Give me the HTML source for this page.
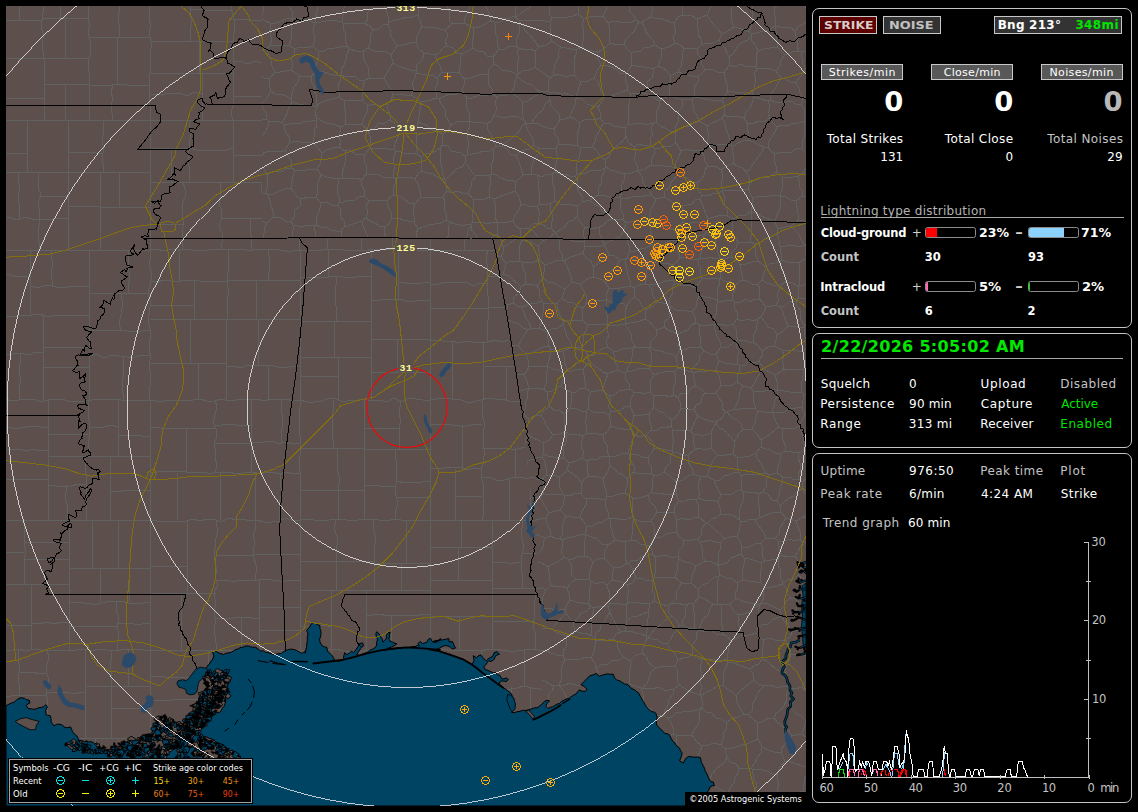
<!DOCTYPE html>
<html lang="en"><head><meta charset="utf-8"><title>Lightning Detector</title>
<style>
html,body{margin:0;padding:0;background:#000;}
body{width:1138px;height:812px;position:relative;overflow:hidden;font-family:'DejaVu Sans','Liberation Sans',sans-serif;}
#map{position:absolute;left:6px;top:6px;width:800px;height:800px;background:#5d4f4b;overflow:hidden;}
#map svg{position:absolute;left:0;top:0;}
#side{position:absolute;left:0;top:0;width:1138px;height:812px;pointer-events:none;}
.t{position:absolute;line-height:1;white-space:pre;font-family:'DejaVu Sans','Liberation Sans',sans-serif;}
.box{position:absolute;box-sizing:border-box;border:1px solid #c4c4c4;border-radius:7px;left:812px;width:320px;}
.btn{position:absolute;box-sizing:border-box;border:1px solid #c8c8c8;}
.bar{position:absolute;box-sizing:border-box;border:1px solid #8c8c8c;border-radius:2.5px;width:51px;height:11px;background:#000;overflow:hidden;}
.bar i{position:absolute;left:0;top:0;height:9px;display:block;}
.hl{position:absolute;height:1px;background:#a8a8a8;}

</style></head>
<body>
<div id="map">
<svg width="800" height="800" viewBox="6 6 800 800">
<rect x="6" y="6" width="800" height="800" fill="#5d4f4b"/>
<clipPath id="cw"><path d="M6 6H262V238H493L521 406L542 594V806H6Z"/></clipPath>
<clipPath id="ce"><path d="M262 6H806V806H542V594L521 406L493 238H262Z"/></clipPath>
<path clip-path="url(#cw)" d="M-10 -10L150 -10M-10 -10L-11 -3L-10 4L-10 12L-11 19L-10 26L-11 33L-11 41L-9 48L-10 55L-11 62L-9 69L-9 77L-8 84L-10 91L-12 98L-12 106L-9 113L-10 120M89 -10L89 -3L89 4L88 12L88 19L90 26L88 33L90 41L90 48L90 55L88 62L88 69L90 77L89 84L90 91L89 98L89 106L89 113L89 120M-10 58L89 58M43 -10L44 -2L44 5L43 13L42 20L41 28L44 35L42 43L43 51L43 58M-10 20L-2 20L5 20L13 21L20 20L28 20L36 20L43 20M19 -10L19 20M43 18L89 18M60 -10L60 -1L61 8L60 18M65 18L65 58M44 58L44 120M-10 98L44 98M44 84L89 84M65 84L65 120M89 37L150 37M119 -10L120 -2L120 6L119 13L118 21L120 29L119 37M89 85L97 85L104 86L112 85L120 84L127 85L135 85L142 85L150 85M117 37L117 85M113 85L111 92L113 99L111 106L112 113L113 120M-10 120L150 120M-10 120L-10 250M68 120L68 250M-10 172L68 172M27 120L27 172M-10 153L27 153M-10 219L-3 219L4 217L11 218L18 220L25 217L32 219L39 219L46 219L54 219L61 218L68 219M39 172L38 179L38 187L41 195L38 203L40 211L39 219M19 172L18 179L20 187L18 195L19 203L19 211L19 219M39 196L68 196M39 219L39 226L38 234L39 242L39 250M68 172L150 172M103 120L104 127L103 135L102 142L104 150L102 157L103 165L103 172M68 153L75 152L82 152L89 152L96 153L103 153M100 172L100 250M68 206L100 206M100 207L150 207M119 172L119 207M-10 250L150 250M-10 250L-11 257L-10 264L-11 271L-9 279L-11 286L-10 293L-11 300L-9 307L-10 314L-10 321L-9 329L-10 336L-10 343L-11 350L-10 357L-9 364L-10 371L-11 379L-9 386L-10 393L-10 400M89 250L89 400M-10 315L-3 316L4 316L11 316L18 316L25 315L32 315L39 314L46 316L53 316L60 315L68 316L75 315L82 315L89 315M30 250L30 315M-10 276L-2 276L6 274L14 276L22 276L30 276M30 286L38 288L45 285L52 286L60 288L67 287L74 286L81 287L89 286M52 250L51 257L53 264L51 272L52 279L52 286M43 315L43 400M-10 353L-2 355L5 354L13 354L20 353L28 355L36 352L43 353M20 353L21 361L19 369L20 377L20 384L19 392L20 400M43 367L89 367M43 347L89 347M89 330L96 330L104 331L112 330L119 330L127 331L135 331L142 331L150 330M89 293L150 293M128 250L129 257L128 264L129 271L130 278L128 285L128 293M121 293L122 300L122 308L121 315L119 323L121 330M89 356L96 354L104 358L112 355L119 356L127 357L135 357L142 355L150 356M123 356L124 363L123 371L123 378L122 385L123 393L123 400M-10 400L-3 399L5 399L12 401L19 400L26 399L34 399L41 402L48 400L55 399L63 399L70 402L77 401L85 401L92 400L99 399L106 400L114 399L121 400L128 400L135 401L143 400L150 400M-10 400L-10 520M48 400L48 520M-10 450L-3 451L5 449L12 450L19 449L26 451L34 449L41 451L48 450M-10 427L-3 428L5 427L12 428L19 428L26 427L34 426L41 427L48 427M-10 479L48 479M48 456L150 456M89 400L88 407L88 414L89 421L89 428L90 435L88 442L89 449L89 456M48 434L89 434M118 400L118 456M89 427L96 427L104 427L111 425L118 427M118 436L126 435L134 435L142 436L150 436M86 456L85 463L85 470L87 477L86 485L86 492L86 499L86 506L86 513L86 520M48 485L56 486L63 486L71 486L78 484L86 485M67 485L66 492L65 499L68 506L67 513L67 520M110 456L110 520M110 491L118 492L126 490L134 491L142 490L150 491M-10 520L150 520M-10 520L-9 527L-10 534L-10 542L-10 549L-10 556L-11 563L-10 571L-11 578L-9 585L-10 592L-9 599L-11 607L-11 614L-11 621L-9 628L-10 636L-10 643L-10 650M69 520L69 650M-10 584L69 584M24 520L24 527L25 534L24 541L25 548L25 556L24 563L25 570L24 577L24 584M-10 552L24 552M24 559L69 559M24 542L69 542M31 584L31 650M-10 625L31 625M31 623L39 624L46 622L54 624L61 622L69 623M69 602L76 602L84 603L91 604L98 604L106 602L113 601L121 601L128 603L135 603L143 603L150 602M69 568L150 568M118 520L118 568M92 520L92 568M100 568L100 602M129 568L129 602M117 602L116 610L119 618L117 626L119 634L118 642L117 650M69 626L117 626M117 623L125 623L134 624L142 624L150 623M-10 650L-3 650L5 651L12 650L19 649L26 651L34 649L41 650L48 650L55 650L63 650L70 650L77 650L85 649L92 651L99 649L106 650L114 650L121 650L128 649L135 649L143 650L150 650M-10 650L-10 820M-10 738L150 738M85 650L85 738M47 650L49 657L47 665L46 672L49 679L47 687L46 694L48 701L47 709L47 716L48 723L47 731L47 738M-10 696L-3 696L4 696L11 696L19 695L26 695L33 695L40 695L47 696M19 650L18 658L19 665L19 673L18 680L20 688L19 696M19 673L26 672L33 672L40 674L47 673M22 696L23 703L21 710L23 717L21 724L21 731L22 738M-10 716L-2 714L6 717L14 717L22 716M47 692L55 693L62 692L70 693L78 693L85 692M85 686L93 687L100 686L107 687L114 686L121 686L128 686L136 686L143 686L150 686M111 650L112 657L110 665L111 672L111 679L111 686M128 650L128 686M111 686L111 738M111 708L150 708M66 738L65 745L67 753L66 760L66 768L65 775L67 783L65 790L66 798L68 805L66 813L66 820M22 738L22 820M-10 780L-2 780L6 780L14 779L22 780M22 784L29 785L37 784L44 785L51 784L59 784L66 784M118 738L118 820M66 788L118 788M95 738L96 745L95 752L94 759L96 766L95 774L95 781L95 788M118 770L126 771L134 770L142 770L150 770M150 -10L157 -11L164 -11L171 -9L179 -10L186 -9L193 -10L200 -10L207 -10L214 -8L221 -9L229 -10L236 -10L243 -11L250 -9L257 -11L264 -11L271 -9L279 -11L286 -9L293 -10L300 -10M150 -10L151 -3L149 4L149 12L149 19L151 26L149 33L151 41L151 48L150 55L150 62L151 69L149 77L150 84L149 91L149 98L150 106L150 113L150 120M233 -10L233 -3L231 4L232 12L234 19L234 26L234 33L233 41L234 48L233 55L234 62L234 69L233 77L233 84L233 91L233 98L233 106L231 113L233 120M150 41L233 41M191 -10L191 -3L191 5L190 12L191 19L191 26L190 34L191 41M191 10L200 9L208 11L216 10L224 11L233 10M150 73L233 73M199 41L199 73M202 73L202 120M150 94L157 94L165 94L172 93L180 93L187 96L194 92L202 94M233 62L240 61L248 64L255 61L263 63L270 61L278 64L285 62L293 64L300 62M265 -10L265 62M233 20L241 19L249 20L257 21L265 20M265 32L274 33L283 32L291 31L300 32M268 62L268 120M233 96L268 96M150 120L300 120M150 120L150 250M150 182L300 182M233 120L233 182M189 120L189 128L191 135L189 143L189 151L188 158L189 166L190 174L189 182M150 148L189 148M171 148L171 182M189 148L197 150L204 150L211 150L219 150L226 150L233 148M276 120L276 182M233 155L276 155M221 182L220 189L220 197L219 204L222 212L221 220L219 227L223 235L222 242L221 250M183 182L185 189L185 197L182 204L182 212L183 220L183 227L182 235L182 242L183 250M150 224L183 224M221 218L300 218M263 182L261 189L263 196L263 204L263 211L263 218M263 196L300 196M251 218L250 226L251 234L251 242L251 250M150 250L157 249L164 251L171 249L179 249L186 249L193 250L200 251L207 250L214 249L221 250L229 249L236 250L243 249L250 251L257 249L264 249L271 249L279 250L286 251L293 251L300 250M150 250L151 257L149 264L151 271L151 279L150 286L148 293L150 300L150 307L149 314L148 321L150 329L151 336L149 343L149 350L151 357L149 364L150 371L151 379L150 386L149 393L150 400M150 319L300 319M228 250L228 258L228 265L228 273L227 281L228 289L228 296L227 304L227 312L228 319M150 281L157 282L164 280L171 281L178 282L185 280L192 280L199 281L206 282L213 281L220 282L228 281M179 250L179 281M194 281L194 319M150 305L194 305M228 280L300 280M268 250L269 257L269 265L269 272L268 280M256 280L256 319M226 319L226 400M150 363L226 363M190 319L190 363M198 363L198 400M226 366L234 366L241 368L248 365L256 365L263 365L270 365L278 367L285 368L293 366L300 366M258 319L258 366M268 366L268 400M150 400L157 401L164 401L171 400L179 400L186 401L193 400L200 399L207 401L214 401L221 399L229 401L236 400L243 399L250 399L257 399L264 401L271 399L279 399L286 399L293 401L300 400M150 400L150 520M150 473L157 472L164 471L171 472L179 471L186 472L193 473L200 472L207 473L214 473L221 472L229 472L236 474L243 473L250 472L257 473L264 473L271 472L279 474L286 472L293 474L300 473M215 400L217 407L215 415L213 422L216 429L217 436L214 444L216 451L215 458L217 465L215 473M150 428L157 427L165 429L172 428L179 428L186 428L194 429L201 428L208 428L215 428M186 428L186 473M251 400L251 473M215 443L251 443M215 425L222 425L230 424L237 425L244 425L251 425M251 443L258 442L265 442L272 441L279 444L286 442L293 444L300 443M282 400L281 407L282 414L282 421L282 428L281 436L282 443M220 473L220 520M177 473L177 520M255 473L255 520M280 473L280 481L281 488L281 496L279 504L279 512L280 520M150 520L157 521L164 521L171 521L179 521L186 521L193 519L200 521L207 519L214 519L221 522L229 518L236 520L243 519L250 521L257 520L264 522L271 522L279 521L286 518L293 521L300 520M150 520L150 650M216 520L217 527L217 534L215 542L215 549L214 556L215 563L217 571L215 578L218 585L214 592L215 599L215 607L214 614L216 621L214 628L215 636L216 643L216 650M150 593L216 593M187 520L187 593M150 566L187 566M181 593L181 650M216 580L223 580L230 581L237 581L244 580L251 580L258 580L265 579L272 580L279 581L286 581L293 580L300 580M255 520L256 528L253 535L255 543L253 550L254 558L256 565L256 573L255 580M216 555L255 555M255 554L300 554M259 580L259 650M216 618L223 618L230 619L237 617L245 617L252 618L259 618M241 618L241 650M259 607L300 607M259 630L300 630M150 650L300 650M150 650L150 820M150 748L300 748M245 650L245 658L245 665L246 673L245 680L243 688L246 695L245 703L244 710L244 718L244 725L244 733L243 740L245 748M150 700L157 700L165 701L172 700L179 699L186 700L194 699L201 699L208 700L216 699L223 700L230 700L237 699L245 700M208 650L208 657L208 664L209 671L210 678L208 686L207 693L208 700M150 677L157 676L165 677L172 678L179 677L186 677L194 677L201 677L208 677M201 700L201 708L201 716L201 724L202 732L200 740L201 748M150 728L201 728M201 730L245 730M245 693L300 693M266 693L266 748M223 748L223 820M150 774L223 774M181 748L181 774M180 774L180 820M180 795L187 795L195 795L202 794L209 797L216 793L223 795M270 748L270 820M223 785L270 785M270 793L277 793L285 793L292 794L300 793M300 -10L430 -10M300 -10L300 -3L300 4L300 12L300 19L301 26L300 33L300 41L301 48L299 55L300 62L300 69L299 77L300 84L300 91L299 98L298 106L299 113L300 120M300 47L430 47M355 -10L356 -3L355 4L354 11L355 18L355 25L356 33L355 40L355 47M300 16L355 16M386 -10L384 -3L386 4L385 11L387 18L386 25L385 33L386 40L386 47M355 24L363 24L371 25L378 24L386 24M352 47L352 54L352 61L352 69L352 76L352 83L352 91L352 98L352 105L352 113L352 120M300 90L352 90M396 47L396 54L394 61L397 69L395 76L396 83L395 91L394 98L397 105L396 113L396 120M352 83L396 83M396 89L430 89M300 120L430 120M300 120L299 127L301 134L299 142L300 149L301 156L300 163L300 171L300 178L298 185L300 192L298 199L301 207L299 214L302 221L301 228L299 236L299 243L300 250M300 174L307 174L314 174L322 174L329 173L336 174L343 175L351 173L358 174L365 175L372 176L379 174L387 174L394 173L401 173L408 175L416 175L423 174L430 174M353 120L353 174M323 120L323 128L323 136L324 143L323 151L323 159L324 167L323 174M388 120L388 128L389 136L388 143L388 151L388 159L388 167L388 174M388 147L397 146L405 147L413 146L422 148L430 147M361 174L361 250M300 214L361 214M339 174L339 214M328 214L327 221L330 228L329 235L327 243L328 250M361 216L430 216M400 174L401 183L400 191L401 199L399 207L400 216M392 216L392 250M300 250L307 251L314 250L322 250L329 249L336 249L343 250L351 251L358 250L365 251L372 249L379 249L387 249L394 250L401 249L408 250L416 250L423 250L430 250M300 250L300 400M371 250L371 400M300 321L371 321M300 277L307 277L314 277L321 277L329 277L336 276L343 277L350 278L357 277L364 276L371 277M328 250L328 259L329 268L328 277M336 277L336 285L335 292L335 299L336 306L336 314L336 321M300 357L371 357M334 321L334 357M338 357L338 400M300 376L338 376M371 339L430 339M371 301L379 300L386 299L393 300L401 299L408 302L415 301L423 300L430 301M398 250L398 301M398 282L406 283L414 283L422 283L430 282M371 372L430 372M397 339L397 372M300 400L307 402L314 402L322 401L329 398L336 399L343 402L351 400L358 400L365 399L372 401L379 400L387 402L394 398L401 402L408 398L416 399L423 400L430 400M300 400L300 407L299 414L300 421L299 428L300 435L300 442L301 449L300 456L299 464L300 471L301 478L300 485L300 492L300 499L300 506L300 513L300 520M364 400L364 520M300 448L364 448M333 400L334 408L332 416L333 424L332 432L333 440L333 448M300 490L364 490M338 448L337 455L337 462L337 469L339 476L339 483L338 490M338 490L338 498L339 505L338 513L338 520M364 449L430 449M400 400L400 407L399 414L401 421L399 428L399 435L399 442L400 449M364 428L400 428M396 449L395 456L397 463L396 470L397 478L396 485L395 492L397 499L397 506L395 513L396 520M364 486L372 485L380 486L388 486L396 486M396 481L405 483L413 482L422 482L430 481M396 497L430 497M300 520L307 519L314 520L322 520L329 520L336 519L343 519L351 521L358 520L365 519L372 519L379 520L387 521L394 519L401 520L408 520L416 521L423 520L430 520M300 520L300 650M300 590L430 590M374 520L373 528L375 535L375 543L374 551L374 559L374 566L374 574L374 582L374 590M300 561L307 562L315 561L322 561L330 561L337 561L344 562L352 561L359 561L367 561L374 561M336 520L334 528L337 537L337 545L336 553L336 561M336 561L336 590M374 563L430 563M406 520L406 563M401 563L402 572L401 581L401 590M366 590L366 650M331 590L331 650M300 627L308 626L316 627L323 625L331 627M366 615L373 615L380 614L387 616L394 615L402 615L409 615L416 616L423 614L430 615M391 615L391 650M300 650L307 651L314 651L322 649L329 649L336 649L343 651L351 651L358 651L365 651L372 649L379 650L387 651L394 651L401 649L408 651L416 651L423 651L430 650M300 650L300 820M300 711L307 713L314 712L322 713L329 713L336 713L343 712L351 713L358 710L365 711L372 712L379 710L387 712L394 709L401 712L408 710L416 710L423 712L430 711M359 650L359 711M300 686L359 686M331 650L332 657L331 664L330 672L332 679L331 686M403 650L403 658L403 665L404 673L404 681L404 688L403 696L403 704L403 711M359 676L366 674L373 676L381 675L388 676L396 676L403 676M300 761L307 761L314 760L322 761L329 760L336 762L343 761L351 762L358 760L365 762L372 763L379 760L387 762L394 760L401 759L408 761L416 760L423 762L430 761M379 711L377 718L380 725L380 733L380 740L379 747L378 754L379 761M342 711L341 718L343 725L344 733L342 740L344 747L343 754L342 761M300 730L342 730M342 741L379 741M379 735L430 735M354 761L354 820M300 793L354 793M394 761L394 769L395 776L393 783L393 791L392 798L394 805L394 813L394 820M354 798L362 799L370 797L378 799L386 798L394 798M430 -10L560 -10M430 -10L430 120M430 53L560 53M478 -10L478 53M430 17L438 17L446 16L454 16L462 17L470 18L478 17M458 17L458 24L458 31L458 39L457 46L458 53M528 -10L528 53M478 21L486 20L493 21L500 20L507 22L514 19L521 20L528 21M497 53L497 120M466 53L467 60L467 68L466 75L466 83L467 90L467 98L467 105L466 113L466 120M430 87L466 87M466 80L497 80M527 53L529 60L529 68L526 75L527 83L529 90L527 98L528 105L528 113L527 120M430 120L437 121L444 120L452 119L459 120L466 119L473 119L481 120L488 120L495 121L502 121L509 119L517 119L524 120L531 120L538 120L546 121L553 119L560 120M430 120L429 127L429 134L430 142L430 149L430 156L429 163L429 171L431 178L430 185L431 192L430 199L429 207L429 214L430 221L430 228L430 236L431 243L430 250M495 120L495 127L495 134L494 142L494 149L495 156L496 163L496 171L496 178L493 185L495 192L494 199L495 207L495 214L496 221L493 228L494 236L496 243L495 250M430 185L437 185L444 186L452 185L459 186L466 187L473 185L480 185L487 185L495 185M430 156L495 156M457 120L457 156M457 138L464 137L472 138L479 138L487 138L495 138M430 219L437 219L444 218L452 218L459 218L466 220L473 220L480 218L487 218L495 219M458 185L458 219M464 219L464 250M495 197L502 195L509 196L516 198L524 196L531 198L538 196L545 197L553 195L560 197M495 151L560 151M519 151L519 197M519 180L560 180M495 218L502 218L509 219L516 218L524 218L531 217L538 217L545 219L553 218L560 218M430 250L560 250M430 250L430 400M430 341L437 340L444 341L452 341L459 343L466 341L473 342L481 342L488 342L495 340L502 342L509 340L517 342L524 340L531 340L538 341L546 341L553 343L560 341M488 250L486 257L487 264L487 271L488 278L487 285L487 292L489 299L488 306L488 313L488 320L487 327L487 334L488 341M430 284L437 285L444 282L452 282L459 282L466 282L473 286L480 283L488 284M430 308L488 308M488 307L560 307M534 250L533 257L534 264L533 271L533 278L535 285L533 293L535 300L534 307M488 277L495 276L503 277L511 277L518 277L526 277L534 277M513 277L513 307M531 307L531 341M483 341L483 400M452 341L452 400M532 341L533 349L533 356L532 363L532 371L533 378L531 385L532 393L532 400M483 366L532 366M506 366L506 400M532 369L542 368L551 370L560 369M430 400L437 399L444 398L452 399L459 399L466 402L473 402L481 400L488 398L495 399L502 399L509 401L517 401L524 401L531 400L538 400L546 400L553 399L560 400M430 400L430 520M482 400L483 407L482 414L484 421L484 428L483 435L483 442L484 449L484 456L483 464L481 471L481 478L484 485L483 492L483 499L483 506L484 513L482 520M430 469L437 468L445 468L452 467L460 467L467 470L475 468L482 469M430 425L437 424L445 424L452 425L460 426L467 426L475 424L482 425M462 425L462 469M455 469L455 520M455 496L482 496M482 448L489 448L496 449L504 448L511 449L518 449L525 447L532 449L539 447L546 448L553 447L560 448M526 400L526 448M526 421L560 421M482 478L489 477L496 480L504 480L511 478L518 477L525 478L532 478L539 478L546 480L553 479L560 478M515 448L515 455L515 463L515 471L515 478M538 448L538 478M530 478L530 520M509 478L509 520M430 520L560 520M430 520L430 650M492 520L492 650M430 581L438 580L446 581L453 580L461 581L469 580L477 580L485 580L492 581M430 547L492 547M461 520L461 547M458 547L458 581M430 616L492 616M459 616L459 650M492 588L560 588M522 520L522 528L521 535L523 543L523 550L521 558L521 565L522 573L522 581L522 588M492 562L500 562L507 563L514 563L522 562M522 553L529 553L537 554L545 554L552 554L560 553M535 588L536 596L534 604L534 611L534 619L533 627L536 635L535 642L535 650M492 621L535 621M430 650L437 650L444 649L452 651L459 650L466 650L473 650L481 651L488 649L495 649L502 650L509 651L517 651L524 650L531 649L538 650L546 650L553 649L560 650M430 650L431 657L430 664L430 671L431 678L429 685L429 692L431 700L430 707L431 714L429 721L431 728L431 735L430 742L430 749L430 756L430 763L429 770L429 778L429 785L429 792L431 799L431 806L430 813L430 820M430 729L437 729L444 731L452 729L459 728L466 728L473 728L481 730L488 731L495 728L502 729L509 729L517 730L524 731L531 729L538 728L546 731L553 731L560 729M482 650L481 657L481 664L482 672L482 679L482 686L481 693L482 701L481 708L483 715L480 722L482 729M430 687L482 687M452 687L452 729M482 687L489 689L496 689L503 689L510 689L517 688L524 686L532 688L539 689L546 689L553 685L560 687M524 650L524 687M531 687L530 694L530 701L531 708L531 715L531 722L531 729M512 687L511 694L513 701L511 708L511 715L511 722L512 729M507 729L507 820M430 774L507 774M464 729L464 774M465 774L466 782L466 790L465 797L465 805L465 812L465 820M430 792L465 792M465 792L507 792M507 784L514 785L522 782L530 786L537 784L545 785L552 784L560 784M530 729L530 784M530 784L530 820" fill="none" stroke="#606161" stroke-width="1" shape-rendering="crispEdges"/>
<path clip-path="url(#ce)" d="M815 804L813 809L813 814L810 819L809 824M120 5L125 5L129 8L135 6L139 8L144 8L149 12L154 13L159 13L164 13L168 16L173 17L178 17L183 17L188 18L193 20L198 20L203 22L208 23L212 25L218 23L222 26L228 25L233 27L237 30L242 30M120 5L125 4L130 4L135 2L141 -0L146 0L151 0L157 0L162 -0L167 -3L173 -4L178 -6L183 -5M242 30L246 26L249 21M183 -5L188 -6L194 -5L199 -5L204 -5L209 -2L214 -3L219 0L224 -2L229 1L234 0M249 21L245 18L242 14L241 8L237 5L234 0M65 7L71 8L76 5L82 5L87 7L93 7L98 7L103 6L109 4L114 5L120 5M65 7L70 9L75 9L80 12L85 11L90 15L95 15L100 14L105 16L110 19L114 21L120 20L125 22L129 25L135 24L139 28L144 28L149 28L154 30L159 32L164 33L169 35L174 34L178 38L184 38L188 40L193 41L198 42L203 43L208 45L213 47L218 48L223 49L228 49L233 50L237 54L243 54M242 30L242 35L243 40L245 45L245 50M243 54L245 50M-256 805L-251 805L-246 806L-241 804L-236 803L-231 801L-226 801L-221 802L-216 800L-211 800L-206 799L-200 800L-196 799L-191 796L-186 795L-181 795L-176 795L-171 795L-165 795L-160 795L-156 791L-150 793L-145 793L-140 792L-135 791L-131 789L-125 790L-120 789L-115 788L-110 789L-105 786L-101 785L-95 785L-90 786L-85 783L-80 784L-75 784L-70 781L-65 782L-60 782L-55 780L-50 779L-45 778L-40 779L-35 779L-30 777L-25 775L-20 777L-15 776L-10 774L-5 774L0 775L5 774L10 772L15 771L20 771L25 769L30 769L35 768L40 769L45 767L50 767L55 766L60 766L65 764L70 763L75 766L80 763L85 762L90 763L95 763L100 760L105 761L110 759L115 759L120 757L125 756L131 759L136 758L140 756L145 756L150 754L155 754M155 754L160 755L165 755L170 757L175 757L180 757L185 758L191 756L196 756L201 757L206 757L211 757L216 757L220 759L225 761L231 760L235 762L240 762L246 759L250 762L256 761L261 761L265 764L271 762L275 763L280 764L285 766L290 765L296 764L301 765L306 764L310 767L315 768L321 766L326 765L331 767L336 767L340 770L345 770L350 770L356 768L360 771L365 771L370 771L375 772L381 770L386 770L390 773L395 774L400 773L406 772L411 774L415 775L421 773L426 774L431 774L436 774L441 776L446 775L451 776M451 776L456 778L460 780L464 783L470 783L473 788L479 788L484 790L487 795L493 794L496 799L501 801L506 803L511 804M511 811L511 804M249 21L255 18L261 17M234 0L242 -5M242 -5L247 -3L253 -3L257 1L263 1M261 17L263 12L263 7L263 1M479 605L478 600L478 595L479 590L478 585L478 580M479 605L474 605L469 606L464 606L459 606L454 604L448 605L443 606L438 603L433 605L428 604L423 605L418 605L413 603L408 604L403 605L398 603L393 604L388 602L383 604L378 601L373 604L368 601L362 602L357 603L352 602L347 603L342 603L337 603L332 602L327 600L322 600L317 600L312 603L307 602L302 600L297 602L292 600L287 601L282 599L276 602L271 599L266 601L261 601L256 601L251 598L246 599L241 600L236 599L231 598L226 600L221 599L216 600L211 600L206 598L201 598L195 599L190 599L185 599L180 597L175 598L170 598L165 598L160 597L155 596L150 596L145 597L140 598L135 598L130 596L125 597L120 595L114 598L109 595L104 596L99 595L94 594L89 595L84 595M84 595L87 591L93 591L97 587L102 585L105 580L109 577L114 576L118 572L121 569L126 566L131 564M131 564L136 564L141 563L146 564L151 564L156 565L161 564L166 566L171 567L176 567L181 565L186 567L191 566L196 567L201 565L206 568L211 569L216 567L221 568L226 568L231 568L236 567L241 570L246 568L251 568L256 568L261 569L266 571L271 568L276 569L281 571L286 569L291 569L296 571L301 571L306 571L311 572L316 570L321 573L326 573L331 571L336 571L341 573L346 573L351 573L357 572L362 573L367 573L372 574L377 576L382 573L387 575L392 576L397 574L402 577L407 577L412 575L417 576L422 577L427 577L432 576L437 578L442 578L447 577L452 577L457 577L462 578L467 580L472 579L477 579M477 579L478 580M483 636L484 630L484 624L483 619L481 613L482 607M483 636L479 639L474 642L470 646L467 651L462 654L458 657L454 662L450 665L446 669M482 607L479 605M-256 805L-252 801L-247 800L-243 797L-239 793L-235 791L-229 791L-225 787L-221 785L-217 782L-212 780L-208 777L-204 774L-201 769L-195 768L-192 765L-187 763L-183 759L-178 758L-173 756L-170 752L-166 749L-161 747L-157 744L-152 743L-149 738L-144 736L-139 734L-136 730L-131 728L-126 727L-122 723L-119 720L-114 717L-109 715L-106 711L-102 708L-97 706L-93 704L-88 701L-84 698L-80 696L-76 692L-71 691L-66 689L-62 686L-58 683L-53 681L-50 677L-45 676L-41 672L-36 670L-32 667L-28 664L-24 661L-20 658L-15 656L-11 654L-6 651L-2 649L1 644L6 643L12 642L15 637L20 635L24 632L28 629L33 629L36 624L42 623L45 618L49 615L55 615L58 611L62 607L67 606L71 603L76 601L79 597L84 595M155 754L160 752L166 754L171 752L175 749L180 748L185 748L191 748L196 746L201 746L206 745L210 743L216 743L221 742L226 741L230 739M446 669L441 670L436 671L431 673L426 674L422 678L417 677L413 681L407 680L403 682L398 684L393 684L388 687L384 689L379 690L374 691L369 693L365 696L360 697L355 698L350 699L346 702L341 703L336 704L331 706L326 708L321 708L316 710L312 712L307 714L303 716L298 718L293 720L288 720L283 721L279 725L273 723L269 727L264 727L259 728L254 730L250 734L245 734L240 734L236 739L230 739M446 669L452 668L458 670L464 670L469 672L475 671M230 739L236 739L241 738L246 740L251 738L256 737L261 738L266 736L271 736L276 736L281 735L286 737L291 736L296 735L301 733L306 734L311 734L317 734L322 734L327 734L332 734L337 733L342 732L347 732L352 733L357 731L362 731L367 732L372 729L377 730L382 732L387 731L392 729L397 728L403 730L408 729L413 729L418 729L423 729L428 727L433 726L438 726L443 726L448 726L453 725L458 724L463 726L468 725M468 725L473 723L477 720L482 719L486 716L490 711L495 710L500 709L503 705L509 704L513 701M513 701L513 691M475 671L481 672L485 675L489 680L494 681L499 684L504 685L509 688L513 691M468 725L473 727L479 728L483 731L489 733L493 736L499 737L504 739L509 740L514 743M513 701L518 704L520 710L525 714M525 714L525 719L523 724L521 729L518 733L515 738L514 743M510 769L505 769L500 769L496 772L491 773L485 771L481 773L475 773L471 774L466 776L461 776L456 777L451 776M510 769L512 764L512 759L512 753L513 748L514 743M514 743L514 743M659 101L664 98L670 96M659 101L660 106L656 111L656 117L656 122M656 122L660 126L665 128L670 131L675 133M682 100L676 98L670 96M682 100L683 106L679 110L678 116L678 122L675 127L675 133M675 133L675 133M757 828L757 823L753 818L753 812L753 807L750 802M750 802L744 801L739 799L733 799M722 821L724 815L727 810L731 805L733 799M257 273L257 268L259 263L261 258L261 253L263 248L262 243L263 238L264 233L265 227L267 223M257 273L257 268L253 264L252 259L249 255L248 250L246 246L244 241L241 237L239 232L239 227M267 223L261 221L255 221L249 221L243 219M239 227L243 219M523 823L519 820L515 816L511 811M341 231L336 231L331 230L326 227L321 227L316 225M341 231L344 227M338 205L341 210L340 216L344 221L344 227M338 205L332 205L326 202L320 202M320 202L320 208L318 214L316 219L316 225M271 432L273 427L271 421L272 417L274 412L274 406L276 402L274 396L277 392L276 386L276 381L277 376L276 371L279 366L278 361L281 356L280 351L280 346L280 341L282 336L281 331L284 326L282 321L284 316L284 311L284 306L286 301L285 296L287 291L287 286L287 280L288 275L287 270L288 265L291 261L290 255L291 250L290 245L292 240L292 235L293 230L293 225M271 432L275 428L278 423L282 420L286 416L289 412L294 410L297 405L301 402L306 400L310 396L314 392L318 388L320 383L324 380M324 380L323 375L322 370L324 365L323 360L322 355L322 349L322 344L322 339L320 334L322 329L320 324L321 319L319 314L318 308L320 303L320 298L319 293L317 288L316 283L316 278L316 272L316 267L316 262L314 257L315 252L316 247L314 242L316 236L315 231L314 226M314 226L309 225L304 226L298 226L293 225M270 434L271 432M270 434L270 428L268 424L267 419L269 413L269 408L267 404L265 399L268 393L267 388L264 384L265 379L264 374L266 368L263 364L265 358L264 353L262 349L263 343L262 338L263 333L263 328L260 324L259 319L262 313L260 308L261 303L260 298L260 293L260 288L259 283L258 278L257 273M273 217L280 217L285 221L291 222M273 217L267 223M293 225L291 222M655 149L660 148L666 146L671 146L676 143M655 149L650 145M656 122L654 123M676 143L675 133M650 145L650 139L653 134L651 128L654 123M659 101L655 98L650 95L644 93M654 123L649 124L644 124L638 123L633 124L628 125M628 125L629 120L628 114L628 109L629 104L630 98L630 93M644 93L637 94L630 93M390 297L389 292L388 287L389 282L389 277L387 272L387 267L387 262L386 257L388 252L385 247L385 242L386 237L384 232L384 227M390 297L388 292L386 287L386 282L383 278L382 273L378 269L378 263L376 259L374 254L373 249L372 244L368 240L367 235L365 231L363 226L362 221M384 227L379 226L375 223L370 221L366 218M362 221L366 218M341 231L341 236L342 241L344 246L344 251L343 256L344 261L345 267L346 272L347 277L344 282L345 287L347 292L346 297L345 302L347 307L349 312L348 318L349 323L350 328L349 333L351 338L348 343L350 348M344 227L350 225L356 223L362 221M391 308L392 302L390 297M391 308L390 310M390 310L385 314L382 319L379 322L375 326L371 330L365 332L361 336L359 341L355 345L350 348M324 380L331 375M314 226L316 225M350 348L347 352L343 356L339 361L338 367L333 370L331 375M447 377L453 376L458 374L462 370L467 368L472 368L477 365M447 377L442 377L437 377L432 376L427 377L422 375L417 377L412 377L407 375L402 375L397 374L392 374L387 373L382 373L376 374L371 374L366 374M366 374L371 372L376 371L381 370L386 367L392 368L396 365L401 365L407 365L411 361L416 359L421 359L426 357L432 358L436 354L442 355L447 354L452 352L456 350L461 348L466 348L471 346L476 345M477 365L476 360L476 355L476 350L476 345M728 662L726 667L724 673L723 679L723 685M728 662L734 663L739 665L744 667L750 669M723 685L727 689L732 692L736 696M750 669L753 674L754 680M736 696L740 691L745 687L749 684L754 680M736 696L737 702L740 708L744 714M754 680L758 684L764 686M764 686L760 690L757 695L755 700L752 705L752 711L748 715M748 715L744 714M510 769L517 776M511 804L514 799L516 793M517 776L516 781L517 787L516 793M274 541L279 541L284 542L290 541L295 541L300 540L305 540L311 542L316 539L321 540L326 541L331 540L337 539L342 541L347 540L352 541L357 540L363 541L368 541L373 540L378 539L384 541M274 541L279 539L284 540L289 538L294 536L299 537L304 534L308 533L314 533L318 531L324 531L329 530L333 528L338 529L343 526L348 526L353 526L358 523L363 523L368 521L373 521L378 522L383 520L388 519L393 519L398 515L403 517L408 516L412 513L418 514L423 512L427 510L433 512L438 509L443 509L447 506L453 507L457 504L462 503L467 503L472 501L477 502L482 500M483 501L482 500M483 501L484 508L483 515M384 541L389 539L394 539L399 537L404 538L409 536L415 535L419 533L425 533L430 532L435 529L440 530L445 527L450 528L455 526L461 526L465 522L471 522L476 522L481 520M483 515L481 520M485 563L487 557L487 552L485 546L487 541M485 563L480 561L474 561L469 559L464 556L459 557L454 553L449 553L443 553L438 551L433 549L429 547L423 546L418 546L413 544M413 544L418 542L424 542L429 544L434 542L440 543L445 542L450 543L455 541L461 540L466 543L471 541L477 542L482 542L487 541M154 547L159 548L164 545L169 546L174 545L179 546L184 547L189 546L194 543L199 544L204 546L209 545L214 544L219 544L224 542L229 544L234 543L239 544L244 543L249 541L254 541L259 541L264 543L269 541L274 541M154 547L150 552L145 555L140 557L135 561L131 564M384 541L389 541L395 541L401 542L407 541L413 544M485 564L482 569L480 574L477 579M485 564L485 563M489 539L485 535L485 530L484 524L481 520M489 539L487 541M540 715L546 721M540 715L535 716L530 715L525 714M545 747L546 746M545 747L540 746L535 746L529 746L524 744L519 745L514 743M546 721L546 726L546 731L544 736L544 741L546 746M605 96L601 92L600 87L598 82L594 78M605 96L611 96L616 94L622 92L627 90M627 90L627 85L625 79L625 74M625 74L620 73L616 69L611 67L606 65L601 65M601 65L597 71L594 78M604 123L609 123L614 126L620 127L625 128M604 123L600 118M628 125L625 128M630 93L627 90M605 96L602 101L598 107M600 118L600 112L598 107M775 26L776 31L776 37L777 42L777 47M775 26L769 30L763 31L757 33L751 34M751 34L751 36M751 36L752 41L756 46L758 51M758 51L764 49L770 48L777 47M752 212L757 213L761 216L766 218L771 220L775 223M752 212L751 211M751 211L753 204L752 197M752 197L757 197L763 196L769 196L775 195L780 195M780 195L781 196M781 196L780 202L780 207L778 213L776 218L775 223M702 151L697 150L692 151L687 149L681 151M702 151L704 156L705 161L708 166M708 166L705 170L704 175L701 180L697 183M681 151L679 156L676 162L675 168M697 183L692 182L687 178L682 177L677 175M675 168L677 175M721 170L715 166L708 166M721 170L723 175L722 180L721 186L723 191M723 191L722 191M722 191L718 193L712 194L707 196L702 195M702 195L698 190L697 183M655 149L654 155L651 160L651 165M651 165L657 165L663 166L669 166L675 168M676 143L681 151M827 155L822 154L817 153L812 154L807 154M823 183L818 181L814 177L809 174L804 172M807 154L806 160L806 167L804 172M804 121L809 122L814 123L819 122M804 121L804 121M804 121L804 127L804 132L804 138L802 143L802 149M807 154L802 149M822 197L815 195L808 196L802 196M802 196L802 191L799 186L799 181L798 176M798 176L804 172M780 195L782 189L782 183L782 177M781 196L786 197L791 200L796 201M796 201L802 196M798 176L793 177L787 178L782 177M733 163L737 166L743 168L746 172M733 163L727 166L721 170M723 191L729 190L736 190L742 190L748 189M748 189L750 183M746 172L749 177L750 183M748 189L752 197M782 177L777 172M750 183L755 180L760 177L767 178L772 175L777 172M802 149L797 148L792 152L786 152L780 152L775 154M777 172L776 166L774 160L775 154M800 262L794 262L788 262L782 260M800 262L807 258M805 245L805 252L807 258M805 245L798 247L792 245L786 246L780 246M782 260L781 253L780 246M752 212L751 217L751 222L751 227L751 232L751 237L750 242M750 242L755 244M778 229L775 223M778 229L777 234M755 244L761 242L765 238L771 237L777 234M800 262L799 268L799 274L800 280L799 287M799 287L799 287M799 287L793 283L785 282M782 260L780 261M785 282L786 276L783 272L781 267L780 261M785 282L780 286M780 261L775 263L770 263L766 267M780 286L773 285L767 283L762 280M762 280L764 273L766 267M755 244L755 249L756 255L758 261M777 234L779 240L780 246M758 261L766 267M737 340L736 346L739 352L737 358L738 364M737 340L732 344L727 347L720 348M738 364L731 364L725 363L719 361M720 348L716 354M719 361L716 354M752 769L753 774L754 779L757 785L755 790L758 795M752 769L757 769L762 770L767 771L772 774L777 774M758 795L763 797L768 794L774 793L779 794M777 774L777 779L779 784L777 789L780 794M780 794L779 794M782 820L781 815L781 810L780 805L781 799L779 794M750 802L754 799L758 795M815 804L810 800L808 794L803 791M803 791L797 793L791 792L785 794L780 794M748 715L753 719L758 723M744 714L738 717L731 719L726 723M726 723L726 729L723 734L723 739L721 745M758 723L757 728L757 734L758 739M758 739L753 741L747 744L742 745L736 747L731 748L725 749M721 745L725 749M291 99L292 93L294 87L298 82L300 76M291 99L292 102M300 76L306 76L311 76M317 105L316 101L317 95L314 91L314 86L311 81L311 76M317 105L317 107M292 102L298 104L304 105L311 105L317 107M275 72L280 72L286 71L291 70M275 72L272 66L271 60L269 55L267 49M291 70L293 65L291 59L294 55L294 49M270 45L267 49M270 45L277 45L283 45L289 45M289 45L294 49M291 99L286 96L281 94L275 94L271 91M270 78L275 72M270 78L269 85L271 91M300 76L295 73L291 70M243 54L241 59L240 65L240 70M245 50L251 49L256 51L262 51L267 49M240 70L242 73M242 73L248 73L253 73L259 74L264 78L270 78M311 76L318 71M318 71L316 64L319 58L318 51M313 46L318 51M313 46L307 48L300 47L294 49M270 23L265 21L261 17M270 23L271 28L270 34L272 40L270 45M240 171L241 176L239 182L240 188L241 194M240 171L235 168L230 166L224 168L220 166L215 162L210 161L204 162L200 159L195 158L190 156L185 155L180 153M180 153L175 154L170 151L165 153L160 150L155 153L150 151L145 152L140 151L135 152L130 150L125 151L120 149L115 150L110 151L105 150L100 149L95 147L90 149L85 149L80 146L75 146L70 147L65 148L60 148L55 147L50 148L45 148L40 146L35 146L30 145L25 146L20 147L15 144L10 144L5 144L-0 144L-5 143L-10 142L-15 142L-20 142L-25 143L-30 143L-35 143L-40 140L-45 142L-50 142L-55 142L-60 142L-65 139L-70 142L-75 140L-80 139L-85 141L-90 139L-95 140L-100 140L-105 140L-110 140L-115 137L-120 137L-125 136L-130 139L-135 137L-140 138L-145 136L-150 136L-155 137L-160 135L-165 138L-170 135L-175 134L-180 135L-185 135L-190 133L-195 135L-200 134L-205 133L-210 134L-215 133L-220 134L-225 133L-230 132L-235 132L-240 133L-245 132L-250 132L-255 132L-260 131L-265 132L-270 129L-275 131L-280 130L-285 130L-290 130L-295 131L-300 131L-305 128L-310 129M237 198L241 194M267 175L267 181L267 187L266 194M267 175L264 169L260 164M266 194L261 193L256 195L251 195L246 193L241 194M242 169L248 167L254 166L260 164M242 169L240 171M242 169L243 163L242 158L241 152L238 147L239 142M239 142L234 143L229 142L224 143L220 147L215 147L210 148L205 149L200 150L195 149L190 151L185 152L180 153M243 219L240 214L239 209L240 203L237 198M273 217L273 211L271 206L270 201L268 195M268 195L266 194M240 70L235 71L230 72L226 75L220 75L215 77L210 78L206 80L200 81L195 82L190 83L186 85L181 86L175 86L171 89L166 90L160 89L156 92L151 93L146 94L140 94L136 97L130 97L125 97L121 101L116 101L110 102M110 102L105 101L100 102L95 104L91 105L85 104L80 104L75 104L70 105L65 105L60 105L55 105L50 106L45 107L40 106L35 105L30 108L25 106L20 107L15 109L10 108L5 109L0 111L-5 109L-10 110L-15 110L-20 110L-25 109L-30 110L-35 113L-40 111L-45 112L-50 112L-55 111L-60 113L-65 113L-70 112L-75 114L-80 114L-85 114L-90 114L-95 115L-100 115L-105 116L-110 118L-115 116L-120 117L-125 116L-130 116L-135 119L-140 119L-145 120L-150 118L-155 120L-160 121L-165 119L-170 120L-175 122L-180 120L-185 120L-190 121L-195 123L-200 121L-205 122L-210 122L-215 121L-220 122L-225 122L-230 125L-235 125L-240 124L-245 126L-250 123L-255 126L-260 126L-265 127L-270 127L-275 125L-280 127L-285 127L-290 128L-295 129L-300 129L-305 127L-310 129M316 197L308 197L301 199M316 197L318 192L317 186L319 180L321 175M301 199L297 197L294 192L291 188M291 188L292 182L293 176L295 170M295 170L300 170L306 170L311 169L317 169M317 169L321 175M320 202L316 197M291 222L294 217L295 210L300 206L301 199M338 205L339 203M339 203L339 197L337 191L338 185L338 179M338 179L333 178L327 177L321 175M268 195L274 194L279 191L285 189L291 188M292 168L287 168L283 171L277 171L272 172L267 175M292 168L295 170M339 203L344 202L349 200L355 200L359 197L364 196M366 218L368 212L366 206L369 201M369 201L364 196M338 179L342 178M342 178L347 178L352 179L357 178L362 180M364 196L365 190L361 185L362 180M644 93L647 88L647 82L652 78L653 73L654 68M625 74L629 70L632 65M632 65L637 66L643 67L649 68L654 68M390 310L395 310L400 311L405 313L411 312L415 315L421 313L426 313L431 315M366 374L361 375L356 373L351 373L346 375L341 374L336 375L331 375M476 345L479 340M479 340L477 333L473 327M431 315L436 317L442 317L447 318L452 322L458 321L463 325L468 325L473 327M479 340L484 340L489 342L494 342L499 344L504 345M504 345L502 340L504 334L503 328M503 328L497 327L493 323L487 323L482 319M473 327L479 324L482 319M477 365L482 369L488 369M488 369L497 368M504 345L505 347M497 368L499 363L500 357L503 352L505 347M719 40L721 44L725 48L727 53L729 57M719 40L713 43L707 43L701 45M697 49L701 45M697 49L698 54L701 59L702 65L705 70M705 70L711 69L717 72L724 72M724 72L730 65M730 65L729 57M751 36L748 40L743 42L739 45L736 49L733 54L729 57M756 67L756 62L756 56L758 51M756 67L750 66L745 66L740 64L735 67L730 65M820 566L814 567L807 566L801 568M803 543L800 547L798 552L795 556M803 543L809 542L815 542L821 544M795 556L799 562L801 568M781 555L778 559M781 555L788 557L795 556M778 559L778 566L781 571L780 577L783 583M801 568L798 575M798 575L794 579L788 580L783 583M804 450L810 452L816 450L822 451M804 450L804 443L803 437L801 431M822 433L816 434L811 433L806 432L801 431M781 555L779 549L778 541M803 543L800 539M778 541L783 542L789 539L795 541L800 539M765 561L771 560L778 559M765 561L762 556L763 549L761 543M778 541L775 538M775 538L766 538M761 543L766 538M627 585L629 591L627 597L628 603M627 585L622 582L617 581L612 580M612 580L607 585M607 585L608 589L610 594L609 599L610 604M610 604L615 603L621 604L626 604M626 604L628 603M621 632L617 627L615 622L612 617L610 612M621 632L625 631M627 621L625 631M627 621L626 615L627 609L626 604M608 606L610 612M608 606L610 604M761 603L768 604L774 607L780 610M761 603L764 598L763 592L765 587M765 587L771 587L777 586L782 584M780 610L784 606L786 601L791 598M791 598L787 594L786 588L782 584M627 621L632 617L638 616L643 614L648 612M625 631L630 631L636 633L641 634L646 636M648 612L648 618L647 624L647 630L646 636M628 603L633 602L639 603L644 603L650 604M648 612L650 604M636 578L632 583L627 585M636 578L642 578L647 581L652 580M652 580L653 586L652 591L655 596L654 601M650 604L654 601M728 662L727 659M723 685L717 686L712 690L706 692L701 696M700 695L701 696M700 695L701 690L701 685L700 680L702 675L700 669L701 664L702 659M727 659L721 661L715 660L708 659L702 659M541 798L534 798L529 794L522 796L516 793M541 798L540 803L541 808L540 813L539 818L540 823M680 349L676 357M680 349L685 350L690 347L696 347L701 347M676 357L677 362L678 368M701 347L704 351M704 351L700 355L699 362L694 366L691 372M678 368L685 370L691 372M716 371L710 370L704 372L698 371L693 373M716 371L717 366L719 361M704 351L710 354L716 354M693 373L691 372M678 398L674 395M678 398L681 393L688 393L691 388L696 386M678 368L674 372M696 386L694 379L693 373M674 372L676 377L675 383L673 389L674 395M654 407L658 411L664 413L668 417L672 420M654 407L653 402L654 396M678 398L680 402L681 408M654 396L659 395L664 395L669 397L674 395M672 420L676 417L679 413L681 408M517 541L512 541L506 541M517 541L520 537L523 532M505 517L509 520L513 523L518 524L523 526M505 517L502 520M502 520L500 526L500 532L498 538M506 541L498 538M523 532L523 526M527 561L525 556L523 550L520 546L517 541M527 561L523 564L517 564L513 568L509 571L504 572M500 569L504 572M500 569L503 563L503 558L505 552L504 547L506 541M483 501L490 500L497 497M483 515L489 518L495 520L502 520M506 500L497 497M506 500L505 506L504 511L505 517M489 539L498 538M485 564L490 567L495 567L500 569M546 538L550 536M546 538L540 536L535 534L529 533L523 532M550 536L550 530L547 524L546 518M523 526L527 519M527 519L533 521L540 519L546 518M608 545L605 551L604 558M608 545L602 544L597 539L592 537L586 535M593 562L598 559L604 558M593 562L590 558L585 556M585 556L584 550L584 545L585 540L586 535M482 607L487 605L493 604L499 602M478 580L483 583L488 584L493 586L499 587M499 602L498 597L500 592L499 587M504 572L504 575M504 575L500 580L499 587M593 562L591 568L589 573L589 579M585 556L579 556L573 559L568 559M568 559L571 564L571 570L572 575L576 579M576 579L582 579L589 579M614 568L609 563L604 558M614 568L612 574L612 580M607 585L602 582L596 584L591 581M589 579L591 581M560 775L560 782L561 789M560 775L555 774L551 770L548 766L543 763M543 763L539 767L535 770L531 774M531 774L535 778L539 782L543 786L546 791M546 791L553 790L561 789M545 747L543 752L544 758L543 763M517 776L524 774L531 774M541 798L546 791M570 797L571 802L569 807L567 812L567 817L566 822M570 797L566 792L561 789M596 668L595 663L591 658M596 668L601 665L608 664L612 660L619 660L624 657M624 657L620 653L618 648L617 642L613 639M613 639L608 640L602 641L596 640M591 658L594 652L595 646L596 640M621 632L616 634L613 639M610 612L607 617L605 621L601 625L600 630L596 633L595 639M595 639L596 640M598 683L596 678L598 673L596 668M598 683L593 685L587 684L581 686L576 685L570 683L565 685L559 685M591 658L586 657L581 659L575 659L570 660L565 659M565 659L563 664L561 669L561 675L561 680L559 685M513 691L515 690M540 715L544 711L546 706L548 701L548 695L552 691L554 686M554 686L549 684L545 681L539 680M515 690L519 687L525 686L530 684L534 682L539 680M554 686L559 685M565 659L563 656M563 656L557 655L551 653L546 651L540 650M559 685L559 685M539 680L538 674L536 668L535 662M540 650L536 656L535 662M515 690L513 684L515 679L515 674L514 669L514 664M535 662L530 663L524 662L519 662L514 664M475 671L480 670L485 668L489 664L494 663L499 661L504 661L509 658M509 658L514 664M600 685L605 687L610 684L615 685L621 685L626 685M600 685L600 691L598 696L596 701L596 707M626 685L625 691L625 697L623 702L624 708L622 714L622 720M596 707L601 709L605 714L611 715L616 718L622 720M598 683L600 685M626 685L629 684M624 657L630 661M629 684L630 678L629 672L631 667L630 661M647 638L646 636M647 638L645 643L643 648L642 653M630 661L635 656L642 653M622 721L622 720M622 721L626 717L632 715L637 713L642 710L646 706M629 684L635 686L641 688M646 706L643 701L643 694L641 688M726 723L722 719L716 718L712 713L706 712L702 708M702 746L708 745L714 743L721 745M702 746L696 741L692 735M692 735L694 730L698 725L700 719L699 713L702 708M701 696L702 701L702 707M702 708L702 707M733 163L734 157L732 151L733 146M733 146L732 146M702 151L707 146M707 146L712 145L717 145L722 144L727 145L732 146M581 82L579 87L578 92L576 97M581 82L588 81L594 78M598 107L593 106L587 104L582 99L576 98M576 97L576 98M516 46L516 40L519 34L519 28L519 22M516 46L519 48M519 48L524 50L530 49L535 51M519 22L523 25L525 31L529 34L533 39L536 43L539 47M539 47L535 51M493 57L499 49M493 57L494 64M499 49L505 49L510 46L516 46M494 64L498 66L502 70L507 71L512 72L517 75M517 75L518 70L517 64L519 59L517 53L519 48M535 67L536 61L535 56L535 51M535 67L529 70L522 71L517 75M517 75L517 75M552 41L550 34L550 28L550 21M552 41L546 45L539 47M519 22L519 20M550 21L545 21L540 20L535 20L529 21L524 20L519 20M577 49L571 49L566 48L561 47M577 49L576 54L574 59L575 64L574 70L574 75M561 47L558 53L558 59L555 64L554 70L553 76M574 75L569 76L564 76L558 74L553 76M597 52L592 51L587 50L582 47M597 52L598 59L601 65M581 82L574 75M582 47L577 49M550 78L553 76M550 78L545 74L540 71L535 67M552 41L556 44L561 47M550 78L548 84L548 91M548 91L549 92M549 92L555 92L560 94L565 93L570 95L576 97M715 2L720 -0L726 -3M715 2L710 8L707 15M707 15L710 20L714 25L718 29L722 34M730 -1L731 5L732 10L731 16L732 22L734 27M722 34L728 31L734 27M697 -8L702 -6L706 -2L710 1L715 2M697 19L702 17L707 15M697 19L690 15L682 15M682 15L683 10L682 4L681 -1M697 19L697 24L698 29L698 35L701 39L701 45M719 40L722 34M755 1L751 -3M755 1L753 6L752 11L752 16L752 22L751 27L749 32M749 32L744 30L739 28L734 27M751 34L749 32M787 -1L781 4L775 7M801 -2L804 4L807 10L808 17M808 17L805 23L799 26L795 31M795 31L791 28L785 27L780 27L775 26M775 7L774 14L776 20L775 26M755 1L759 3L765 3L770 4L775 7M825 24L819 21L813 20L808 17M775 26L775 26M791 226L799 220M791 226L795 230L799 234L801 240L805 245M799 220L804 221L809 221L814 219L819 220M805 245L809 242L811 237L815 234L820 231L824 227M796 201L797 207L798 214L799 220M778 229L785 227L791 226M805 245L805 245M807 258L814 259L820 261M822 281L816 282L811 285L805 284L799 287M550 100L551 106L555 110L559 114L560 120M550 100L545 104L543 110L538 114L535 118L531 123M531 123L537 123L542 126L548 128L554 129M554 129L557 125L560 120M550 100L549 92M576 98L575 105L572 111L570 117M560 120L565 119L570 117M600 118L595 120L589 119L584 120L579 123M579 123L575 119L570 117M782 371L784 366L782 360L784 355L782 350M782 371L787 369L792 370L798 369L803 370M803 352L798 351L793 350L788 350L782 350M803 352L804 357L805 362L805 367M805 367L803 370M836 775L830 774L825 771L820 770L815 768L811 765M815 746L813 753L812 759L811 765M803 791L804 785L804 779L808 773L808 767M777 774L780 767L785 761M808 767L802 766L797 764L791 762L785 761M808 767L811 765M751 768L752 769M751 768L755 763L757 758L761 753L762 747M762 747L768 750L774 752L781 753M785 761L781 753M821 712L818 708L813 705L811 701L807 697L806 691L802 688M802 688L807 688L812 688L817 687L822 688L827 687L832 689L837 688M806 722L803 717L797 714L793 710L789 706L786 701M806 722L804 728L802 734M802 734L792 736M792 736L789 731L785 728L781 725L777 722L774 718M786 701L784 706L781 710L776 713L774 718M821 712L816 716L810 717L806 722M789 688L795 689L802 687M789 688L786 694L786 701M802 687L802 688M815 746L811 742L807 738L802 734M781 753L782 748L785 744L789 740L792 736M758 723L764 721L768 718L774 718M762 747L758 739M787 686L781 687L775 687L770 685L764 686M787 686L789 688M728 793L723 791L718 788L712 786L706 786M728 793L730 788L734 783L735 778L738 773L739 768M739 768L736 764L730 762L727 757M727 757L725 762L720 766L716 769L712 774L710 779L705 782M706 786L705 782M733 799L728 793M701 820L701 815L700 810L698 806L697 801M697 801L698 795L704 791L706 786M751 768L745 768L739 768M725 749L727 757M692 769L697 772L701 777L705 782M692 769L694 764L697 760L698 755L700 751L702 746M682 769L681 774L679 779L676 783L676 788L673 793M682 769L692 769M697 801L691 802L684 799L678 799M673 793L678 799M263 1L267 -4M317 105L322 102L328 100L333 99L339 97M318 71L324 72L329 74L334 75L340 76M339 97L339 91L338 86L340 81L340 76M368 106L367 112L364 118L362 124M368 106L362 100M344 101L350 100L356 101L362 100M344 101L344 107L346 112L345 118L346 124M362 124L356 124L351 124L346 124M368 106L374 104L381 106L387 104M387 104L388 110L390 115L390 120M390 120L385 123L378 124L374 129L368 131M362 124L368 131M342 178L342 172L344 167L345 162L345 156L345 151M366 174L362 180M366 174L367 167L364 161L365 154M345 151L350 150L355 154L360 154L365 154M264 153L260 149L258 144M264 153L269 151L275 151L280 152L285 150M258 144L260 139L263 135L266 131L268 126L269 121M285 150L289 143M289 143L289 137L285 131L284 125M269 121L276 121L282 123M282 123L284 125M260 164L261 158L264 153M239 142L241 140M241 140L247 142L253 141L258 144M292 168L291 161L288 156L285 150M242 73L244 79L242 85L244 91L243 97M110 102L116 103L121 101L126 104L131 105L137 105L142 102L147 106L153 105L158 106L163 106L168 106L174 106L179 108L184 105L189 106L195 108L200 107L205 108M205 108L210 106L216 103L222 104L227 100L233 101L238 99L243 97M508 320L503 328M508 320L513 322L519 324L523 328L528 330M505 347L511 345L518 346M518 346L521 341L524 335L528 330M533 145L533 139L530 134L527 129L526 123M533 145L529 149L524 150L519 153L516 156M526 123L522 126L519 132L515 135L511 139L506 142L502 146M516 156L510 154L507 149L502 146M494 115L500 117L506 118L512 116L518 117L524 120M494 115L492 120L487 124M524 120L526 123M526 123L526 123M487 124L488 130L491 135L493 140L496 146M502 146L496 146M391 308L395 303L399 299L403 295L407 291M407 291L414 287M414 287L419 287L425 288L429 287L435 287L440 287L445 286L450 286L454 283L460 285L465 285L470 284L475 284M431 315L437 315L441 311L447 311L452 308L457 307L462 304L467 302L472 301L477 299M475 284L476 289L478 294L477 299M482 319L485 313L488 307M477 299L482 305L488 307M508 305L499 302M508 305L507 310L506 315L508 320M499 302L493 304L488 307M522 240L520 245L519 250L519 255L519 261M522 240L528 241L533 243L538 246M539 260L539 253L538 246M539 260L534 262L528 262L522 262M522 262L519 261M525 284L521 287M525 284L526 279L525 273L523 268L522 262M521 287L517 283L513 280L509 276L503 274M519 261L512 261L506 263M506 263L505 268L503 274M513 303L514 297L519 293L521 287M513 303L508 305M499 302L497 295L497 289L495 282M503 274L499 279L495 282M475 284L480 279M495 282L488 280L480 279M682 15L678 17L675 22M675 22L670 22L665 20L660 18L655 18L650 17M650 17L653 11L652 4L654 -2M787 686L787 679L785 673M750 669L754 666L759 664L762 659M785 673L780 672L775 668L771 665L767 661L762 659M802 392L801 386L802 381L803 376L803 370M802 392L803 394M825 371L820 368L815 370L810 368L805 367M803 394L809 394L816 394L822 393M820 526L814 522L809 519L803 517M822 502L817 502L811 501M811 501L809 507L807 513L803 517M775 538L779 534L780 528L783 523L786 518M800 539L800 532L798 527L796 521M786 518L796 521M803 517L796 521M736 598L730 604M736 598L740 600L745 602L750 603L755 604L760 605M760 605L760 605M760 605L754 608L749 612L744 614L738 615M738 615L733 610L730 604M742 635L741 630L739 625L738 620L738 615M742 635L737 638L731 641M731 641L727 636L722 634M730 604L721 605M721 605L721 611L722 617L721 623L723 628L722 634M716 371L719 375L720 380L721 386M721 386L716 393M696 386L701 389L705 393M705 393L711 394L716 393M681 408L688 409L694 410M705 393L702 397L701 403L696 405L694 410M654 407L649 414M671 426L672 420M671 426L666 428L661 427L656 431L651 430M651 430L651 425L649 419L649 414M654 396L650 392M674 372L669 371L664 372L659 373L654 375M650 392L650 386L651 380L654 375M630 406L634 415M630 406L631 399L634 393M634 415L642 415L649 414M650 392L644 394L639 392L634 393M651 430L646 435M630 429L635 435M630 429L632 424L633 420L634 415M646 435L640 437L635 435M522 478L527 477L533 477L538 480L543 478M522 478L520 479M520 479L520 485L519 491L519 497M543 478L543 484L544 489L543 494M519 497L524 500M524 500L529 498L534 497L540 498M543 494L540 498M506 500L513 500L519 497M497 497L496 491L499 485L497 479L497 473M506 471L497 473M506 471L510 474L516 475L520 479M527 519L527 513L524 507L524 500M549 513L546 518M549 513L546 508L543 503L540 498M564 495L563 494M564 495L564 500L563 505L560 510M560 510L555 511L549 513M563 494L556 494L549 494L543 494M560 539L562 540M560 539L563 533L562 527L564 521L566 516M562 540L567 538L573 537L579 535L585 534M566 516L573 517L580 517M580 517L584 522L587 527M587 527L585 534M560 510L566 516M550 536L555 538L560 539M568 559L564 557M564 557L561 552L563 546L562 540M586 535L585 534M564 495L570 496L575 493L581 494M581 494L586 499M586 499L586 505L582 511L580 517M586 499L593 498L599 499L606 499M608 518L608 512L605 505L606 499M608 518L603 522L597 523L592 526L587 527M608 545L615 540M615 540L613 535L612 530L610 525L610 519M608 518L610 519M482 500L479 496L477 490L476 484L473 479M497 473L493 470L488 470L483 468M473 479L477 472L483 468M154 547L157 543L162 541L165 537L169 534L173 531L177 528L179 522L184 521L187 517L190 512L193 509L199 507L201 502L204 498L208 495L214 494L216 489L220 486M473 479L468 478L463 480L458 479L453 480L448 480L443 479L438 480L433 481L428 478L423 480L418 481L413 482L408 480L403 481L397 483L392 481L387 480L382 481L377 482L372 482L367 481L362 481L357 483L352 481L347 481L342 482L337 481L332 483L326 482L321 484L316 484L311 483L306 482L301 485L296 485L291 485L286 484L281 485L276 485L271 484L266 484L261 483L256 485L250 484L245 487L240 484L235 486L230 486L225 486L220 486M270 434L267 437M267 437L263 440L260 444L255 447L252 452L250 456L245 459L243 464L237 466L235 471L232 475L226 477L224 483L220 486M447 377L452 379L457 382L461 386L467 387L471 391L475 394M488 369L488 375L484 379L486 384L483 389M475 394L483 389M528 461L523 457L518 453M528 461L527 467L524 472L522 478M506 471L507 465L509 460L510 454M518 453L510 454M482 432L480 425L480 419L481 413M482 432L487 432L491 435L497 434L501 436M481 413L489 412L496 413M496 413L497 418L499 424L499 429L502 434M501 436L502 434M553 435L549 440L543 443M553 435L549 430L546 425L544 420L541 415M543 443L538 440L533 438L529 435M529 435L526 430M526 430L528 424L528 419M541 415L534 416L528 419M518 453L522 449L525 445L525 439L529 435M510 454L506 448L500 444M500 444L501 436M502 434L508 433L514 431L520 432L526 430M563 494L560 488L559 483L559 477M543 478L546 475M546 475L553 475L559 477M528 461L535 458L542 457M546 475L546 468L545 462L542 457M543 443L543 448L543 454M542 457L543 454M581 494L581 489L582 483M582 483L578 478L573 474L567 470M559 477L564 474L567 470M630 406L625 407L621 410L616 411L611 411M611 426L610 420L609 415M611 426L617 428L623 429L630 429M611 411L609 415M634 393L630 389M630 389L624 390L619 391L614 395L609 396M611 411L608 406L611 401L609 396M553 435L559 434L565 432M541 415L544 410L550 407M550 407L554 410L560 411L564 414M565 432L564 426L564 420L564 414M499 602L500 603M504 575L508 578L512 581L518 583L521 587M521 587L519 593L520 598M520 598L513 600L506 603M500 603L506 603M483 636L488 636L493 637L498 637L503 636M500 603L502 608L501 614L501 620L501 625L502 631L503 636M509 658L508 652L512 646L511 639M503 636L511 639M546 538L543 542L543 547L540 552L536 556L535 561M564 557L559 561L553 564L548 567M548 567L542 563L535 561M527 561L529 562M521 587L527 581M527 581L529 575L527 568L529 562M529 562L535 561M576 579L571 583L567 588M548 567L549 573L549 579L551 585M567 588L562 586L556 587L551 585M523 600L520 598M523 600L529 599L535 600L542 602M527 581L532 583L537 584L541 587L546 590M542 602L543 596L546 590M551 585L546 590M566 636L566 641L566 647L563 651L563 656M566 636L572 635L575 631M595 639L592 636M575 631L581 633L587 634L592 636M608 606L603 606L598 607L593 608M592 636L591 630L592 624L591 619L593 613L593 608M675 765L669 766L663 766L656 766M675 765L677 759L676 753L677 747L676 741L676 735M651 747L651 752L651 758L652 763M651 747L656 746L660 741L665 740L669 736L674 734M656 766L652 763M676 735L674 734M682 769L675 765M655 789L661 790L667 793L673 793M655 789L656 783L657 778L657 772L656 766M692 735L687 735L681 736L676 735M641 737L647 741L651 747M641 737L644 733L648 728L650 723L652 718L657 715M657 715L664 715M664 715L667 718M667 718L671 722L673 728L674 734M667 718L672 717L676 713L682 712L687 711L692 711L697 710L702 707M538 629L533 635M538 629L533 625L530 621L529 615L524 612M533 635L526 634L519 635M524 612L520 616L515 618M515 618L517 624L518 630L519 635M540 650L537 646L535 640L533 635M511 639L519 635M523 600L524 606L524 612M506 603L510 608L513 612L515 618M559 685L562 689L565 694L567 698L568 703L571 708L574 712M596 707L594 709M594 709L589 710L584 709L579 710L574 712M546 721L552 720L557 721L563 719L568 720M574 712L568 720M656 668L651 672L649 678L647 684L642 688M656 668L662 666L669 667L675 666M642 688L648 688L653 689L658 687L664 690L669 690L674 689M675 666L678 672L677 679L679 685M679 685L674 689M642 653L646 656L648 661L651 665L656 668M641 688L642 688M678 660L675 654L670 649L667 643M678 660L675 666M647 638L648 638M667 643L662 643L658 640L653 639L648 638M646 706L652 710L657 715M664 715L665 710L668 705L669 699L673 694L674 689M700 695L694 693L689 691L684 688L679 685M678 660L683 658L688 657L692 655M702 659L697 658L692 655M748 140L749 134L747 129L748 124M748 140L754 142L759 145L764 147M748 124L754 123L759 121L765 121L770 118M764 147L768 147M768 147L769 141L772 137L775 132L777 127M777 127L773 123L770 118M733 146L738 143L743 141L748 140M746 172L750 169L753 164L756 160L759 156L762 152L764 147M775 154L771 151L768 147M804 121L798 123L793 123L788 126L782 125L777 127M675 133L679 129L684 127L689 126L694 123L699 121M707 146L708 139L708 132L707 126M699 121L707 126M682 100L692 99M699 121L697 116L694 111L693 105L692 99M732 146L730 140L728 134L726 129L725 123L722 118M707 126L712 123L717 121L722 118M390 120L396 124L399 129M368 131L370 136L370 142L370 148M370 148L376 148L382 148L388 149L394 149M399 129L399 134L397 139L395 144L394 149M349 49L356 51L363 51M349 49L347 54L346 60L344 65L341 70L341 75M363 51L363 57L365 62L368 67L368 72L370 78M341 75L346 77L351 76L356 77L360 81L365 80M370 78L365 80M318 51L324 51L329 48L335 48L341 47L347 46M347 46L349 49M340 76L341 75M339 97L344 101M362 100L362 93L363 87L365 80M387 104L391 100L393 95M384 78L387 84L391 89L393 95M384 78L377 79L370 78M421 4L426 1L431 -2L437 -1L441 -5M421 4L418 -1L417 -7L417 -13L414 -17L413 -23M540 92L537 95L532 98L528 101L523 102M540 92L536 89L532 85L526 83L521 80L517 76M523 102L518 97L511 93M517 76L515 82L514 88L511 93M548 91L540 92M524 120L522 114L522 108L523 102M531 123L526 123M517 75L517 76M494 115L497 109L495 103L497 97M497 97L501 95L507 95L511 93M488 74L488 80L489 85L492 89L493 94M488 74L481 74L476 76L470 78L464 79M493 94L488 95L483 95L477 96L472 98L467 98M464 79L464 85L462 91M467 98L462 91M497 97L493 94M494 64L489 69L488 74M493 57L487 56L483 51L478 51L473 48M459 72L464 79M459 72L460 66L460 60L462 54M473 48L468 51L462 54M469 121L475 123L481 122L487 124M469 121L470 115L467 109L466 104L467 98M610 -1L607 4L606 10L603 16M608 23L603 16M608 23L613 21L619 22L625 22L631 22L636 20M636 20L634 16L630 12L629 6L626 2L623 -2M597 52L602 50L606 47L610 43M610 43L609 36L610 29L608 23M584 19L582 24L584 30L583 36L583 41L582 47M584 19L590 17L596 16L603 16M552 18L549 13L549 7L550 1L547 -4M552 18L557 17L563 17L568 17L573 16L578 14M578 14L578 8L580 1L579 -5M584 19L578 14M550 21L552 18M515 16L515 17M515 16L515 10L515 3L513 -3M515 17L520 14L524 11L529 8L532 4L537 2L540 -2L545 -5M494 22L500 22L504 18L509 18L515 16M494 22L496 28L495 33L498 38L497 44L499 49M519 20L515 17M804 121L805 115L804 109L801 104M768 101L770 100M768 101L770 107L768 113L770 118M770 100L775 102L780 102L786 102L791 101L796 104L801 104M819 90L814 93L809 95L803 98M801 104L803 98M678 334L679 339L678 344L680 349M678 334L683 332L688 330L691 325L696 323M701 347L700 342L700 336L699 331L700 325M696 323L700 325M750 242L744 243L738 242M751 211L746 215L739 215L734 219M738 242L733 235M733 235L732 230L732 224L734 219M722 191L725 197L724 204L727 209L727 216M734 219L727 216M651 165L645 169L638 171M638 171L642 176L643 182L646 187L650 191L652 196M677 175L674 179L671 183L669 188L665 191L664 197M652 196L656 199M664 197L656 199M652 196L647 195L642 197L636 196L631 197L626 199L620 198M656 199L654 204L651 209L650 214L649 219M626 222L631 222L637 220L643 221L649 219M626 222L623 220M623 220L623 214L620 209L620 203L620 198M650 145L644 146L639 144L634 147M638 171L637 171M637 171L637 165L634 159L636 153L634 147M625 128L626 136M634 147L628 142L626 136M604 123L601 127L599 132L596 137L595 142L592 147M626 136L623 141L619 144L614 148L611 152L609 157L605 160M592 147L597 151L600 156L605 160M799 287L798 292L798 298M821 304L815 304L810 300L804 298L798 298M588 363L588 356M588 363L593 365L598 368L603 372L608 374M588 356L594 355L598 351L602 349L608 347M608 374L617 370M608 347L613 351M613 351L614 355L614 361L617 365L617 370M608 374L606 379L604 385L602 390M630 389L629 384L625 379L625 373M609 396L602 390M617 370L625 373M649 368L643 368L638 369L632 371L626 372M649 368L654 375M625 373L626 372M608 325L607 330L609 336L606 341L608 347M608 325L613 325L619 325L625 324M613 351L618 351L624 348L629 349L635 346M625 324L628 329L631 334L632 341L635 346M649 368L651 363L651 358L651 353L649 348M626 372L628 367L631 362L632 357L632 351L635 347M649 348L642 347L635 347M676 357L671 354L666 353L661 351L655 350L650 347M649 348L650 347M635 347L635 346M778 390L777 389M778 390L777 396L775 401L774 406L772 412M777 389L771 390L765 391L759 392L753 391M772 412L765 412L758 411M753 391L753 397L754 403L756 409M756 409L758 411M782 371L775 375M802 392L796 392L790 392L784 391L778 390M775 375L777 382L777 389M773 413L779 412L785 412L790 408L796 408L802 407M773 413L772 412M802 407L803 400L803 394M743 386L737 382M743 386L751 388M751 388L755 383L757 378L760 373L763 368M737 382L737 376L740 371L739 365M739 365L745 365L749 361L755 363L759 361M759 361L763 368M734 409L739 409L745 408L750 408L756 409M734 409L737 404L739 398L740 392L743 386M753 391L751 388M775 375L769 372L763 368M721 386L726 385L732 385L737 382M738 364L739 365M738 340L743 340L748 342L753 342M738 340L737 340M753 342L758 346L762 351M762 351L762 356L759 361M762 351L768 347L774 346M774 346L782 350M807 655L810 651L814 647L816 642L819 638L823 635M807 655L811 659L815 663L817 668M802 687L805 682L809 677L813 673L817 668M785 673L786 667L789 661L791 654M791 654L797 654L802 656L807 655M678 799L676 804L672 808L670 813L668 818L665 823M647 798L648 803L650 807L652 812L653 817L653 823M647 798L642 795L637 793L631 793M631 793L627 796L623 799L618 801M618 801L617 807L615 813M655 789L651 794L647 798M628 769L633 768L638 766L642 764L648 765L652 763M628 769L628 775L631 781L629 787L631 793M595 781L590 786L585 791M595 781L599 784L602 788L606 792L610 794L614 798L618 801M585 791L589 796L591 802L593 807L596 812L600 817M339 147L341 142L339 137L340 132L341 127M339 147L333 148L327 150L322 153M322 153L317 147L313 142M313 142L314 137L314 131L317 126L316 120M341 127L336 125L331 124L326 123L322 121L317 118M317 118L316 120M345 151L339 147M370 148L365 154M346 124L341 127M317 169L320 164L321 159L322 153M289 143L295 141L301 142L307 142L313 142M284 125L289 124L295 123L300 124L305 121L311 121L316 120M317 107L315 113L317 118M292 102L289 107L287 113L285 118L282 123M241 125L240 124M241 125L246 123L251 123L257 122L262 119L267 119M240 124L241 119L243 114L244 110L248 106L248 100M267 119L266 113L263 108L262 103M262 103L255 102L248 100M241 140L242 132L241 125M205 108L211 109L215 113L221 113L225 116L231 118L235 123L240 124M269 121L267 119M243 97L248 100M271 91L267 98L262 103M316 -3L317 2L318 7L317 12L315 17L316 22M315 23L316 22M315 23L310 21L304 20L299 18L293 19M290 -3L290 2L289 7L293 12L292 18M293 19L292 18M313 46L315 40L314 34L313 29L315 23M289 45L291 40L292 35L291 29L291 24L293 19M270 23L276 23L281 21L286 19L292 18M661 49L669 47L675 43M661 49L662 55L660 61L658 66M658 66L663 68L667 71L670 76M684 48L680 45L675 43M684 48L682 54L682 60L681 66L678 72M678 72L670 76M670 96L669 89L670 82L670 76M654 68L658 66M697 49L690 48L684 48M675 22L674 27L676 32L673 37L675 43M698 77L693 76L688 75L683 74L678 72M698 77L705 70M698 77L698 82L695 86L694 91L695 97M692 99L695 97M655 45L653 40L649 36L646 32L644 27L642 22M655 45L650 47L645 47L641 51L636 51L631 53M624 44L627 49L631 53M624 44L626 39L630 35L634 32L636 27L639 22M639 22L642 22M650 17L642 22M661 49L655 45M632 65L631 59L631 53M610 43L617 45L624 44M636 20L639 22M531 328L539 328M531 328L529 323L526 318L524 313L522 307M539 328L541 323L542 318L543 313L543 308L544 303M522 307L527 305L532 303L537 303L542 301M542 301L544 303M513 303L517 306L522 307M528 330L531 328M537 286L540 290L539 296L542 301M537 286L531 284L525 284M537 286L543 278M539 260L545 265M545 265L544 272L543 278M444 262L448 259L454 259M444 262L446 256L445 250L447 245L447 239L449 234L448 228L450 222M450 222L455 224L460 225L465 225L471 224M471 224L471 226M471 226L468 231L467 236L464 240L462 245L458 249L455 254L454 259M414 287L419 284L424 280L428 277L432 273L435 268L440 266L444 262M480 279L479 274L479 269L477 264L477 259M454 259L460 260L465 259L471 258L477 259M501 257L496 255L491 257L486 254L481 255M501 257L503 252L503 247M497 234L501 240L503 247M497 234L492 237L489 242L484 245L481 250M481 250L481 255M506 263L501 257M477 259L481 255M522 240L520 237M520 237L514 240L509 244L503 247M471 226L472 231L476 235L476 241L480 245L481 250M472 223L471 224M472 223L477 222L482 222L487 224L492 222L497 222M497 234L498 228L497 222M497 222L497 222M520 237L520 229M520 229L516 226L513 221M497 222L503 223L508 222L513 221M763 640L769 638L775 640L780 641L786 640M763 640L756 633M756 633L758 629M758 629L762 625L768 624L772 620L777 618L782 616M786 640L790 637L792 632M792 632L788 624M782 616L784 621L788 624M791 654L790 647L786 640M762 659L762 653L763 646L763 640M742 635L749 635L756 633M731 641L729 647L728 653L727 659M760 605L758 611L759 617L757 623L758 629M761 603L760 605M780 610L782 616M812 627L816 628M812 627L807 628L802 630L796 630L792 632M805 607L809 603L815 601L818 596L824 593M805 607L799 604M799 604L795 599M795 599L800 597L803 592L807 588M807 588L813 589L818 588L824 590M812 627L810 622L808 617L806 613L805 607M788 624L792 620L792 613L796 609L799 604M791 598L795 599M798 575L802 578L803 584L807 588M783 583L782 584M606 499L607 497M589 476L584 479L582 483M589 476L596 476L603 479M603 479L604 485L606 491L607 497M653 554L650 545M653 554L647 556L642 557L638 560L632 560L628 564M650 545L645 545L640 544L636 540L631 540M628 564L627 563M627 563L625 558L625 553L626 547L625 542M625 542L631 540M655 557L660 556L666 555L672 558L678 556M655 557L653 554M677 532L671 533L666 534L661 537L655 537M677 532L679 537L684 540M655 537L650 545M678 556L679 550L683 546L684 540M636 578L634 573L632 568L628 564M652 580L654 578M654 578L655 573L655 568L655 562L655 557M614 568L621 567L627 563M615 540L620 541L625 542M610 519L615 518L621 520L627 519L632 517M631 540L632 535L633 529L632 524L634 519M632 517L634 519M655 537L654 532L654 526L651 521M634 519L639 521L645 521L651 521M677 532L676 526L677 520M674 512L677 520M674 512L668 512L663 512L657 512M657 512L654 517L651 521M761 583L760 576L761 570L762 563M761 583L755 582L749 581L743 580M743 580L742 575L743 569L744 564L744 558M762 563L756 561L750 559L744 558M765 561L762 563M765 587L761 583M736 598L735 593L738 589L737 583M737 583L743 580M672 603L678 603L683 605L688 604M672 603L668 606M688 604L685 609L686 615L683 620L682 625M668 606L668 612L672 616M672 616L676 620L679 625M682 625L679 625M654 601L661 604L668 606M648 638L651 634L655 629L659 626L663 622L667 619L672 616M667 643L671 639L673 634L677 631L679 625M713 604L710 609L708 615L703 619L701 624L699 630M713 604L709 602L705 599L699 597M699 597L694 603M694 603L693 609L695 615L694 622L695 628M695 628L698 630M698 630L699 630M721 605L718 604M718 604L713 604M722 634L716 634L711 630L705 632L699 630M688 604L694 603M682 625L688 628L695 628M692 655L692 649L693 644L696 640L696 635L698 630M716 393L719 398L722 402L722 408L725 412M694 410L698 416M698 416L704 419L710 421L716 422M716 422L722 418L725 412M752 429L755 423L756 417L758 411M752 429L743 430M734 409L727 412M727 412L731 417L737 420L741 424L743 430M727 412L725 412M570 797L575 795L581 795L585 791M742 490L741 483L741 476M742 490L737 491L732 494L726 494L721 494M739 472L741 476M739 472L733 473L729 475L724 476L720 480L714 480M721 494L718 490L716 485L714 480M679 501L685 501L690 499L696 500M679 501L675 506L674 512M677 520L683 518L688 520L694 518L699 517M699 517L698 512L699 506L696 500M676 495L676 488L677 482M676 495L679 501M694 474L688 476L683 480L677 482M694 474L701 477M701 477L699 482L698 487L700 493L698 498M696 500L698 498M721 494L718 502M714 480L707 476M707 476L701 477M698 498L704 500L711 500L718 502M742 490L743 491M743 491L744 497L742 503L740 508L739 514L740 520M740 520L734 516L728 514L721 514M721 514L720 508L718 502M761 543L755 544L749 547L742 547M766 538L764 533L761 529L758 525L755 520M755 520L750 519L745 522L740 521M740 521L740 526L739 531L737 536M737 536L740 541L742 547M744 558L741 554M742 547L741 554M684 540L691 540L698 539M699 517L706 523M698 539L701 535L702 528L706 523M721 514L717 517L712 519L708 523M706 523L708 523M740 520L740 521M737 536L730 537L724 539M708 523L712 527L716 531L721 534L724 539M654 578L659 577L665 578L670 577L675 578M678 556L679 559M679 559L677 565L677 571L675 578M672 603L676 599L676 593L679 587L682 583M675 578L682 583M485 452L481 460M485 452L482 447L479 443L476 438M481 460L476 459L472 456L466 456L462 453L457 451L452 451L447 449L443 446L438 446L432 446L427 445L423 443L418 441L413 440L409 437L404 436L399 434M476 438L470 438L465 435L460 433L454 434L448 432L443 430L438 428M438 428L432 430L426 429L421 430L416 432L410 434L405 435L399 434M483 468L481 460M500 444L496 447L489 448L485 452M482 432L476 438M267 437L272 437L277 435L283 437L288 435L293 436L298 436L303 435L308 437L313 437L318 436L323 435L328 436L333 435L338 436L343 434L348 437L353 433L358 434L363 435L368 434L374 433L379 435L384 436L389 434L394 434L399 434M478 412L481 413M478 412L473 413L468 417L463 418L458 419L453 422L448 425L443 428L438 428M478 412L477 406L478 400L475 394M561 386L556 387L552 391L547 392M561 386L563 379L564 373M547 392L544 390M564 373L559 370L553 369L547 366M547 366L547 366M544 390L546 384L546 378L547 372L547 366M528 419L524 414M550 407L548 399L547 392M544 390L539 388L534 388L529 388M524 414L525 409L525 403L527 399L527 393L529 388M496 413L501 408M524 414L518 412L513 410L507 409L501 408M586 388L580 388L576 392L571 392M586 388L591 392M591 392L589 397L588 403L588 409M571 392L572 398L571 404L570 409M570 409L575 408L581 411L586 411M588 409L586 411M583 369L578 369L572 371L566 371M583 369L584 375L585 382L586 388M561 386L566 390L571 392M564 373L566 371M583 369L588 363M602 390L597 391L591 392M609 415L604 412L598 412L593 412L588 409M564 414L570 409M611 426L608 431L603 435M603 435L598 434L592 433L586 434M586 434L587 428L585 422L587 416L586 411M582 436L577 434L571 435L566 432M582 436L582 441L581 447L584 452L582 458M566 432L567 438L566 443L563 448L563 453L564 458M582 458L576 461L569 463M564 458L569 463M586 434L582 436M565 432L566 432M543 454L548 456L554 457L559 458L564 458M587 461L582 458M587 461L587 466L587 471L589 476M567 470L569 463M526 354L522 350L518 346M526 354L532 353L537 350L543 347L549 346M539 328L547 332M547 332L548 339L549 346M566 371L566 366L564 361L564 356L563 351M547 366L549 360L550 355L551 349M563 351L557 351L551 349M526 354L528 360L529 366M547 366L541 366L535 366L529 366M549 346L551 349M542 602L544 608M538 629L539 628M544 608L543 613L541 618L541 623L539 628M566 636L561 634L556 632L551 629M551 629L545 628L539 628M570 600L567 604L565 609M570 600L576 602L582 603L588 604M588 604L591 606M591 606L587 611L581 613L578 618L573 622M573 622L569 618L566 613M566 613L565 609M567 588L569 594L570 600M544 608L549 608L555 610L560 610L565 609M591 581L590 587L589 592L590 598L588 604M593 608L591 606M575 631L573 622M551 629L555 625L559 621L562 617L566 613M546 746L551 746L557 748L562 748L567 747M568 720L571 725L573 731L574 737M567 747L572 743L574 737M560 775L564 772L567 768L571 765L574 761M567 747L570 754L574 761M594 709L595 714L595 720L594 725L595 731L594 736M574 737L581 738L587 737L594 736M724 115L724 110L724 105L722 100M724 115L729 117L734 116L739 117L744 118M744 118L746 112L750 108L752 103L754 97M728 91L734 92L740 92L746 93L752 94M728 91L725 96L722 100M752 94L754 97M695 97L700 98L705 99L711 100L716 101L722 100M722 118L724 115M748 124L744 118M768 101L761 99L754 97M756 67L757 69M724 72L725 78L727 85L728 91M757 69L754 74L756 79L755 84L754 89L752 94M469 121L469 121M469 121L463 121L457 122L451 125M462 91L457 94L450 94L445 96L439 99M451 125L448 120L445 115L445 109L441 104L439 99M320 -8L326 -7L330 -3L336 -2L341 0L347 3M316 22L321 22L326 21L331 20L337 21L342 21M342 21L343 15L344 8L347 3M347 46L345 40L346 34L343 29L343 23M342 21L343 23M421 4L419 6M391 -7L396 -4L400 -2L406 -1L410 0L414 5L419 6M444 -3L445 3L448 8L450 13L449 19L452 24M422 26L428 28L434 27L440 29L445 30M422 26L420 21L418 15M452 24L445 30M418 15L419 6M469 -1L469 4L469 9L467 14L465 18L464 23M483 -2L485 4L487 9L490 15L490 21M490 21L485 24L479 27L473 28M473 28L464 23M452 24L458 23L464 23M494 22L490 21M473 48L472 42L474 35L473 28M447 46L445 41L448 35L445 30M447 46L453 48L457 53L462 54M459 72L454 73L448 72L442 72M439 99L436 98M436 98L436 93L435 88L438 83L437 78M442 72L437 78M447 46L443 48L439 53L435 55M442 72L440 66L437 61L435 55M411 95L414 90L412 84L415 78L416 73M411 95L416 98L420 102M420 102L426 101L431 100L436 98M437 78L432 75L427 75L421 74L416 73M776 71L781 78M776 71L780 66L781 60L785 55M781 78L786 79L790 82L796 83M796 83L799 78L803 74L805 68M805 68L802 63L802 58L801 52M785 55L792 52L799 51M799 51L801 52M757 69L763 68L770 69L776 71M770 100L771 94L775 89L778 83L781 78M777 47L781 51L785 55M803 98L800 93L799 88L796 83M825 75L820 73L815 70L810 71L805 68M821 47L816 48L811 50L806 51L801 52M795 31L795 36L798 41L797 46L799 51M696 288L699 296M696 288L699 283L702 279M702 279L708 278L714 279L719 278M699 296L705 297L711 298L717 300M719 278L720 284L717 289L718 295L717 300M731 257L724 259M731 257L737 260L740 265M724 259L722 265L721 272L720 278M740 265L741 270L742 275L742 280M720 278L725 281L731 282L735 285M742 280L735 285M738 242L736 248L732 252L731 257M720 258L724 259M720 258L718 253L717 247L715 242L715 237M733 235L727 235L721 236L715 237M758 261L752 262L746 264L740 265M762 280L758 284M758 284L752 284L747 281L742 280M702 195L700 199M664 197L668 199L672 202L677 203L682 206M700 199L695 200L692 204L687 205L682 206M727 216L721 215L714 217L708 219M700 199L702 204L704 209L706 214L708 219M620 197L614 198L609 197L603 195L598 195M620 197L622 192L621 186L624 180L625 174M598 195L598 189L601 184L601 178L604 173L605 168M625 174L620 173L615 171L610 170L606 167M605 168L606 167M620 198L620 197M637 171L631 173L625 174M605 160L606 167M554 129L555 134L558 139L558 145M579 123L579 129L577 134L577 140L577 145M577 145L571 145L564 144L558 145M592 147L586 147L580 147M577 145L580 147M605 168L601 170L596 170L591 170L586 173L581 173L576 175M580 147L580 153L579 158L576 164L576 170L576 175M590 200L594 204L600 207L603 212L609 214L612 219M590 200L582 202M582 202L578 206M578 206L577 216M577 216L580 222L585 227M585 227L592 229L599 227M612 219L607 221L604 225L599 227M623 220L617 219L612 219M598 195L590 200M576 175L575 176M575 176L578 181L577 187L579 192L582 196L582 202M558 237L556 233M558 237L563 239L568 239L573 241L579 241L584 242M556 233L560 230L565 227L568 222L574 220L577 216M584 242L584 237L583 232L585 227M604 244L604 245M604 244L602 239L599 233L599 227M604 245L598 247L592 246L585 247M584 242L585 247M626 222L624 231M624 231L620 236L615 239L610 241L604 244M820 319L815 322L809 323L805 326M826 347L819 346L813 346L806 348M806 348L807 341L804 335L804 328M804 328L805 326M798 298L796 301M796 301L797 306L801 311L800 317L802 322L805 326M803 352L806 348M657 302L663 303L669 303M657 302L652 307L646 310M664 327L657 330M664 327L664 322L669 318L669 312L671 307M657 330L653 326L650 322L645 319M646 310L645 319M671 307L669 303M649 285L652 290L653 296L657 302M649 285L653 284L659 284L663 282L668 280L673 280M673 280L675 283M675 283L672 288L673 293L670 298L669 303M645 284L639 285L634 288M645 284L649 285M634 288L634 297M634 297L639 300L642 306L646 310M678 334L673 332L668 330L664 327M650 347L651 341L656 336L657 330M692 312L695 317L696 323M692 312L687 311L682 310L676 310L671 307M625 324L625 323M625 323L630 323L635 322L640 321L645 319M625 323L625 317L625 311L627 306M627 306L630 301L634 297M696 288L691 286L686 285L680 285L675 283M699 296L697 301L696 307L692 312M384 227L389 224L392 218M369 201L375 200L381 200L387 200M392 218L391 212L388 206L387 200M446 220L446 214L444 208L445 202L443 197M446 220L441 223L435 224L429 225L423 227L418 229M443 197L438 197L432 197L427 198L421 197M418 229L414 222M414 222L414 216L413 210L415 204M421 197L415 204M447 191L443 197M447 191L452 193L457 191L462 193L468 193M450 222L446 220M472 223L472 217L473 211L473 205L473 199M468 193L473 199M407 291L407 285L410 280L409 275L412 270L412 265L413 260L414 255L414 249L416 244L417 239L416 234L418 229M392 218L398 218L403 220L408 221L414 222M387 200L393 195M393 195L399 196L404 199L409 203L415 204M631 286L625 287L620 288L614 288L609 288M631 286L630 281L628 276L627 270L626 265L625 259M620 260L625 259M620 260L617 265L614 269L610 272L609 278L605 282M605 282L609 288M634 288L631 286M627 306L622 303L616 303L611 302L606 299M609 288L607 293L606 299M608 325L608 325M608 325L607 320L607 315L606 310L607 305L606 300M606 299L606 300M557 303L562 298M557 303L550 304L544 303M543 278L548 282L554 283L559 286L565 289M562 298L565 289M445 180L446 186L447 191M445 180L449 176L453 173L456 169L462 167L465 163M468 193L471 187L472 181L476 176M476 176L472 172L469 167L465 163M496 146L494 148M469 121L470 127L467 132L467 138L469 144L468 149L467 155M494 148L489 151L483 151L478 153L472 154L467 155M529 228L533 224L538 223M529 228L534 232L538 237L543 241M538 223L543 225L547 228L552 229M543 241L549 238L555 233M555 233L552 229M537 206L539 211L539 217L538 223M537 206L532 207L526 205L521 204M520 229L529 228M513 221L515 215L519 210L521 204M538 246L543 241M537 206L539 204M539 204L545 205L551 203M551 203L550 209L552 214L553 219L551 224L552 229M558 237L560 243L559 249L562 254L563 260M556 233L555 233M545 265L551 263L557 260L563 260M551 203L555 201M555 201L560 204L566 204L572 205L578 206M491 174L489 175M491 174L496 175L501 178L506 180L511 180L516 182M489 175L491 180L490 186L489 191L490 197M516 182L515 191M515 191L510 193L504 195L499 197L494 199M490 197L494 199M476 176L482 175L489 175M494 148L493 153L494 158L492 163L491 168L491 174M465 163L465 156M465 156L467 155M516 156L519 162L521 168L523 175M523 175L516 182M473 199L479 200L485 199L490 197M497 222L495 217L496 211L495 205L494 199M521 204L519 197L515 191M801 431L799 426M799 426L802 420L805 415M805 415L810 415L815 416L820 419L825 420M805 415L802 407M773 413L775 420L779 427M752 429L757 434L761 440M761 440L766 437L770 434L775 430L779 427M804 450L799 453M799 426L794 429L788 428L783 429M799 453L792 452L785 451M785 451L785 445L783 440L782 435L783 429M783 429L779 427M676 495L671 494L666 495L661 493L656 494L651 492M677 482L673 479L669 475L664 472M664 472L659 475L654 475M654 475L652 481L653 487L651 492M657 512L655 506L650 502L648 495M651 492L648 495M632 517L633 511L632 504L633 498M648 495L643 497L638 498L633 498M607 497L613 496L619 494L625 493M625 493L633 498M711 433L712 438L711 443L711 448M711 433L713 428L716 423M716 423L719 428L724 430L727 434L731 437L734 442M711 448L718 455M718 455L723 456L728 454L733 454M733 454L734 448L734 442M716 422L716 423M743 430L739 433L737 438L734 442M738 458L737 465L739 472M738 458L733 454M707 476L709 470L711 465L714 459L718 455M672 451L673 452M672 451L672 446L674 440L672 435L673 430M673 452L678 453L683 455L688 455M673 430L679 430L685 430L691 431M694 450L688 455M694 450L694 445L693 440L693 434M693 434L691 431M671 426L673 430M654 448L653 443L650 439L646 435M654 448L660 448L666 450L672 451M694 474L692 468L688 462L688 455M664 472L666 467L670 463L670 457L673 452M698 416L695 421L693 426L691 431M711 448L705 450L699 448L694 450M711 433L705 435L699 435L693 434M698 539L699 541M724 539L720 543M699 541L704 542L709 540L715 542L720 543M698 589L691 583M698 589L702 585L708 583L713 578L719 576M691 583L692 577L694 571L696 566M696 566L705 561M705 561L712 562L717 565M719 576L720 575M720 575L718 565M718 565L717 565M699 597L698 589M682 583L691 583M718 604L717 598L717 593L718 587L717 582L719 576M679 559L685 562L691 563L696 566M699 541L701 545L703 551L702 556L705 561M720 543L721 548L718 554L719 560L717 565M737 583L732 579L726 578L720 575M741 554L736 556L731 558L728 562L723 564L718 565M502 396L503 396M502 396L503 390L502 384L502 378L501 372M503 396L508 394L513 393L518 390L523 390L529 388M501 372L507 372L513 374L519 374L524 375M524 375L527 381L529 388M483 389L488 391L493 391L497 395L502 396M501 408L502 402L503 396M497 368L501 372M529 388L529 388M529 366L527 371L524 375M564 322L570 320L576 321L582 320M564 322L563 324M563 324L565 330L567 336L570 341L572 347M588 325L582 320M588 325L586 331L583 336L583 342L581 348M581 348L572 347M557 303L557 308L559 313L561 318L564 322M562 298L567 302L573 302L577 306L583 308M583 308L582 314L582 320M547 332L552 329L558 328L563 324M563 351L572 347M608 325L601 324L594 324L588 325M606 300L599 300L593 302L587 302M583 308L587 302M588 356L586 351L581 348M600 742L600 747L600 753L598 758L599 763L597 769M600 742L605 740L610 739L614 735L619 735L624 733M626 735L627 741L626 746L625 751L624 756L626 762L624 767M626 735L624 733M624 767L619 768L613 766L608 768L603 769L597 769M597 769L597 769M574 761L580 762L585 765L591 767L597 769M594 736L600 742M622 721L622 727L624 733M628 769L624 767M641 737L633 736L626 735M595 781L596 775L597 769M366 174L372 174L377 174L383 177L388 178L394 177M394 149L396 151M396 151L394 156L393 161L395 167L393 172L394 177M393 195L393 189L395 184L395 179M421 197L420 191L418 184L415 179M415 179L408 177L402 177L395 179M445 180L445 180M445 180L439 178L433 174L427 173L421 171M415 179L418 174L421 171M394 177L395 179M417 123L417 129L416 134L416 139L416 145L417 150L418 155M417 123L418 122M418 122L423 124L428 126L432 130L438 131L442 134M442 134L443 140L442 145M442 145L440 148M440 148L436 151L431 153L425 154L421 157M418 155L421 157M399 129L405 126L411 126L417 123M396 151L401 152L407 154L413 153L418 155M393 95L399 94L405 95L411 95M420 102L421 107L419 112L419 117L418 122M451 125L448 131L442 134M465 156L461 153L456 152L451 151L448 146L442 145M445 180L443 175L442 169L441 164L440 159L441 153L440 148M421 171L421 164L421 157M359 -3L354 -1L348 1M348 1L346 -4L344 -9L345 -15L341 -20L340 -26M347 3L348 1M373 30L370 26L365 24M373 30L379 29L383 25L388 24M365 24L368 19L367 13L371 9L372 4M388 24L389 22M389 22L388 16L386 10L383 4M372 4L378 4L383 4M368 48L363 51M368 48L371 42L370 36L373 30M343 23L349 23L354 23L360 23L365 24M359 -3L366 -0L372 4M391 -7L386 -2L383 4M418 15L412 17L406 17L401 19L395 20L389 22M416 42L419 49L424 53M416 42L410 43L403 45L397 46M424 53L422 60L417 65L416 71M416 71L410 70L404 68L398 66L393 63M397 46L391 55M391 55L393 63M422 26L420 31L417 36L416 42M435 55L430 54L424 53M388 24L390 30L391 36L394 41L397 46M416 73L416 71M384 78L387 73L390 68L393 63M368 48L374 51L380 51L386 52L391 55M718 301L725 301L733 300M718 301L716 307L717 313L714 318L714 324M735 302L733 300M735 302L734 308L738 313L737 319M733 324L737 319M733 324L727 326L720 324L714 324M714 324L714 324M719 278L720 278M717 300L718 301M735 285L735 290L732 295L733 300M700 325L707 326L714 324M760 299L759 294L760 289L758 284M760 299L755 299L750 302L745 299L740 303L735 302M758 319L753 321L748 319L742 321L737 319M758 319L757 325L756 331L753 336L753 342M738 340L736 335L736 329L733 324M720 348L720 342L717 336L715 330L714 324M649 219L650 221M650 221L655 222L660 224L665 226L670 229L675 230M682 206L682 211L682 217L682 222M675 230L679 226L682 222M708 219L706 224M682 222L687 224L694 222L700 223L706 224M715 237L710 236L706 232M706 232L706 224M627 258L629 252M627 258L633 259L638 261L643 265L648 267M629 252L635 251L640 249L646 248L651 245M648 267L653 265L657 260M657 260L656 255L654 251L652 246M652 246L651 245M624 231L627 236L627 241L629 246L629 252M609 255L607 250L604 245M609 255L615 256L620 260M625 259L627 258M645 284L646 278L646 273L648 267M650 221L650 227L651 233L652 239L651 245M673 280L674 275L674 270L672 265M672 265L667 263L662 263L657 260M555 172L555 166L557 160L557 154L556 148M555 172L552 174M552 174L547 174L542 177L537 175M539 148L544 149L550 148L556 148M539 148L538 154L534 158L533 163L531 169L531 174M531 174L537 175M558 145L556 148M575 176L570 176L565 174L560 174L555 172M555 201L554 196L555 190L553 185L552 180L552 174M539 204L539 198L540 193L538 187L539 181L537 175M533 145L539 148M523 175L531 174M777 335L783 331L788 326M777 335L774 329L768 327L765 322L761 317M788 326L786 321L784 316L782 310L778 306M761 317L764 312L766 307M766 307L771 306L776 305M776 305L778 306M774 346L776 340L777 335M804 328L799 327L793 326L788 326M758 319L761 317M796 301L790 301L785 306L778 306M760 299L766 307M780 286L779 291L777 295L779 301L776 305M583 253L586 258L591 261L593 267M583 253L577 255L570 257L564 261M564 261L567 266L569 271L571 277L572 282M593 267L594 277M594 277L589 278L585 281L580 284M572 282L580 284M609 255L604 259L599 263L593 267M585 247L583 253M563 260L564 261M565 289L572 282M605 282L600 279L594 277M587 302L586 295L583 289L580 284M756 453L757 458L761 463L763 468L766 473M756 453L761 447M761 447L766 449L771 450L775 453L780 454M780 454L780 460L778 467L777 473M777 473L769 475M766 473L769 475M738 458L744 457L750 456L756 453M741 476L747 474L753 474L759 474L766 473M761 440L761 447M785 451L780 454M743 491L748 493L754 492L759 494M755 520L759 518M759 494L758 500L759 506L759 512L759 518M769 475L766 480L766 487L762 492M759 494L762 492M786 518L781 512M759 518L764 516L769 514L775 512L781 512M783 477L782 483L780 489L779 495L777 501M783 477L789 477L794 480L799 479M803 488L798 492L794 496L789 498L784 502L780 506M803 488L802 482M780 506L777 501M802 482L799 479M777 473L783 477M762 492L768 494L772 500L777 501M799 453L798 458L800 463L801 469L798 474L799 479M811 501L809 496L804 493L803 488M781 512L780 506M818 474L813 476L807 478L802 482M603 479L607 473L610 466M625 493L627 486L627 479M627 479L623 475L618 473L615 469L610 466M603 435L603 440L607 445L607 451L609 456M635 435L632 441L630 447L628 453M628 453L622 454L616 456L609 456M587 461L592 459L598 459L603 456L609 457M610 466L609 457M609 457L609 456M677 240L677 246L678 252L680 257M677 240L678 238M678 238L683 237L688 238L693 237L698 235L704 236M680 257L686 258L692 259L698 259M704 236L703 241L703 247L701 253L700 258M698 259L700 258M672 265L677 262L680 257M652 246L657 245L662 245L667 242L672 240L677 240M675 230L678 238M706 232L704 236M702 279L700 274L701 269L698 264L698 259M720 258L715 259L710 257L705 259L700 258M629 454L630 460L634 466L634 472M629 454L636 454L642 457L648 457M634 472L640 474L645 473L651 474M648 457L649 463L652 468L651 474M627 479L630 475L634 472M628 453L629 454M654 448L652 453L648 457M654 475L651 474" fill="none" stroke="#606161" stroke-width="1" shape-rendering="crispEdges"/>
<path d="M6.0 705.7 6.0 705.7 9.7 703.8 11.6 703.0 14.3 702.0 16.4 700.3 18.9 698.3 21.9 697.7 24.5 698.3 26.0 699.7 29.1 700.1 30.0 702.9 27.8 703.9 26.3 705.7 28.1 708.5 31.7 708.9 33.7 709.4 36.6 708.7 38.8 707.6 41.1 707.5 43.6 706.7 45.7 704.8 47.5 706.6 45.7 710.3 46.0 713.0 46.2 714.9 50.3 715.8 51.0 718.4 51.2 722.3 53.0 724.3 54.0 726.0 56.4 724.4 59.5 724.1 62.5 725.3 64.8 727.2 66.9 727.8 70.6 726.9 71.8 729.8 72.4 731.5 74.6 734.3 77.0 736.1 78.9 739.8 81.7 742.6 85.4 743.5 86.3 740.7 88.5 741.9 90.9 741.7 93.3 742.5 94.6 744.4 96.4 742.6 97.4 744.3 100.2 746.8 101.0 749.1 102.6 750.6 103.8 752.7 106.6 753.7 108.9 752.6 111.2 751.8 112.8 750.6 114.9 749.1 115.9 752.0 116.7 753.7 119.5 752.7 120.4 750.9 121.3 748.6 121.3 745.4 123.9 743.9 125.9 743.5 127.8 740.7 131.1 741.9 133.3 741.7 135.2 745.4 138.6 745.9 140.7 746.3 142.9 747.1 144.9 748.9 146.2 750.0 148.1 753.7 150.5 752.5 153.6 752.7 156.4 753.7 157.5 756.7 156.9 758.7 158.1 760.5 158.5 757.0 159.1 754.6 161.8 753.1 164.8 754.6 166.5 754.0 169.4 751.9 170.8 751.6 173.0 749.4 175.1 748.3 176.8 747.1 180.3 747.1 182.7 745.6 185.2 746.9 187.4 746.0 190.2 747.1 192.9 747.1 194.7 748.5 197.7 749.3 199.8 750.6 201.0 753.4 203.7 754.6 205.2 757.1 207.4 758.3 209.1 760.7 209.6 763.5 211.9 763.9 214.5 764.3 216.7 764.6 219.6 764.8 221.1 765.4 223.2 765.1 226.6 765.7 228.3 765.2 230.4 766.4 232.1 766.8 235.4 766.2 237.7 767.1 240.1 767.3 242.1 767.8 242.1 765.7 240.8 762.2 241.5 761.1 240.9 758.0 238.4 755.5 235.6 754.4 233.6 753.3 231.0 752.5 229.2 750.6 227.6 749.4 226.1 747.6 223.4 746.1 221.6 744.3 218.7 743.7 217.0 742.8 214.8 740.8 213.7 739.6 211.4 738.8 208.4 738.0 206.7 736.9 203.7 736.7 201.5 736.3 199.1 733.3 200.8 730.8 201.5 728.4 203.9 725.5 205.2 723.5 207.0 722.1 209.9 720.1 211.4 718.6 212.2 715.6 213.8 713.7 216.3 712.4 219.2 712.5 221.2 711.2 222.0 708.4 224.1 706.5 224.9 703.8 225.8 701.1 225.2 698.6 226.1 696.4 227.0 693.6 226.7 691.4 227.4 689.1 227.4 686.5 228.4 683.6 227.2 682.3 228.1 679.2 228.3 676.9 227.4 673.1 224.2 673.1 221.2 671.8 219.4 672.6 216.6 674.8 213.8 675.5 211.6 676.0 208.6 676.1 206.4 676.8 204.5 675.5 204.4 671.8 205.2 669.4 206.6 667.2 208.1 665.0 209.5 664.1 210.1 662.0 212.0 660.5 213.2 658.0 213.8 655.8 212.6 652.1 216.3 650.9 217.4 652.5 220.0 653.4 223.7 654.6 225.6 653.4 228.8 652.8 230.9 652.5 233.5 650.9 236.1 649.4 238.1 649.0 240.9 647.2 243.3 647.2 245.6 646.0 248.3 646.0 250.8 646.9 252.7 647.3 255.6 647.2 258.7 649.5 260.6 650.9 263.5 650.8 265.7 652.6 268.0 652.6 270.4 653.3 274.1 654.6 276.2 654.2 278.9 653.7 281.5 653.4 284.4 651.0 286.4 650.2 290.1 649.2 291.9 649.2 294.5 649.7 297.5 650.9 300.7 652.7 302.4 653.4 303.6 652.1 306.1 650.9 305.1 653.3 305.6 650.1 306.6 647.3 306.6 645.1 307.2 642.2 307.3 639.9 307.3 636.6 308.1 633.9 306.6 630.2 309.1 627.9 311.1 624.2 313.3 622.2 316.3 624.2 320.0 625.7 319.9 628.4 320.8 630.9 321.0 633.7 320.5 636.9 319.6 639.0 320.0 642.1 322.3 645.9 324.3 646.8 326.8 647.3 327.5 651.1 330.5 654.1 332.4 655.8 333.5 657.8 334.5 660.0 337.1 661.0 338.7 661.5 340.9 660.6 343.2 660.0 343.6 658.1 343.9 655.6 344.7 652.6 346.9 654.8 349.2 653.3 351.4 651.1 353.7 652.6 355.9 649.6 358.1 646.6 359.6 643.6 362.6 642.9 363.4 645.9 360.4 648.8 358.1 652.6 356.6 654.8 358.8 655.1 361.1 654.8 364.1 653.3 367.1 652.6 369.3 650.3 372.0 649.5 374.6 648.1 376.8 645.1 376.5 642.4 377.6 639.9 376.6 637.5 375.8 633.9 376.8 631.7 379.8 634.6 381.3 637.6 382.7 639.7 382.8 642.1 385.0 639.9 386.4 638.1 386.5 635.4 388.0 632.4 390.3 632.4 389.5 634.6 389.5 636.9 388.8 639.1 390.1 641.1 392.5 642.1 395.0 643.4 397.0 643.6 394.0 645.9 391.4 647.2 388.0 648.1 386.1 649.3 383.5 650.3 385.6 650.2 388.0 649.2 391.8 648.8 394.0 649.1 396.0 648.1 399.8 647.8 401.1 648.3 404.4 647.3 406.4 647.6 409.7 647.4 411.9 646.6 415.1 646.5 417.3 645.4 419.4 645.9 417.9 643.6 420.1 641.4 422.4 643.6 425.0 642.9 426.9 642.1 428.4 639.1 430.6 638.4 432.1 641.4 435.8 642.1 438.2 640.8 440.0 640.6 440.5 638.4 438.3 640.3 434.8 640.6 433.0 642.1 435.3 642.2 437.5 641.4 439.3 640.1 442.0 639.9 443.8 639.7 446.4 639.1 448.7 638.4 449.4 642.1 452.4 641.4 453.9 645.1 455.4 648.1 452.4 649.1 450.5 647.3 447.9 645.9 445.5 645.7 443.4 645.9 439.7 648.1 436.0 649.6 439.0 651.1 441.0 651.7 442.8 652.6 446.4 653.2 447.9 654.1 450.5 654.3 452.7 655.9 454.9 656.3 456.9 657.1 459.4 658.3 462.5 658.5 464.4 660.0 466.2 661.9 470.0 663.1 471.8 664.5 474.1 660.8 473.6 658.5 473.3 655.6 476.3 657.8 478.1 656.0 480.8 654.8 483.0 657.8 486.0 660.8 487.4 659.4 489.8 657.8 492.7 656.3 494.2 652.6 497.2 651.8 499.5 654.1 495.7 655.6 494.2 659.3 491.2 661.5 488.3 660.8 486.0 664.5 483.8 666.8 485.3 669.8 487.2 670.1 489.8 671.2 493.0 672.7 495.7 672.7 497.7 674.5 500.2 675.7 501.7 678.7 503.8 678.9 506.2 678.0 508.4 679.5 506.2 681.7 504.1 681.0 501.7 681.0 498.7 683.2 500.5 684.7 503.2 687.7 505.4 689.0 507.7 690.7 509.1 692.0 511.4 693.7 512.3 696.3 513.7 698.1 513.9 701.9 515.2 704.1 514.7 706.9 514.4 709.3 511.4 712.3 514.0 712.6 516.6 711.9 520.1 711.2 522.6 710.4 525.6 710.4 528.6 709.8 532.1 708.7 534.6 707.8 537.2 707.8 539.1 706.4 542.0 704.1 544.3 701.4 548.0 700.1 549.5 701.1 546.8 703.4 545.8 706.4 548.0 708.6 550.2 707.3 552.5 706.8 554.3 705.8 557.0 704.1 559.5 703.5 561.5 701.4 564.5 700.0 566.0 699.1 568.9 698.4 570.7 697.1 573.4 695.2 576.2 693.9 577.9 691.4 579.4 689.9 582.0 691.2 585.4 691.4 586.9 689.2 583.9 686.2 580.9 684.7 583.9 681.7 586.9 678.7 589.8 675.7 590.0 675.7 593.0 674.9 596.7 673.4 599.0 676.4 600.9 675.6 603.4 674.9 606.8 673.9 609.4 674.2 613.2 674.2 614.6 677.9 616.7 679.9 619.9 680.9 621.8 682.2 624.4 683.9 628.1 684.6 630.3 687.6 632.7 689.0 634.8 689.9 635.9 691.1 638.6 692.9 639.6 695.1 640.8 697.3 643.0 701.1 645.3 704.8 646.3 706.8 648.3 708.6 651.2 711.5 654.2 712.1 655.7 713.0 657.2 716.8 656.9 718.4 656.5 721.2 656.5 723.7 657.2 725.7 660.2 728.7 663.2 731.7 664.9 733.4 667.7 733.9 669.8 735.2 670.7 737.7 672.9 741.4 675.1 743.1 675.9 745.2 678.2 747.0 679.6 748.1 680.4 750.6 681.9 752.6 681.7 755.3 681.1 757.1 679.6 760.8 683.4 763.1 684.1 761.2 685.6 758.6 688.6 756.4 692.3 757.0 694.6 757.1 697.6 756.9 700.5 757.8 700.9 759.9 701.3 762.3 703.5 766.1 704.6 768.6 705.0 770.5 706.2 772.3 707.3 775.0 708.6 777.7 709.5 780.0 711.0 781.6 713.5 782.2 714.3 785.8 712.3 785.9 709.8 787.1 708.6 790.8 706.1 793.2 706.0 806.0 6.0 806.0Z" fill="#004464" stroke="#000" stroke-width="1"/>
<path d="M176.8 683.6 178.3 680.6 182.7 679.9 186.5 680.6 188.7 678.4 191.0 675.4 193.9 671.7 196.2 668.7 200.7 667.2 205.2 667.9 208.1 670.2 209.6 672.4 205.9 674.6 203.7 677.6 200.7 679.9 198.4 682.9 197.7 687.3 196.9 691.8 194.7 694.1 190.2 694.8 186.5 693.3 185.7 689.6 182.7 688.1 179.0 687.3Z" fill="#004464" stroke="#000" stroke-width="0.8"/>
<path d="M507.7 694.4 510.7 695.2 513.7 698.1 515.4 704.1 514.9 709.3 512.2 711.6 509.9 708.6 508.4 704.1 506.9 699.6Z" fill="#004464" stroke="#000" stroke-width="0.8"/>
<path d="M806.0 583.0 802.0 586.0 803.0 596.0 801.5 606.0 802.5 616.0 801.5 626.0 802.5 636.0 803.0 644.0 806.0 648.0Z" fill="#004464" stroke="#000" stroke-width="0.8"/>
<path d="M806.0 562.0 803.4 562.9 800.5 563.7 797.6 562.2M803.4 562.9 803.2 566.0M797.6 562.2 798.2 565.0M806.0 567.5 804.1 567.6 801.8 566.0 799.9 565.3M804.1 567.6 805.8 569.5M799.9 565.3 798.6 567.4M806.0 573.0 804.3 571.4 801.5 570.5 799.7 572.0M804.3 571.4 805.8 569.9M799.7 572.0 801.5 572.3M806.0 580.7 803.1 581.3 800.1 582.6 798.2 582.1 796.4 581.0M803.1 581.3 801.3 579.9M798.2 582.1 798.6 578.7M806.0 588.4 804.0 589.5 801.8 588.9 799.6 589.5 798.0 591.0 796.5 591.8 793.7 590.3M804.0 589.5 805.2 588.5M799.6 589.5 799.9 586.1M796.5 591.8 794.7 589.6M806.0 597.3 803.4 598.6 800.5 598.1 798.4 598.2 795.8 597.0M803.4 598.6 804.4 600.7M798.4 598.2 799.9 595.0M806.0 606.0 804.0 606.4 801.1 605.9 798.2 606.0M804.0 606.4 803.2 605.1M798.2 606.0 796.9 603.1M806.0 611.6 803.0 610.5 801.4 612.1 799.1 611.8 797.3 612.1 794.5 612.0 792.4 610.5M803.0 610.5 804.7 607.3M799.1 611.8 799.1 614.2M794.5 612.0 793.1 613.6M806.0 620.4 803.3 619.2 801.2 618.0 798.4 617.4 796.2 619.0 793.4 620.5 791.3 620.5M803.3 619.2 804.2 619.0M798.4 617.4 797.6 616.7M793.4 620.5 792.0 619.7M806.0 629.4 803.6 629.4 801.6 628.1 799.6 629.0 796.8 628.5 794.2 629.4 791.6 629.9 789.0 629.5M803.6 629.4 804.4 627.8M799.6 629.0 799.6 630.9M794.2 629.4 794.9 628.0M789.0 629.5 790.8 630.5M806.0 636.7 803.7 635.9 801.2 635.8 798.4 636.3M803.7 635.9 804.9 634.8M798.4 636.3 799.0 637.9M806.0 645.0 803.2 646.2 800.7 647.7 797.8 647.8 795.5 646.7M803.2 646.2 804.6 649.3M797.8 647.8 797.7 649.1M806.0 652.9 804.2 653.8 801.9 654.3 799.7 654.7 797.1 655.2M804.2 653.8 805.1 650.5M799.7 654.7 798.4 654.3" fill="none" stroke="#000" stroke-width="2.3" stroke-linecap="round" stroke-linejoin="round"/>
<path d="M806.0 562.0 803.4 562.9M806.0 567.5 804.1 567.6M806.0 573.0 804.3 571.4M806.0 580.7 803.1 581.3 800.1 582.6M806.0 588.4 804.0 589.5 801.8 588.9 799.6 589.5M806.0 597.3 803.4 598.6 800.5 598.1M806.0 606.0 804.0 606.4M806.0 611.6 803.0 610.5 801.4 612.1 799.1 611.8M806.0 620.4 803.3 619.2 801.2 618.0 798.4 617.4M806.0 629.4 803.6 629.4 801.6 628.1 799.6 629.0M806.0 636.7 803.7 635.9M806.0 645.0 803.2 646.2 800.7 647.7M806.0 652.9 804.2 653.8 801.9 654.3" fill="none" stroke="#004464" stroke-width="1" stroke-linecap="round"/>
<path d="M800.0 641.0 798.1 640.6 795.9 642.3 795.3 642.3 791.3 642.7 790.9 644.8 790.4 647.0 788.0 648.7 787.8 651.3 787.0 653.0 786.0 654.7 785.9 657.4 785.3 658.9 782.8 661.1 782.4 662.3 783.5 665.6 784.4 666.9 783.1 668.5 782.0 671.8 782.0 673.2 784.4 674.9 786.3 677.0 786.9 678.5 787.4 681.3 788.0 683.0 789.5 685.0 790.1 686.7 789.8 689.4 790.2 690.8 792.1 692.8 790.7 695.7 791.3 696.6 793.7 698.9 790.9 701.5 790.1 702.1 790.8 705.8 790.3 706.8 787.9 709.2 787.5 710.6 787.3 713.0 787.0 715.2 786.3 716.9 785.7 719.1 784.8 721.1 784.8 722.6 785.1 725.3 786.7 727.0 785.7 728.7 785.2 731.3 786.0 733.0 786.0 733.0" fill="none" stroke="#000" stroke-width="2.6" stroke-linejoin="round"/>
<path d="M800.0 641.0 798.1 640.6 795.9 642.3 795.3 642.3 791.3 642.7 790.9 644.8 790.4 647.0 788.0 648.7 787.8 651.3 787.0 653.0 786.0 654.7 785.9 657.4 785.3 658.9 782.8 661.1 782.4 662.3 783.5 665.6 784.4 666.9 783.1 668.5 782.0 671.8 782.0 673.2 784.4 674.9 786.3 677.0 786.9 678.5 787.4 681.3 788.0 683.0 789.5 685.0 790.1 686.7 789.8 689.4 790.2 690.8 792.1 692.8 790.7 695.7 791.3 696.6 793.7 698.9 790.9 701.5 790.1 702.1 790.8 705.8 790.3 706.8 787.9 709.2 787.5 710.6 787.3 713.0 787.0 715.2 786.3 716.9 785.7 719.1 784.8 721.1 784.8 722.6 785.1 725.3 786.7 727.0 785.7 728.7 785.2 731.3 786.0 733.0 786.0 733.0" fill="none" stroke="#004464" stroke-width="1.2" stroke-linejoin="round"/>
<path d="M525.6 711.3 529.3 714.6 533.1 719.1 534.6 716.8 531.6 713.1 528.6 710.4Z" fill="#5d4f4b" stroke="#000" stroke-width="0.8"/>
<path d="M15.2 721.4 20.8 718.6 26.3 717.7 31.8 719.5 39.2 721.4 36.4 725.1 35.5 729.7 30.0 729.7 24.5 726.9 18.9 724.1Z" fill="#5d4f4b" stroke="#000" stroke-width="0.8"/>
<path d="M65.1 743.5 69.7 741.7 73.4 738.9 76.1 740.7 75.2 745.4 78.9 747.2 77.0 750.9 72.4 750.0 68.7 747.2Z" fill="#5d4f4b" stroke="#000" stroke-width="0.8"/>
<path d="M224.7 682.5 223.5 677.8 228.5 678.3 229.5 680.4 227.9 682.8ZM190.9 725.5 188.9 724.9 190.3 723.5 191.7 723.4 192.2 724.4 192.9 726.2ZM211.4 703.3 206.2 701.9 210.7 699.1 212.5 698.7 213.2 700.2 213.6 702.3ZM199.0 713.4 198.1 711.3 196.8 710.2 198.3 709.4 199.8 707.4 200.7 709.5 200.8 710.6 200.9 712.8ZM207.3 682.0 209.0 683.0 207.6 685.0 205.5 683.7 205.0 682.5 206.1 680.5ZM186.8 729.2 183.9 727.2 187.4 725.5 189.0 727.3 189.2 729.5ZM206.5 704.8 205.5 704.7 204.7 703.2 205.9 700.4 208.0 702.5 210.5 703.5 207.8 704.8ZM203.3 707.3 206.0 705.8 208.0 707.0 209.0 708.9 207.4 710.5 205.5 710.9 203.2 710.1ZM196.0 712.2 192.7 710.6 193.4 706.8 196.7 708.8 196.8 709.9ZM203.2 712.9 203.1 714.6 201.4 713.7 201.9 712.5 202.2 710.7 203.8 712.0ZM213.5 671.5 217.3 668.5 220.2 670.1 223.2 671.0 220.6 673.1 221.3 676.7 218.3 675.7 214.9 674.2ZM206.7 723.2 207.2 725.7 204.0 726.4 200.5 726.9 201.3 724.2 200.8 721.5 204.1 722.9ZM184.8 728.4 183.2 726.4 186.0 725.0 189.8 725.1 187.8 728.0 186.8 730.2ZM208.2 705.5 206.1 704.6 206.1 702.5 207.8 702.5 210.2 703.7ZM193.0 715.9 191.2 719.5 187.8 718.1 187.4 715.8 190.0 713.8ZM225.7 696.3 224.2 699.1 221.8 696.9 220.9 694.8 222.5 693.5 226.5 693.0ZM185.8 723.1 188.8 721.9 190.2 721.9 191.2 723.3 190.2 724.3 188.9 723.8ZM204.0 720.2 204.6 720.4 206.9 720.7 206.8 722.7 204.2 721.8 202.4 722.2 201.4 720.2ZM214.4 693.0 215.2 690.5 214.4 688.4 216.5 688.4 219.4 687.7 218.3 690.2 218.2 691.4 217.0 693.0ZM189.2 723.1 186.6 719.1 188.1 715.4 191.3 717.2 195.0 720.2ZM209.0 688.4 211.4 691.2 212.7 692.6 213.6 694.7 211.5 695.5 208.8 695.1 204.9 694.0 207.7 690.9ZM211.1 679.8 213.8 680.5 215.3 682.2 212.7 684.4 211.1 682.1ZM205.7 685.2 206.3 682.9 208.5 684.5 208.9 686.0 206.9 687.6ZM205.8 716.8 209.0 716.4 208.5 719.0 206.6 720.6 204.0 719.7 202.8 717.2ZM200.5 716.8 201.7 717.7 201.7 719.6 200.0 719.3 197.7 719.4 198.8 717.7ZM202.7 721.2 203.5 723.9 202.8 727.1 199.5 727.5 196.4 723.9 198.3 720.3ZM205.3 678.2 203.7 679.9 203.3 677.8 202.5 676.4 203.9 676.1 204.9 677.1ZM207.1 671.5 209.5 673.0 208.8 676.1 205.4 674.8 205.4 672.9ZM218.1 682.9 217.1 682.2 217.1 681.3 218.2 680.5 218.9 681.9ZM225.9 693.5 228.5 693.8 231.1 695.7 229.1 697.9 226.7 698.6 226.0 697.0 224.0 695.4ZM199.8 719.7 200.2 717.7 200.9 717.2 202.1 717.2 204.2 717.2 202.5 718.7 203.1 721.1 201.3 719.5ZM231.5 677.4 229.7 682.7 223.2 681.4 223.9 678.5 225.7 675.1ZM208.4 693.8 206.5 693.1 207.1 691.5 208.1 691.1 209.4 690.8 210.4 691.6 210.0 693.2ZM215.4 675.0 215.9 677.4 214.1 679.1 210.3 680.6 209.9 676.5 211.7 673.2ZM204.6 703.4 207.9 704.1 211.2 707.4 208.2 710.9 204.4 708.9 203.2 706.7ZM199.6 697.2 198.5 692.8 204.0 691.0 205.0 695.6 203.3 699.4ZM206.2 722.6 203.3 726.0 201.8 727.7 200.4 725.3 199.1 723.6 201.9 723.6ZM200.1 705.6 197.4 709.0 194.3 707.0 189.8 705.8 194.3 704.1 196.8 703.1ZM205.1 702.8 201.5 703.6 202.8 700.8 204.8 700.0 208.6 699.6 207.4 703.1ZM219.9 699.0 217.0 700.6 214.5 702.8 213.8 699.5 212.0 698.6 212.7 695.9 215.0 694.9 215.8 697.5ZM200.0 702.6 199.4 705.4 199.9 709.2 195.9 706.3 191.8 705.8 195.5 703.5 196.8 701.1ZM191.4 719.9 189.5 720.4 188.4 721.4 185.5 721.9 186.5 718.9 188.1 717.5 189.8 716.1 191.4 718.0ZM218.4 693.0 219.0 691.9 219.1 689.9 221.1 690.0 221.0 691.9 222.3 693.6 219.8 692.7ZM207.6 700.1 207.2 697.0 208.3 693.7 212.8 694.7 214.5 696.7 213.3 699.2 211.2 701.6ZM223.7 675.2 223.6 673.8 225.1 673.1 227.4 673.6 226.9 676.5ZM198.4 703.1 200.1 702.5 201.4 704.2 199.2 704.6 197.1 704.9ZM202.3 707.1 202.4 704.0 205.8 704.5 206.8 705.3 208.4 708.2 205.5 707.8ZM182.8 731.2 180.1 729.4 182.9 728.0 185.1 727.6 184.8 730.1 186.6 731.3 185.4 733.2 182.7 734.3ZM219.2 688.3 223.3 686.0 221.0 690.1 219.8 690.8 215.4 690.3ZM189.0 733.7 188.6 736.5 189.3 740.3 186.5 737.5 181.8 735.5 186.1 733.9ZM214.4 686.2 212.2 684.2 214.8 682.0 217.3 680.8 217.9 683.7 217.8 686.4ZM220.2 695.2 218.4 695.3 216.0 694.8 218.3 693.1 219.1 692.9 222.6 691.8 221.3 694.2ZM202.4 697.1 201.1 696.6 199.9 694.2 202.1 693.8 203.8 693.7 204.0 695.6 203.6 696.6ZM207.4 677.5 206.2 677.5 204.1 676.1 207.1 675.9 208.3 674.1 209.7 675.7 210.6 677.4 208.8 678.2ZM217.8 704.9 218.0 701.8 220.4 700.8 221.7 703.6 222.8 704.7 221.9 705.9 220.6 706.5 219.8 705.8ZM203.3 721.9 205.0 722.7 204.4 724.7 202.1 724.3 200.9 722.4ZM204.5 704.5 200.5 701.4 204.5 698.2 208.1 697.0 212.5 699.8 208.0 702.6ZM206.3 717.0 205.3 715.5 206.8 714.9 208.2 713.6 209.7 714.6 212.0 716.4 208.6 717.1 206.8 719.4ZM211.3 685.5 212.6 681.9 209.9 679.6 212.0 676.7 217.1 677.5 217.4 680.8 215.3 682.1 214.4 683.0ZM224.8 684.2 225.2 682.0 227.9 682.6 227.0 684.7 227.1 686.2 226.1 687.8 224.4 686.8 223.9 685.0ZM211.7 709.6 210.8 710.6 209.6 710.2 208.3 709.0 209.3 707.6 210.2 706.9 211.1 708.0 211.4 708.6ZM223.4 677.0 223.6 678.8 222.8 679.7 221.7 681.3 220.9 679.9 220.2 678.6 219.9 675.7ZM212.4 690.3 211.9 687.4 214.2 686.0 217.6 685.5 217.0 688.4 215.8 690.4ZM212.3 711.5 208.9 713.5 207.0 715.7 203.1 713.6 206.7 711.1 208.5 709.4ZM159.8 751.2 162.8 749.0 165.5 751.3 167.2 754.1 163.8 756.8 160.9 754.0ZM196.1 750.9 197.9 752.1 197.2 753.8 195.6 757.2 193.2 754.1 193.0 751.1ZM149.8 758.0 150.3 756.4 151.4 755.1 152.8 756.1 153.9 758.3 151.6 758.1ZM171.4 722.7 169.9 721.4 170.0 719.6 171.5 719.8 173.7 719.8 173.6 721.8ZM187.3 726.1 185.1 726.3 185.6 724.7 187.2 724.6 188.1 723.2 189.9 724.2 190.2 726.1 188.7 728.0ZM178.9 751.3 179.8 753.0 180.8 754.5 178.9 755.2 177.2 755.4 177.8 753.7 178.0 752.9ZM179.6 726.7 176.7 724.8 174.7 725.4 174.0 723.5 176.0 723.1 177.1 722.5 178.4 723.0 178.6 724.1ZM173.4 719.7 171.6 722.2 171.9 725.3 169.3 723.5 162.7 723.4 167.8 720.3 169.4 717.2ZM162.8 728.1 165.3 728.7 163.4 730.1 159.5 731.4 159.6 727.6ZM153.1 745.4 151.6 745.9 150.6 744.2 150.5 742.2 153.1 742.4 155.2 742.8 154.2 744.8ZM141.3 741.4 139.3 743.0 137.2 742.7 137.1 740.7 136.9 738.9 137.9 737.3 140.2 738.6 141.0 739.7ZM207.5 753.4 208.0 756.3 209.1 759.2 205.5 759.7 203.2 757.0 204.3 754.7ZM135.9 756.8 131.3 756.4 130.0 752.2 132.8 751.0 134.9 750.3 138.9 752.8ZM172.4 740.5 175.6 738.9 176.8 741.9 175.8 745.5 171.9 744.6 172.0 742.1ZM163.9 721.5 161.3 720.6 161.4 718.4 163.4 717.6 164.6 718.5 168.4 719.1 166.3 721.8ZM123.0 751.2 123.8 750.6 124.7 751.2 126.0 752.0 124.5 752.8 123.9 754.1 123.0 753.2 122.8 752.2ZM187.0 732.0 186.8 730.3 188.1 730.2 189.8 730.6 191.9 732.7 189.4 734.6 187.5 734.4 184.8 733.8ZM152.2 751.0 150.8 750.7 148.7 750.5 146.5 748.3 149.9 747.2 152.1 747.8 153.7 749.2ZM163.9 752.7 164.2 750.3 165.4 748.6 168.0 749.5 168.8 751.3 169.3 754.2 165.9 755.5ZM201.4 755.7 201.1 753.4 203.5 753.5 205.0 755.8 202.5 756.5ZM141.4 744.1 144.0 743.3 146.2 746.4 145.5 749.6 140.7 750.2 138.7 747.4 140.1 745.1ZM221.0 754.2 224.1 749.9 227.5 753.3 229.9 755.4 227.9 759.6 224.8 756.1ZM191.2 731.8 193.3 731.1 196.1 731.5 195.5 733.7 193.3 733.8 190.8 734.2ZM110.2 748.6 112.0 750.7 113.9 750.6 112.9 752.4 112.1 752.6 110.6 753.8 110.5 752.2 109.8 751.2ZM135.2 742.4 139.2 738.7 142.2 739.1 143.3 742.2 141.0 743.5ZM167.2 722.2 165.1 720.5 167.1 719.6 168.1 719.7 169.0 721.1ZM120.6 745.2 121.7 743.3 123.7 742.6 124.4 744.6 123.4 745.6 122.1 747.3ZM152.3 749.4 151.6 750.3 150.5 751.7 150.4 749.8 148.9 747.5 151.8 747.7ZM189.0 747.4 187.1 744.0 189.2 741.3 193.7 741.0 192.6 744.2 192.6 746.0ZM230.2 755.1 228.4 755.9 226.4 754.4 228.7 753.4 229.7 752.5 229.9 753.9ZM178.2 724.9 176.1 723.3 178.0 721.4 180.8 722.1 181.3 723.8 184.9 725.7 180.1 725.5 178.2 728.0ZM179.1 725.4 179.2 723.8 180.8 723.3 181.8 723.9 183.9 724.2 183.8 725.7 181.9 725.7 180.4 726.3ZM135.5 748.5 134.9 746.6 138.5 746.2 137.8 748.6 136.5 749.1ZM230.8 750.6 232.7 750.0 233.1 751.9 235.1 755.1 231.2 753.2 230.2 752.7 229.0 751.4ZM199.5 759.3 195.2 762.3 193.7 758.2 194.7 754.9 199.2 755.1ZM178.0 749.4 179.5 750.4 180.0 751.3 181.1 753.0 178.8 752.1 178.0 752.1 176.2 750.9ZM155.7 739.6 158.5 736.5 161.7 737.9 165.2 739.0 162.6 740.8 160.5 740.6ZM196.1 753.2 199.2 751.7 203.4 752.6 201.6 755.7 199.3 756.2 197.1 755.7ZM142.6 756.4 145.0 754.9 147.3 753.2 148.8 755.9 146.5 757.1 144.9 758.2ZM173.0 738.6 172.3 740.8 171.7 741.6 170.7 741.8 168.9 740.8 170.6 739.9ZM166.2 724.3 171.1 725.4 171.1 729.9 166.5 728.4 164.7 727.0ZM166.0 735.0 167.1 735.0 167.8 735.5 168.1 736.4 167.8 737.9 166.3 737.7 165.6 736.6ZM136.4 743.3 135.9 741.4 138.2 740.7 139.8 739.9 140.1 741.7 139.5 742.4 138.9 742.5ZM216.6 752.9 219.2 752.0 220.1 751.8 220.8 752.3 220.6 753.6 219.1 754.7ZM180.5 735.0 178.6 733.5 180.5 731.5 182.4 732.6 183.9 733.6 182.8 735.7ZM154.0 751.6 156.7 751.6 159.4 751.4 159.5 754.1 157.4 756.0 155.5 754.1ZM188.5 737.8 187.7 739.9 184.7 740.9 183.8 738.3 186.0 737.2ZM127.4 747.9 128.4 747.1 129.5 747.1 130.9 748.2 130.1 750.0 127.2 749.9ZM134.3 740.6 137.2 742.7 135.2 744.8 133.9 745.3 132.8 745.8 132.0 745.1 129.1 743.0 130.3 740.1ZM149.2 744.8 150.7 747.4 153.1 750.7 147.9 750.8 147.6 747.6ZM202.7 747.2 203.3 744.2 206.7 745.6 210.2 746.7 207.0 748.6 204.8 749.1ZM220.3 757.9 218.9 754.0 222.7 753.8 227.6 755.1 223.6 757.3ZM143.5 744.7 142.2 747.3 141.3 748.3 138.0 749.7 138.4 746.2 139.5 742.9ZM169.9 742.4 168.3 744.7 168.6 746.3 166.7 746.1 163.7 745.9 165.2 743.5 166.5 741.5ZM167.9 749.4 167.5 750.7 165.1 751.5 165.4 749.2 167.0 747.6ZM157.2 728.8 158.3 731.6 155.7 732.4 152.4 731.7 153.5 728.4ZM120.6 750.2 121.4 748.7 123.1 749.0 123.9 750.0 124.6 751.6 123.0 752.4 122.1 751.2ZM163.5 756.4 163.3 755.2 164.2 754.3 165.7 754.6 166.5 755.6 166.9 757.0 165.5 758.7 163.5 758.2ZM125.5 744.4 128.1 745.7 127.0 748.1 125.9 751.2 124.4 748.6 122.6 746.3ZM163.3 715.5 166.9 717.4 164.9 720.5 162.5 720.3 159.3 719.7 161.8 718.0ZM200.4 742.8 199.0 746.1 197.3 742.9 197.0 741.6 195.5 738.8 198.6 737.3 200.0 739.7 203.3 741.3ZM180.3 743.6 180.0 746.1 177.8 748.3 173.4 747.2 174.4 744.0 175.8 742.3 177.9 743.0ZM202.6 739.9 205.4 738.9 208.3 740.4 206.8 743.4 201.2 744.3ZM154.5 751.0 157.4 752.1 156.4 755.3 153.6 753.7 152.9 752.6 153.2 751.2ZM131.1 736.3 135.4 738.6 135.0 743.4 130.5 741.3 127.3 739.0ZM172.3 733.4 170.8 733.7 168.5 734.1 168.1 732.1 170.1 731.4 173.3 730.8ZM212.7 744.5 211.2 745.5 210.3 746.0 208.7 745.4 209.0 743.4 211.3 742.4ZM122.5 751.6 117.5 752.3 117.7 748.9 114.3 745.0 119.5 747.0 124.2 747.3ZM158.9 719.2 157.3 721.0 153.8 720.0 155.4 717.7 156.8 716.9 158.9 715.6 159.3 717.7ZM165.9 737.3 164.9 738.8 164.3 739.4 163.2 740.5 163.0 738.7 161.8 737.6 163.1 736.9 164.5 735.7ZM113.5 754.2 112.9 755.2 111.0 756.6 109.1 754.1 110.8 751.9 112.5 752.3 113.5 753.1ZM210.3 755.5 209.0 758.2 209.5 761.6 206.5 760.0 205.3 758.4 206.9 757.3 207.7 756.8ZM145.2 748.0 146.7 748.4 147.3 750.2 145.9 750.6 144.6 752.1 141.8 750.5 144.3 749.0ZM177.4 738.8 177.4 736.0 179.5 735.9 182.3 736.3 183.6 739.4 179.6 739.2ZM205.1 746.9 204.6 750.4 200.9 749.9 201.1 747.7 202.0 746.0ZM182.0 727.9 183.1 728.7 184.3 730.1 182.4 731.0 180.8 730.1 180.4 728.3ZM121.0 749.6 118.3 748.9 119.4 747.1 120.5 745.8 122.0 746.6 121.9 748.1ZM172.8 724.9 171.6 726.3 169.6 725.9 169.6 723.5 171.3 722.2 172.3 723.7ZM213.1 740.0 214.4 740.6 215.4 741.5 215.0 742.6 213.4 743.6 212.0 742.0ZM213.1 744.9 212.0 746.6 209.7 746.6 207.4 745.7 208.4 743.7 208.7 741.9 210.9 742.3 213.6 743.0ZM113.5 747.9 115.9 747.5 117.6 750.1 114.8 751.2 112.9 751.7 112.4 750.6 110.3 749.5 111.3 748.0ZM77.5 747.3 78.9 749.8 75.7 749.3 72.2 751.8 73.5 748.1 71.2 745.0 75.1 746.2 77.0 744.8ZM97.0 746.7 95.8 745.9 96.3 744.4 99.3 743.7 99.7 746.6ZM87.3 751.6 86.7 752.9 85.5 752.5 83.6 752.2 84.4 750.5 85.4 749.3 86.4 750.2 88.5 750.5ZM81.2 740.4 82.4 740.8 83.1 741.9 82.9 743.3 81.7 743.2 80.3 743.8 79.7 742.5 79.2 740.5Z" fill="#5d4f4b" stroke="#000" stroke-width="0.9"/>
<path d="M220.1 707.2 219.2 707.4 218.3 708.0 215.9 707.5 217.5 706.1 218.6 705.9 219.2 705.9 220.4 706.1ZM198.4 723.8 199.9 723.6 200.7 725.2 200.2 727.2 198.1 728.1 197.3 725.7 195.4 724.9 196.7 723.4ZM217.9 676.6 215.2 677.1 213.4 675.5 215.5 673.5 214.8 670.6 216.9 672.7 218.2 672.7 218.2 674.6ZM186.3 719.3 185.9 715.7 188.7 715.2 192.3 715.6 191.0 718.8ZM199.8 700.6 200.1 698.4 203.5 699.6 203.2 702.3 200.9 703.6 197.3 702.8ZM183.7 725.0 184.9 725.5 186.0 726.1 185.7 727.4 184.3 727.5 182.9 727.2 183.0 725.9ZM210.5 669.5 212.0 672.8 209.6 676.5 207.2 673.2 206.8 671.1ZM219.4 704.1 221.0 705.9 219.7 707.8 217.0 709.0 217.0 705.7ZM194.6 720.6 194.7 719.3 195.7 716.6 199.2 717.4 202.2 720.2 198.4 722.6 196.0 721.1ZM221.5 697.9 221.6 699.0 220.6 698.6 220.1 698.0 218.7 697.1 220.3 696.5 221.4 696.1 223.9 696.6ZM196.3 713.4 197.4 715.3 199.7 717.2 196.8 717.3 195.0 717.9 194.3 716.6 192.6 714.0ZM189.2 722.3 186.9 724.4 185.5 721.6 184.3 719.9 186.9 719.4 189.9 719.8ZM206.7 706.4 204.8 705.1 202.1 703.5 204.2 700.9 207.4 701.6 206.6 704.4ZM222.8 695.9 221.4 695.5 220.9 694.6 219.5 692.5 222.1 693.2 223.2 692.4 225.9 693.0 223.2 694.7ZM198.3 709.4 200.7 713.0 196.0 712.2 194.2 710.8 195.7 708.9ZM212.8 712.0 215.4 710.7 216.0 714.2 213.6 715.1 210.4 713.7ZM202.3 701.1 200.5 701.7 198.5 700.5 199.3 698.2 201.1 698.4 202.7 698.2 202.9 699.5ZM228.1 673.5 224.5 674.3 223.0 672.1 224.8 669.6 229.9 669.9ZM218.3 689.3 218.1 686.9 220.4 687.2 221.3 689.3 219.6 690.1ZM196.5 705.1 197.3 703.2 199.1 701.7 200.5 704.0 200.1 706.6 197.1 707.8ZM206.8 691.3 207.0 692.4 208.2 695.7 205.0 696.1 204.2 693.3 203.1 691.5 204.6 689.9 206.8 688.8ZM191.4 711.7 194.4 711.5 193.8 714.3 191.2 713.8 187.8 714.2 190.6 712.2ZM187.8 730.5 186.5 732.0 185.0 731.1 183.0 730.6 181.0 728.1 184.5 726.2 186.4 727.5 187.0 729.0ZM207.6 721.2 204.6 719.2 207.3 716.4 211.5 717.2 211.0 720.9ZM211.2 714.3 210.8 715.8 210.3 716.8 208.9 716.8 207.6 716.4 208.5 715.3 209.0 713.9ZM218.3 701.3 216.3 700.9 217.1 699.3 218.3 698.6 219.9 699.4 219.6 700.5 220.3 701.6 218.8 702.1ZM223.3 691.8 224.5 690.8 226.1 690.9 226.8 692.0 227.2 693.6 226.2 694.9 224.7 694.2 223.4 693.6ZM205.6 710.6 205.5 709.7 204.9 709.0 205.4 708.5 206.3 708.2 207.3 708.7 207.7 709.8 207.0 711.4ZM224.8 678.5 222.4 677.2 223.0 675.1 225.1 675.7 226.8 675.7 226.5 677.1ZM216.9 681.6 214.3 679.2 216.8 677.5 221.6 676.8 219.4 680.4ZM211.8 708.2 211.7 709.9 210.5 711.0 209.3 711.8 207.5 711.0 206.4 709.7 206.5 707.6 209.5 708.4ZM213.3 707.3 212.0 704.6 209.0 702.3 213.2 702.0 215.6 702.3 217.8 706.1ZM208.2 711.4 209.2 713.4 206.5 713.2 205.5 712.6 205.9 711.4 206.0 710.7 207.5 710.3ZM214.5 697.3 215.5 697.1 218.8 697.9 216.4 699.3 214.7 700.4 212.8 699.4 212.3 697.6ZM200.4 714.7 198.1 713.4 194.8 713.3 195.6 709.8 198.1 709.8 200.3 707.6 203.9 710.4 205.0 713.9ZM195.5 721.8 193.2 722.5 192.6 720.7 190.6 719.5 193.1 719.1 195.5 718.2 194.2 720.2ZM189.9 735.6 186.8 733.9 189.9 732.5 191.6 730.3 192.5 732.9 193.2 734.3 192.0 736.0ZM186.7 736.2 186.7 733.7 190.3 734.0 190.8 737.2 188.5 737.9 186.1 738.7ZM204.7 710.8 205.4 708.8 206.0 707.3 207.8 707.7 209.4 708.5 208.8 709.7 207.5 711.1ZM189.3 724.3 190.5 722.2 191.3 720.9 192.8 720.3 193.7 721.7 196.1 722.7 194.1 724.5 192.1 725.5ZM215.6 704.0 215.7 705.6 216.1 706.7 216.2 708.5 214.1 707.8 213.8 706.5 212.9 705.4 214.2 705.3ZM192.4 734.3 189.2 734.6 186.5 734.5 184.8 732.7 186.4 729.6 189.7 729.7 190.7 731.5ZM202.4 695.8 203.4 698.6 203.1 699.8 201.9 700.5 198.5 700.5 198.8 697.6ZM182.2 721.1 183.3 718.9 186.0 718.6 187.0 719.3 187.5 720.7 187.7 722.9 184.8 722.5ZM187.5 730.5 189.9 728.8 190.7 727.4 193.8 726.7 194.4 729.2 195.8 732.0 191.9 732.5 189.8 732.2ZM205.8 698.9 204.6 697.2 206.5 694.6 207.5 697.5 208.3 699.1ZM209.3 690.6 209.8 692.2 208.1 693.7 206.7 691.8 207.4 689.3ZM202.6 721.0 205.2 718.6 205.8 721.5 205.1 723.0 203.6 723.0ZM223.2 677.7 222.9 676.0 224.4 675.1 225.1 676.3 225.4 677.0 224.7 678.1ZM217.8 706.5 213.6 708.8 210.7 708.5 209.0 707.1 205.7 704.1 210.5 703.3 212.9 700.7 214.7 703.9ZM195.4 735.6 194.9 733.3 194.9 731.2 198.4 730.3 198.4 733.1 198.5 735.8ZM194.4 720.1 195.7 719.3 197.9 719.2 199.1 721.1 197.0 722.1 196.1 723.4 194.1 723.0 194.0 721.6ZM212.1 691.3 210.6 694.3 206.7 693.9 207.1 690.5 209.7 689.3ZM198.8 711.4 196.4 711.6 197.4 709.8 197.3 708.1 198.9 707.6 199.2 709.3 202.9 709.9 199.4 710.6ZM221.2 680.0 218.6 678.2 221.3 676.1 223.4 674.1 225.7 675.6 226.3 678.3 223.7 679.0ZM214.9 688.8 211.3 689.9 213.5 687.3 213.6 683.6 216.1 686.0 215.8 688.1ZM210.7 676.1 207.8 675.1 210.0 672.2 212.0 673.9 214.4 676.7ZM211.5 703.0 210.5 706.6 207.6 706.5 206.9 704.7 207.0 700.6ZM199.8 712.9 199.9 710.9 202.5 711.9 204.3 713.7 202.3 715.7 200.2 713.8ZM222.5 699.7 223.1 701.3 221.2 702.1 219.0 702.5 218.7 700.4 218.9 699.1 220.5 698.5 222.3 696.9ZM135.9 752.0 135.8 754.0 133.6 754.3 132.8 753.2 133.2 751.6ZM155.7 753.3 154.6 752.2 150.9 749.7 155.8 748.5 157.6 750.7 157.6 752.8ZM189.0 737.0 190.7 737.5 189.9 739.8 188.1 739.6 187.3 739.9 186.5 738.8 183.4 736.8 187.6 737.4ZM152.2 747.9 150.6 745.3 151.9 743.0 153.6 744.0 155.6 744.6 154.6 746.8ZM119.8 757.6 116.5 754.9 120.9 754.6 122.6 755.9 122.0 757.7ZM109.5 752.6 111.2 751.0 112.4 750.9 113.7 752.3 112.0 753.8ZM166.6 721.7 165.6 721.6 165.1 720.8 164.3 717.9 167.1 719.4 168.1 720.9ZM174.1 745.1 172.5 742.6 175.2 742.4 177.1 743.3 179.1 744.8 177.3 747.9 174.5 746.3ZM235.7 751.7 239.1 754.2 237.4 756.5 235.4 758.4 232.6 756.7 233.0 755.2 232.8 754.0 233.5 751.4ZM184.2 739.8 187.2 741.2 188.3 744.1 184.8 746.6 181.2 744.9 180.4 742.4 181.1 739.3ZM184.8 746.7 186.8 746.3 189.0 746.6 189.6 748.5 188.9 750.7 187.9 752.9 182.7 752.8 183.0 749.3ZM204.2 739.8 207.5 740.6 210.1 741.4 209.6 743.5 207.0 744.7 204.1 743.6ZM177.5 731.4 176.9 728.4 176.7 727.6 176.3 724.8 178.5 726.6 180.0 727.6 180.2 729.4ZM129.3 743.3 126.7 745.7 126.8 749.0 124.4 747.6 120.8 745.7 123.8 743.8 125.8 742.1ZM119.7 749.1 123.1 749.2 124.0 752.2 122.7 756.0 119.7 756.0 117.3 755.2 116.6 752.2 117.7 749.4ZM112.0 752.5 112.0 750.5 112.3 749.5 113.8 749.5 115.6 750.4 114.7 752.2ZM216.5 745.0 216.1 744.1 214.2 743.4 216.3 743.1 216.8 742.4 218.2 742.4 218.8 743.9 218.5 745.2ZM166.2 726.2 167.5 725.3 168.3 726.7 169.3 727.7 170.1 730.3 167.0 729.2 166.7 727.7ZM139.5 754.8 137.0 755.8 135.3 753.1 135.6 751.0 137.1 749.3 138.9 751.1 139.4 751.8 143.0 753.7ZM205.9 740.9 210.1 743.9 213.9 745.3 211.2 747.8 208.3 746.8 204.1 745.6ZM154.5 733.6 155.5 729.7 159.2 729.4 161.5 732.5 160.7 734.9 156.9 736.0ZM186.2 757.3 186.0 755.8 187.6 756.3 190.3 757.3 189.3 760.4 186.2 758.5ZM190.1 736.3 191.4 739.2 188.6 741.5 185.4 739.9 184.8 737.1 187.8 736.1ZM172.0 745.0 173.4 745.5 173.6 746.7 172.1 748.3 170.0 746.3ZM198.8 746.7 200.8 744.5 203.0 743.6 203.2 745.4 203.9 746.5 202.0 748.5ZM157.1 748.4 158.8 747.5 158.4 749.6 159.2 750.7 158.7 752.1 156.9 751.6 155.7 751.2 154.2 749.1ZM168.0 740.6 167.0 739.4 168.8 739.0 171.2 740.1 169.2 742.4ZM153.9 753.4 153.6 751.8 153.6 750.8 155.0 748.2 157.2 749.5 157.2 751.8 157.8 754.3 155.1 754.4ZM176.8 736.8 173.2 736.9 176.5 735.1 176.8 733.0 180.8 732.9 178.6 735.6 179.8 738.6ZM143.1 739.1 140.4 736.7 143.8 735.0 150.0 735.0 145.2 738.7 144.5 741.3ZM142.9 754.8 145.4 754.0 144.8 756.3 144.1 757.6 142.1 756.8ZM155.3 730.9 152.2 730.8 150.7 729.4 152.0 727.0 156.8 726.8ZM164.4 730.3 162.4 732.9 160.3 731.4 159.7 729.4 161.9 728.1ZM166.8 747.5 165.2 744.1 168.8 743.7 171.2 744.1 172.3 746.6 169.9 748.1ZM201.0 754.6 202.6 757.6 201.6 760.7 198.5 759.7 196.4 758.1 197.9 755.1ZM181.6 745.3 179.8 747.4 178.3 744.9 177.6 743.0 180.1 740.7 181.9 742.7 184.7 744.0ZM111.3 748.5 112.3 747.1 114.9 746.2 115.2 748.3 114.5 750.9 112.8 749.6ZM157.1 739.5 155.0 741.0 153.0 740.4 153.5 738.2 155.9 737.0ZM161.5 749.1 160.7 751.3 158.3 749.7 156.5 747.6 159.9 746.9 161.2 747.4ZM165.7 743.6 171.1 745.6 166.0 747.7 164.1 747.6 163.8 745.8ZM184.9 749.2 186.3 751.1 187.2 753.3 184.4 755.5 183.2 752.6 182.7 750.6ZM135.4 756.5 133.2 759.5 130.5 756.5 130.8 754.0 132.4 751.7 134.9 753.4 137.4 754.4ZM137.1 752.3 135.6 750.2 136.4 748.0 139.0 746.4 139.4 749.1 141.6 750.5 140.6 752.7ZM183.9 736.5 183.0 733.1 185.7 731.5 187.8 734.0 188.5 736.6 185.8 738.3ZM192.3 739.1 193.5 739.1 194.6 741.1 192.5 740.7 190.0 740.1ZM167.0 728.5 168.1 727.3 169.3 728.0 171.1 729.7 169.7 731.7 167.7 734.5 164.6 732.3 164.6 729.4ZM121.2 753.6 120.2 756.1 119.5 757.4 117.1 758.3 114.8 755.2 117.7 752.1ZM216.9 752.7 215.5 750.2 216.6 748.4 218.6 746.4 219.5 748.9 220.5 751.6ZM212.3 741.9 215.9 743.4 214.9 746.2 212.0 745.8 209.2 744.0ZM170.1 736.8 168.2 735.6 169.8 733.5 171.8 734.2 173.2 735.3 172.4 737.3ZM215.7 746.1 215.9 743.2 219.8 743.6 223.8 744.9 221.2 747.6 219.1 747.5 217.0 748.3ZM152.1 742.2 150.8 744.4 149.2 743.1 148.3 741.3 150.4 740.9ZM202.0 740.1 199.9 742.2 197.7 740.0 197.9 737.8 199.4 737.0 201.0 733.3 203.1 736.2 204.2 738.3ZM139.0 750.9 140.2 752.6 139.5 755.2 137.6 754.9 136.4 754.0 135.5 752.4 136.9 751.6ZM178.9 734.5 181.1 735.6 181.2 737.3 179.8 738.2 177.8 739.3 175.5 737.5 177.3 735.6ZM134.7 751.0 135.9 751.5 136.5 752.9 134.8 754.3 131.7 754.4 130.6 752.3 132.1 750.6 133.8 748.3ZM149.0 736.5 150.6 735.7 151.9 737.3 151.3 739.7 149.2 740.1 146.7 739.3 148.3 737.5 148.2 736.6ZM168.6 730.6 166.6 731.9 165.9 733.0 164.6 732.3 164.1 730.4 165.4 729.9 166.5 730.1ZM142.5 734.7 144.9 735.4 145.1 736.9 148.4 738.5 146.5 740.5 142.8 740.4 143.1 737.8 142.2 736.3ZM145.4 739.2 148.1 738.7 149.4 738.9 152.6 739.4 151.0 742.0 148.5 741.1 145.1 741.9ZM135.8 745.2 132.6 744.8 131.9 742.5 133.5 740.6 136.5 740.1 139.8 741.8 136.4 743.5ZM167.1 728.7 165.4 724.4 169.3 725.1 172.4 726.7 169.5 727.9ZM169.8 723.3 170.8 728.0 167.3 731.2 162.6 728.2 165.3 725.3ZM170.3 744.6 172.9 746.0 170.7 748.2 170.0 749.3 168.4 749.2 166.2 748.5 168.2 746.9 167.8 744.4ZM192.8 741.1 192.1 737.5 194.5 735.6 197.2 733.2 200.0 736.2 199.4 738.7 198.0 739.9 195.9 742.7ZM184.0 741.6 182.0 743.7 180.3 745.8 174.8 743.9 178.0 739.8 181.2 739.4ZM147.6 746.5 145.0 747.7 140.3 748.1 142.4 744.4 146.5 742.7ZM208.6 746.7 205.5 749.9 201.7 750.4 200.8 747.1 200.8 743.6 204.1 744.2ZM127.2 750.5 125.3 750.3 122.8 750.4 122.0 748.4 124.7 747.7 125.1 746.6 126.4 747.4 127.6 748.2ZM161.9 758.0 158.3 757.5 160.9 755.0 162.7 753.5 164.0 755.9 163.9 757.5ZM223.1 748.3 221.2 750.2 221.4 747.2 222.5 744.8 225.6 746.8ZM221.4 756.0 218.7 754.4 217.0 751.3 220.5 748.8 222.7 750.6 228.2 751.4 223.0 753.8ZM171.1 743.7 172.5 743.2 175.8 740.8 175.2 743.8 175.4 746.2 172.9 745.9 170.2 746.1ZM153.7 733.4 153.1 734.9 152.0 735.0 150.4 735.5 150.4 733.4 151.4 732.3 152.4 732.8ZM114.8 749.3 116.9 750.4 117.8 752.6 117.2 754.8 115.3 753.8 112.2 754.2 114.7 752.3ZM107.1 750.1 109.7 751.3 110.1 752.5 110.2 754.0 108.1 754.5 107.3 753.0ZM130.8 751.9 130.9 753.0 129.6 755.7 128.7 752.8 128.5 751.6 129.8 750.1ZM115.2 751.1 115.2 748.4 113.7 745.6 117.2 747.0 117.5 748.1 117.4 749.9ZM223.9 753.8 222.5 753.5 221.5 752.4 221.5 750.0 224.5 749.4 226.7 751.2 224.2 752.9ZM162.5 730.7 162.3 731.4 161.3 733.5 160.0 731.7 159.1 730.5 160.7 729.1 161.8 730.0ZM176.2 755.8 178.1 755.9 181.2 756.5 179.2 758.9 178.6 762.2 176.2 759.9 175.9 757.8ZM169.3 744.4 165.0 745.7 162.8 743.1 162.4 739.4 165.6 739.4 168.7 740.7ZM150.6 734.4 150.5 735.2 150.3 736.1 149.5 736.5 148.4 736.1 148.1 734.8 149.0 733.9ZM156.2 726.0 158.0 723.6 160.1 725.0 161.1 726.7 159.8 727.9 158.6 727.1ZM145.9 747.5 150.5 747.0 148.7 751.5 144.2 752.6 144.3 748.2ZM169.2 721.9 171.1 724.5 167.5 725.6 166.0 724.1 166.7 721.7ZM128.9 749.9 127.1 748.2 128.2 745.4 131.9 745.7 133.3 748.2 133.5 751.4 130.2 752.5ZM159.8 740.1 156.8 739.8 156.7 735.7 161.5 735.7 160.6 738.7ZM173.6 725.3 174.1 723.4 176.0 721.6 176.6 724.1 177.2 725.6 174.8 727.8ZM154.9 726.7 152.8 725.9 153.2 723.0 155.8 723.2 158.6 724.5 157.2 726.5ZM76.1 748.7 74.4 745.2 76.4 741.9 79.1 744.5 79.9 746.0 78.7 747.0ZM83.1 747.3 84.8 746.0 87.1 744.8 86.4 746.9 85.6 747.9ZM82.7 745.1 85.7 743.8 86.8 746.2 88.0 746.7 89.5 748.8 86.8 749.6 85.0 749.3 82.6 747.5ZM90.1 745.1 91.4 745.6 90.7 746.8 89.5 748.3 85.4 747.5 87.3 744.8ZM72.5 751.4 72.5 749.2 73.9 748.0 75.5 749.0 75.9 750.4 75.1 751.7ZM69.3 744.1 71.6 743.6 73.0 744.0 73.7 745.8 70.9 746.6ZM90.6 751.6 90.0 753.4 86.8 753.0 87.5 751.0 88.3 749.9 90.5 748.6 91.4 750.5ZM98.6 750.1 98.4 747.8 101.2 748.5 103.5 747.7 104.9 751.0 102.5 753.8 98.3 753.1ZM81.6 746.5 81.3 744.9 83.4 745.0 84.3 745.7 85.9 748.2 82.8 747.3ZM105.4 753.6 104.3 752.9 102.3 751.8 104.4 750.8 105.6 750.4 109.1 749.6 108.0 752.0 106.5 753.1ZM71.3 741.2 72.3 741.2 73.6 742.3 71.7 743.7 69.9 742.5ZM76.3 742.8 78.5 744.2 79.4 745.9 79.0 747.7 76.8 748.2 75.6 746.6 74.7 744.7ZM80.1 746.3 81.9 747.4 81.5 749.1 78.8 750.7 77.5 747.5ZM101.4 751.5 97.2 753.9 93.4 752.4 95.0 749.3 96.7 748.6 98.1 748.9ZM92.3 751.6 94.0 752.9 92.8 755.0 90.9 753.2 90.1 752.8 89.2 751.6 90.5 750.2 92.4 748.9ZM87.2 742.4 87.4 744.6 85.2 744.8 84.2 743.5 81.3 743.0 82.5 740.7 84.9 741.9 86.4 740.8ZM101.6 750.5 100.9 748.7 103.0 748.8 105.3 749.3 103.7 751.1Z" fill="#004464" stroke="#000" stroke-width="0.9"/>
<path d="M205.2 684.4 202.9 683.5 205.0 682.0 206.6 682.1 207.6 683.3 209.1 685.2 206.3 686.4ZM207.9 714.4 207.5 713.9 207.4 712.7 208.2 711.8 209.1 712.8 209.4 713.2 210.0 714.1 209.4 715.4ZM206.6 720.6 207.0 720.3 208.0 720.7 207.3 721.4 206.9 721.6 206.3 721.4 205.8 721.0ZM206.3 684.9 208.3 684.6 209.3 685.3 209.5 685.6 210.4 686.3 209.2 686.8 208.0 687.5 207.0 686.4ZM222.4 692.8 221.0 693.1 220.2 692.4 218.6 690.6 220.9 690.3 222.3 689.8 223.1 691.6ZM214.2 686.2 215.3 685.8 215.6 687.0 214.6 687.3 213.6 687.4 213.7 686.7ZM220.1 702.6 219.1 702.6 219.2 701.7 220.0 701.5 221.4 701.9ZM225.5 701.4 224.4 701.9 224.2 701.1 223.6 700.5 223.9 699.7 225.0 700.0 226.0 700.5ZM197.9 708.2 199.0 708.5 199.2 710.0 198.3 710.2 197.5 709.8 196.5 708.8ZM187.0 737.4 187.4 735.5 188.7 734.7 190.6 735.5 190.9 736.9 190.2 738.7 187.8 739.1ZM216.0 700.5 215.1 701.1 213.7 700.5 214.3 699.3 215.5 699.6 216.6 699.7ZM200.0 730.2 199.4 731.2 198.6 731.1 198.1 730.7 198.5 730.3 199.0 729.7ZM217.4 679.6 218.1 677.7 219.6 678.9 220.0 680.6 218.4 680.6ZM222.7 693.2 221.3 691.3 223.7 690.1 224.7 692.0 224.8 694.1ZM197.9 717.7 196.1 716.1 198.4 715.4 199.4 716.4 201.0 717.8 199.7 719.6 197.6 719.9ZM221.8 687.8 221.3 686.3 222.4 684.3 224.0 686.0 223.9 687.9ZM194.0 727.0 193.3 726.5 193.0 725.7 193.5 724.4 194.7 724.7 194.5 725.9 196.0 727.2ZM220.4 694.3 219.3 693.1 220.5 692.9 223.0 692.1 221.6 694.0 222.5 695.7 220.6 695.4ZM214.2 679.0 214.0 678.1 214.4 676.8 215.9 677.5 215.1 678.6ZM206.1 714.3 205.3 713.7 205.4 712.9 205.5 710.9 208.1 711.4 207.6 713.2 207.5 713.7 207.3 715.9ZM199.3 727.6 198.5 728.9 198.0 727.9 196.3 727.0 198.4 726.7 198.8 726.0 201.2 725.8 200.1 727.4ZM226.3 681.9 227.1 682.9 225.8 684.0 224.0 683.0 224.8 681.3ZM208.0 719.1 209.4 720.1 208.7 722.2 205.7 722.1 205.3 719.7 206.9 718.8ZM209.0 706.3 207.8 705.8 209.0 705.3 210.2 704.8 210.9 705.8 210.0 706.8ZM225.6 685.5 225.3 687.5 223.2 687.2 223.3 685.8 224.0 685.3ZM182.8 728.5 184.4 728.9 185.1 729.2 184.9 729.9 184.2 730.8 183.6 729.6ZM186.4 720.4 187.9 720.5 189.6 722.3 186.6 723.1 184.0 722.5 185.5 720.9ZM228.7 689.3 226.7 691.2 226.8 688.6 227.1 687.1 228.2 688.1ZM195.0 713.4 195.2 712.4 195.7 711.9 196.1 711.9 197.1 711.5 197.6 712.3 196.9 713.0 196.1 713.1ZM208.1 687.8 207.9 688.3 207.6 688.9 206.7 689.1 206.8 688.2 206.8 687.3 207.5 687.7ZM201.9 724.0 203.9 723.5 203.6 725.4 201.8 726.0 201.1 724.7ZM217.5 693.4 220.2 694.3 219.1 696.2 217.3 696.6 215.5 695.1ZM190.5 728.3 190.7 730.6 187.7 731.0 187.2 729.4 186.7 728.1 188.6 726.7ZM184.3 734.4 185.5 733.6 186.5 734.3 186.2 735.5 185.3 735.2ZM221.6 698.2 222.1 700.2 220.1 701.6 218.2 701.3 217.7 699.7 218.8 697.6ZM217.4 674.8 218.5 675.2 218.1 676.6 218.1 677.0 217.6 677.6 216.6 678.1 216.2 676.7 216.3 675.4ZM193.8 724.6 196.0 723.6 197.7 724.2 197.3 725.9 195.6 726.4ZM195.6 719.3 193.5 717.9 193.4 715.4 196.1 714.3 197.4 716.0 198.3 718.1ZM221.6 697.6 221.3 696.8 222.5 696.7 223.2 696.1 223.5 697.0 223.2 697.4 223.2 698.5 222.5 697.7ZM193.2 716.2 192.2 716.0 192.1 715.0 193.3 715.2 194.1 715.7ZM194.2 718.5 193.1 718.2 191.4 718.4 192.0 717.1 192.7 716.2 193.7 717.1 194.5 717.6ZM192.5 733.2 190.4 732.1 189.9 730.3 192.2 729.4 193.9 729.5 194.2 730.8 193.9 732.1ZM217.3 688.5 217.7 686.6 220.4 686.8 221.4 687.8 220.8 689.1 219.6 688.9ZM216.1 696.7 218.8 697.5 216.5 699.1 216.0 699.8 214.8 699.2 214.1 697.5ZM210.0 671.6 209.2 674.3 207.1 673.5 206.3 672.8 207.0 671.9ZM215.2 682.3 213.1 682.7 212.8 681.1 214.0 680.7 214.5 681.2ZM203.3 678.7 204.4 678.1 205.0 679.0 204.7 680.3 203.0 680.0ZM218.9 681.8 220.5 681.1 221.6 681.9 221.0 682.8 220.3 684.6 219.6 683.0ZM206.5 673.5 208.0 673.7 209.2 673.9 208.2 675.0 207.3 676.1 206.8 674.7ZM196.2 727.2 196.7 727.3 197.7 728.0 196.9 728.7 195.8 728.8 195.5 727.8 195.1 727.0ZM225.4 672.2 226.5 671.1 227.1 672.5 227.2 673.9 225.4 673.8 224.9 673.3 224.3 672.2ZM213.2 693.3 214.3 693.9 214.4 695.0 212.9 694.9 212.1 694.8 211.5 694.4 211.0 693.2 212.1 692.2ZM226.5 690.8 226.0 689.0 227.7 690.2 229.2 690.4 230.4 692.6 227.3 692.4 226.6 691.6ZM216.5 711.8 215.4 712.1 214.6 713.0 214.4 711.8 214.9 711.3 214.7 710.1 215.5 710.7 216.8 710.7ZM203.1 695.7 202.5 694.6 201.5 693.8 202.1 692.5 203.2 692.9 203.8 693.2 204.0 693.8 204.7 695.1ZM199.7 710.1 198.0 710.3 199.2 708.8 199.2 706.7 200.6 708.0 201.6 708.8 202.0 710.0 200.8 711.1ZM199.3 714.1 199.3 712.6 200.7 713.7 200.8 714.5 199.9 714.9ZM211.5 702.8 211.4 703.1 210.9 703.3 210.4 702.9 211.0 702.6 211.3 702.3ZM218.3 693.5 217.0 692.4 218.5 691.8 219.8 691.2 220.7 692.1 221.7 693.8 219.7 694.7ZM213.7 702.8 214.7 702.8 216.5 703.8 214.9 704.9 213.6 704.8 212.4 705.3 211.0 703.7 212.8 703.1ZM199.8 703.3 200.9 703.5 200.5 704.4 200.4 704.7 200.1 705.5 199.2 705.6 199.0 704.6 199.3 703.8ZM199.2 715.2 198.6 714.1 198.8 713.1 199.8 712.9 200.3 713.7 201.4 715.2ZM209.1 714.3 209.5 712.3 212.1 712.1 214.0 713.9 212.6 715.6 210.5 715.4ZM204.6 726.6 201.8 726.2 203.0 724.1 203.2 722.8 204.6 721.9 205.0 723.5 205.9 725.0ZM215.8 711.4 215.0 711.5 213.9 711.0 215.0 710.3 215.5 709.5 216.0 710.0 216.9 710.4 216.8 711.6ZM191.0 728.2 188.2 729.4 186.8 729.9 184.8 729.6 186.0 727.7 185.6 725.5 187.3 725.0 188.9 726.6ZM189.6 735.3 190.1 735.9 190.1 736.5 189.2 736.3 189.0 736.2 188.4 736.2 188.2 735.5 189.0 735.6ZM213.9 695.1 215.0 695.0 216.0 694.5 216.1 695.9 215.5 697.1 214.1 696.2ZM195.8 723.8 196.1 722.7 197.4 722.9 197.8 723.8 197.8 724.2 197.2 724.3 196.0 725.0ZM207.4 711.4 207.4 710.8 207.7 709.6 208.6 710.5 210.1 710.8 208.8 711.6 208.0 711.5ZM207.8 715.7 208.1 716.7 208.1 717.5 206.8 717.9 206.8 716.3ZM200.9 705.0 198.7 705.4 197.5 704.5 196.5 703.3 197.2 701.9 198.8 702.9 200.6 703.0ZM220.5 699.2 219.9 698.7 219.0 698.3 219.8 697.8 220.1 697.4 220.7 697.5 221.3 697.9 220.8 698.4ZM200.8 715.5 199.9 714.1 199.0 712.7 200.8 712.7 202.6 713.9ZM211.0 714.2 211.7 712.9 213.7 713.1 213.8 714.5 213.1 716.0 211.6 715.2ZM219.0 700.6 218.5 700.7 217.6 700.2 218.6 699.3 219.8 699.9ZM194.7 733.0 194.3 734.5 193.0 733.7 192.0 733.1 192.6 731.9 194.4 731.6ZM198.1 720.4 196.8 721.0 195.7 719.8 197.1 718.9 197.0 717.7 198.5 717.8 199.1 718.8 198.6 719.8ZM201.8 705.6 202.8 706.2 202.5 707.1 200.8 707.7 201.0 706.2ZM193.0 724.4 192.9 723.2 191.9 722.2 192.9 720.9 194.3 721.7 194.6 722.9 194.0 723.8ZM203.7 681.1 204.1 679.7 205.6 679.4 205.7 680.8 205.4 682.7ZM202.5 696.7 202.4 697.7 202.9 698.3 202.1 698.4 201.7 698.1 201.6 697.6 201.7 696.9ZM201.9 702.0 202.1 701.4 201.7 700.6 202.5 700.9 202.8 701.0 203.1 701.4 203.1 702.1 202.6 702.6ZM220.8 698.9 221.1 698.9 222.2 698.8 221.6 699.5 221.2 699.8 220.5 699.9 220.7 699.3ZM218.9 688.2 218.9 687.6 219.1 686.4 220.0 687.2 221.8 687.8 220.3 688.6 219.4 688.7ZM208.7 711.7 207.8 710.9 208.9 710.0 210.2 710.3 209.6 711.4 210.0 712.2 209.1 712.1ZM202.9 726.4 203.9 728.1 201.4 728.6 200.6 726.8 201.8 725.9ZM212.5 704.8 212.6 707.0 212.3 708.4 210.8 708.1 209.3 707.4 209.5 705.1ZM206.6 682.1 207.2 681.0 208.2 682.0 209.4 682.1 208.7 683.1 208.0 683.7 207.7 682.7ZM192.2 729.8 192.8 728.9 193.9 729.3 194.6 730.7 193.2 730.9 191.9 731.4ZM205.6 717.7 203.5 717.2 202.6 715.8 204.0 714.8 205.5 715.6ZM200.8 706.0 200.9 706.7 200.7 707.1 200.1 708.0 199.0 707.6 198.9 706.5 199.9 706.1 200.4 705.2ZM198.7 714.4 198.4 716.1 196.8 715.3 196.8 714.3 196.6 712.2 199.1 712.5ZM182.9 723.0 184.0 722.7 185.6 722.6 184.5 723.8 183.2 724.7ZM218.2 703.2 218.0 702.3 218.6 701.6 219.1 702.2 219.1 702.8ZM210.0 697.9 208.8 697.7 209.6 696.9 210.4 696.4 210.8 697.1 210.9 698.3ZM214.8 702.8 213.7 702.8 212.8 703.1 212.1 702.1 212.2 700.7 213.5 700.5 214.4 701.1 215.1 701.9ZM199.4 701.8 199.5 702.2 199.6 702.9 198.5 703.3 198.0 702.6 198.5 702.0 198.9 701.8ZM189.2 718.2 189.8 717.4 190.6 717.3 190.9 718.0 190.7 718.5 190.3 718.8 189.5 719.0ZM218.8 707.0 218.0 707.6 217.5 706.8 216.7 705.9 217.9 705.1 219.3 705.1 219.4 706.4ZM220.9 691.1 221.3 692.7 220.6 693.1 219.9 693.1 219.6 691.9ZM212.8 692.9 212.0 691.8 211.6 690.7 212.8 690.4 213.5 690.9 214.3 692.0ZM211.9 680.0 211.9 679.6 212.8 679.4 212.7 680.1 213.8 680.8 212.6 681.4 211.6 681.4 211.0 680.5ZM208.5 685.3 209.0 685.1 209.4 685.3 209.7 685.5 209.8 685.9 209.3 686.2 208.2 686.9 208.0 685.9ZM204.6 689.0 205.8 687.7 207.2 689.0 207.3 690.9 205.0 691.1 204.6 689.7ZM221.8 696.3 222.6 696.4 222.9 697.1 222.2 697.9 221.4 697.8 220.6 697.2 221.0 696.2ZM206.8 752.3 207.9 752.2 208.0 753.0 208.2 754.2 206.7 754.2 205.8 752.9ZM107.2 749.7 107.3 750.3 107.7 750.8 107.2 750.9 106.4 751.1 105.7 750.5 106.8 750.1ZM112.4 747.4 111.7 748.1 110.9 747.8 110.0 747.4 111.0 747.1 111.5 747.0ZM151.3 734.8 153.0 735.2 153.3 736.0 154.5 736.7 153.3 736.9 152.6 737.6 152.2 736.7 151.1 736.1ZM200.7 744.3 200.8 745.3 199.5 745.3 198.6 745.1 198.2 744.6 199.0 744.0 199.2 743.0 199.9 743.7ZM184.9 742.2 184.5 741.3 184.3 740.2 185.3 739.5 186.2 740.4 186.6 741.2 185.7 741.5ZM200.3 748.4 199.5 747.0 198.3 745.3 200.4 744.1 203.2 744.4 202.5 746.3 201.6 747.2ZM154.1 755.5 153.4 756.8 152.6 756.0 152.0 755.7 151.8 754.4 153.4 754.3ZM157.9 728.6 157.5 729.5 155.8 730.5 156.0 728.8 156.7 727.2ZM132.3 750.5 133.6 750.0 134.1 751.0 134.3 751.8 133.3 752.1 132.6 751.7ZM119.3 745.0 119.8 744.3 120.9 744.1 120.7 745.2 120.3 745.6 119.1 746.4ZM164.6 740.4 163.8 740.0 164.2 739.3 163.7 738.2 165.3 738.4 165.9 739.1 165.1 739.9ZM184.7 760.2 183.6 758.9 182.7 757.6 184.0 757.1 184.8 756.0 185.2 757.1 185.5 758.3ZM158.0 749.5 156.9 750.4 157.0 749.1 157.2 748.6 158.2 747.5 158.9 748.6 159.1 749.7ZM162.8 746.6 162.1 747.6 161.3 747.0 161.4 746.3 162.0 746.2ZM205.2 740.4 204.5 740.1 202.9 739.9 204.2 738.9 204.9 739.2 206.1 739.4ZM142.1 744.6 142.8 744.1 143.6 744.9 143.1 746.4 142.1 745.2ZM149.9 749.6 149.3 748.2 150.9 747.5 151.6 749.0 151.8 749.7 151.9 750.8 150.5 751.1 149.9 750.2ZM225.4 747.9 226.4 747.6 226.6 748.8 225.7 749.8 224.9 748.6ZM126.7 753.9 127.3 752.0 129.0 753.1 129.9 754.3 129.2 755.8 127.8 756.3 126.2 755.9 126.3 754.6ZM195.8 733.4 195.3 734.0 194.9 734.6 193.8 734.4 193.2 733.4 194.6 733.1 195.4 732.0ZM176.0 735.5 176.5 735.8 177.0 735.8 176.9 736.3 176.6 736.7 176.2 736.6 176.0 736.3 175.1 735.7ZM201.8 736.5 202.1 737.6 201.0 739.2 199.6 737.5 200.9 736.6ZM159.9 746.1 159.5 747.1 158.4 747.1 157.6 746.5 157.8 745.4 159.8 743.9ZM211.5 741.4 211.2 742.4 210.3 741.8 209.7 740.6 211.3 739.9ZM171.3 728.8 171.4 728.1 172.3 727.2 172.8 728.3 173.2 729.4 172.3 729.9 171.6 729.3ZM164.5 721.7 164.1 722.3 163.6 722.8 163.4 722.1 163.2 721.8 163.5 721.6 163.9 721.6ZM122.2 745.0 121.4 745.0 120.8 744.5 120.6 743.6 121.9 743.4 122.4 744.1ZM206.9 745.3 205.4 746.6 204.2 747.1 204.2 745.7 204.0 745.2 203.9 743.8 205.4 744.1ZM155.6 751.5 156.4 751.9 157.3 751.9 157.8 752.9 156.6 753.1 156.3 753.6 155.2 753.6 155.5 752.7ZM189.3 748.5 188.7 747.5 187.7 746.4 189.3 745.5 191.0 746.5 190.6 747.9ZM115.4 746.5 116.3 746.7 116.7 747.0 116.4 747.3 115.8 747.2ZM158.0 740.3 158.0 740.1 158.2 739.8 159.0 739.2 159.0 740.0 159.4 740.6 158.4 740.7 158.0 740.8ZM143.5 746.3 142.2 747.1 141.9 745.9 142.4 745.0 143.6 745.4ZM157.1 751.1 155.8 750.9 155.5 749.8 156.5 749.3 158.5 748.3 159.8 750.6ZM208.6 741.1 209.2 741.6 209.1 742.3 208.6 743.0 207.7 742.7 207.6 741.4ZM187.7 757.1 188.1 756.7 188.9 756.7 188.9 757.3 189.3 758.4 187.9 758.4 186.9 757.9ZM157.8 720.9 158.0 722.7 157.1 723.3 156.1 722.9 155.9 721.3ZM207.0 739.5 203.9 739.8 203.5 737.9 203.9 735.8 205.1 737.5ZM150.5 747.3 149.2 748.0 148.1 746.9 148.6 745.3 150.3 745.2 152.3 745.6 150.6 746.8ZM173.6 720.5 173.7 721.3 172.9 721.0 172.5 720.6 172.4 719.7 173.3 720.2ZM176.5 732.4 176.5 733.7 175.0 733.7 174.8 733.0 174.1 731.9 175.5 731.5ZM118.2 742.7 118.8 742.4 119.6 743.0 119.9 743.7 118.9 743.8 118.5 744.3 117.7 743.8 118.0 743.2ZM156.2 723.5 155.8 723.2 155.6 722.0 156.8 722.3 156.7 723.2ZM231.4 755.0 231.3 753.6 231.7 752.6 232.5 751.9 233.9 752.3 234.0 753.4 233.1 754.0 232.6 754.6ZM181.1 752.3 181.0 752.0 181.4 751.5 182.1 751.5 182.1 752.3 181.7 752.9ZM179.1 726.7 178.2 725.9 179.5 725.1 180.5 725.3 181.7 726.3 181.2 727.5 179.8 727.1ZM199.9 741.9 200.6 741.4 201.6 741.5 201.5 742.7 201.3 743.4 200.4 743.2 198.8 743.0ZM151.9 735.8 151.2 737.7 149.5 737.8 148.3 737.1 149.0 734.5ZM228.3 750.0 228.3 751.4 227.3 751.1 225.6 751.4 225.9 749.8 227.0 749.5 227.5 748.2 229.6 748.5ZM181.3 748.2 181.5 749.2 180.4 748.6 179.1 748.7 179.8 747.8 180.1 747.2 180.9 747.3 182.4 747.2ZM162.7 718.0 160.6 719.8 159.6 717.7 159.8 716.3 161.7 716.0ZM179.0 755.8 179.9 755.3 180.0 754.6 180.5 754.9 180.5 755.5 181.2 756.2 180.5 756.8 179.8 756.0ZM175.3 722.1 174.7 723.7 173.5 722.9 172.8 721.6 174.4 721.2ZM183.8 752.5 183.0 752.2 183.8 751.9 184.1 751.5 184.5 751.8 184.3 752.2 184.7 752.6 184.1 752.9ZM132.8 756.7 131.1 757.3 130.5 755.8 129.8 754.4 132.0 754.1 133.3 755.0ZM157.4 741.1 157.7 740.6 158.7 740.7 158.4 741.6 157.9 741.8 157.1 742.4 157.4 741.6ZM155.2 726.4 154.8 726.3 153.8 726.0 154.6 725.5 155.4 725.0 156.4 725.5 156.2 726.6ZM175.0 742.2 175.2 740.8 175.6 739.8 176.4 739.9 177.4 740.2 177.7 741.0 177.1 741.8 176.1 742.1ZM219.8 746.3 220.6 746.0 221.3 746.6 220.8 747.4 220.3 747.7 219.8 747.4 219.1 746.8ZM158.9 752.7 160.9 753.6 160.3 755.2 159.3 755.7 158.2 756.0 157.6 755.3 157.5 754.4 157.3 752.9ZM127.5 754.8 128.3 753.9 129.7 753.5 129.3 754.6 129.3 755.0 128.6 755.7ZM172.9 747.6 174.6 748.0 174.4 749.6 172.6 749.3 171.4 749.6 171.9 748.3 171.8 747.1ZM166.5 720.4 164.6 721.3 163.8 720.5 163.6 719.4 165.2 718.6ZM164.9 716.1 166.4 716.2 167.1 717.6 165.7 718.0 164.9 718.5 164.4 717.3ZM185.2 729.8 183.7 729.6 184.3 728.6 184.9 726.6 186.8 726.9 188.5 729.2 186.0 729.9ZM200.1 745.6 199.9 744.1 200.3 742.7 201.4 743.9 202.8 745.3ZM220.5 746.0 219.3 746.4 218.0 746.2 218.8 745.2 219.9 744.8ZM211.2 739.8 211.8 740.8 212.1 741.4 211.7 742.0 210.0 742.2 210.8 741.0ZM162.4 736.5 159.1 736.7 157.2 736.7 157.7 734.6 159.6 734.8ZM153.1 735.1 152.5 735.4 152.2 735.0 151.5 734.5 152.1 733.7 152.8 734.0 153.1 734.4 153.0 734.7ZM157.9 735.5 158.4 738.9 155.7 738.6 154.7 737.4 155.2 734.6ZM168.6 724.3 169.2 724.6 170.8 725.3 169.3 726.2 167.8 725.8 167.1 724.7ZM200.0 742.4 198.5 742.4 198.6 740.6 199.4 739.8 200.6 738.5 202.1 739.8 203.3 741.2 201.3 741.9ZM200.2 747.5 199.5 747.3 199.2 747.0 199.0 746.4 199.8 745.7 200.4 746.6ZM212.4 746.3 213.6 745.9 214.2 747.1 214.7 748.6 213.2 749.8 210.7 749.9 209.1 748.1 211.0 746.4ZM140.3 747.3 142.4 748.9 140.7 750.3 138.4 750.7 139.2 749.0ZM210.0 748.3 209.4 749.4 208.4 749.4 207.1 748.9 206.9 747.3 208.7 746.9 209.7 747.1ZM137.3 754.8 138.4 753.3 140.0 753.4 141.2 754.5 140.7 756.2 138.0 756.4ZM152.6 746.9 151.7 746.3 151.5 745.3 151.1 744.2 152.5 744.2 153.7 744.2 155.3 745.2 153.6 746.3ZM114.9 743.3 115.5 744.0 114.9 744.8 113.4 744.9 113.5 743.7 113.9 742.2ZM207.2 754.3 206.2 754.0 206.4 753.0 207.5 752.2 208.2 753.0 208.1 753.6 208.0 754.1ZM132.9 755.7 132.4 756.9 130.6 758.5 128.9 756.1 131.1 754.9ZM112.3 747.8 111.3 747.1 110.6 746.1 112.3 746.0 113.3 746.7ZM165.5 714.4 165.8 716.1 165.0 718.0 162.4 717.2 163.6 714.9ZM125.4 741.4 125.0 743.2 125.2 745.3 122.5 745.1 122.7 743.2 122.8 741.9 123.8 740.6ZM158.2 722.6 159.0 723.2 158.7 723.9 157.9 724.2 157.3 724.2 157.0 723.3 157.5 722.7ZM118.2 755.8 118.3 754.6 120.2 754.6 120.3 755.9 119.8 757.1 118.4 756.6ZM190.0 739.1 189.0 739.0 187.1 738.3 188.2 737.0 189.5 737.5 190.7 737.7ZM180.6 733.5 180.0 734.4 179.0 735.4 176.6 735.2 177.0 733.3 178.5 732.9 180.2 731.8ZM164.7 724.7 163.1 723.4 161.4 723.1 162.6 722.2 163.2 720.5 164.3 721.9 164.1 722.6ZM167.2 750.5 166.8 750.6 166.5 750.5 166.5 750.1 166.7 749.9 167.3 749.1 167.6 750.1ZM107.0 755.1 108.0 754.8 109.4 753.9 109.4 755.6 110.6 757.3 108.4 757.1 107.3 756.7ZM203.4 755.2 204.4 755.6 204.5 756.6 203.7 757.8 202.6 757.1 202.6 756.2 202.9 755.6ZM141.3 737.0 143.7 737.8 142.3 739.5 140.8 740.9 139.8 739.4 139.3 737.8ZM178.2 758.3 177.0 758.7 175.1 758.8 175.1 757.3 176.8 756.7 178.1 757.3ZM197.7 754.7 198.6 753.0 200.3 753.4 202.6 753.9 200.9 755.4 200.3 756.8 198.6 756.4ZM217.3 753.4 216.4 754.4 215.0 753.8 214.5 752.6 216.0 752.0 216.7 751.5 218.4 751.7 217.8 752.8ZM120.7 750.4 118.8 750.8 117.9 750.2 116.7 749.2 118.5 749.3 120.0 749.0ZM194.2 750.0 195.2 749.3 196.0 749.8 196.9 750.4 195.8 750.9 193.8 751.6ZM193.5 744.8 194.5 743.9 194.4 745.4 195.0 746.2 194.3 747.3 193.5 746.1 193.4 745.7 191.4 744.7ZM238.8 757.4 238.0 756.8 237.4 755.8 238.9 755.4 241.0 756.5ZM151.0 735.3 148.9 736.4 145.5 737.4 144.9 734.2 148.6 733.8ZM177.0 729.7 178.3 729.2 179.2 729.4 179.8 730.3 178.8 730.9 178.1 730.4ZM189.8 730.5 189.6 731.8 187.1 732.0 187.8 730.2 189.3 727.9ZM113.6 756.5 113.6 755.9 113.7 755.4 114.4 755.0 115.0 755.7 114.3 756.1 114.1 756.2ZM169.9 738.9 170.8 739.1 170.8 740.0 169.6 740.1 168.8 739.4ZM180.3 733.5 180.4 734.2 179.9 734.8 179.2 734.5 178.9 733.7 179.6 732.9ZM132.3 749.3 133.0 750.1 132.3 751.3 130.9 751.1 130.3 750.2 131.4 749.5ZM178.9 745.4 179.0 747.3 177.9 748.7 175.5 748.4 173.9 745.9 177.2 745.4ZM222.0 755.5 220.3 756.7 219.8 758.1 217.1 758.2 218.5 756.1 217.6 754.0 220.2 754.4ZM191.9 741.1 192.9 741.8 193.1 743.2 192.1 743.6 191.1 743.4 190.3 742.8 189.1 741.7 191.2 741.7ZM192.0 742.5 191.6 742.4 190.7 741.6 191.3 740.8 192.4 740.7 193.0 741.6 193.1 742.3 192.6 743.0ZM118.2 744.2 118.6 743.4 119.5 743.7 119.8 744.4 119.6 745.2 118.6 744.8ZM190.9 735.3 190.6 737.2 190.3 738.9 187.2 738.9 188.6 736.7 189.2 735.3ZM160.6 757.5 159.3 758.6 158.9 757.2 157.3 756.2 158.4 755.1 160.2 755.2 160.5 756.1 161.5 756.9ZM224.7 757.5 223.7 758.1 223.0 757.4 222.3 756.4 223.6 756.2 224.1 756.7ZM169.2 748.9 169.4 748.3 169.7 747.8 170.2 747.7 171.0 747.8 171.3 748.7 170.5 749.1 169.7 749.8ZM133.1 755.8 133.9 755.0 134.4 756.0 134.7 756.9 133.6 758.1 131.7 757.5 132.7 756.2ZM133.5 746.7 136.5 745.4 138.7 748.3 135.8 750.5 133.9 748.5ZM133.8 747.5 134.0 748.8 133.2 749.5 131.3 749.2 132.2 747.6ZM192.9 751.8 194.0 753.1 194.5 753.9 194.0 756.4 191.9 754.7 190.8 753.0ZM149.0 759.2 149.3 757.5 150.1 756.2 152.8 756.2 153.2 758.5 150.8 759.6ZM166.5 753.3 167.7 753.7 168.0 754.2 168.2 755.1 167.5 755.5 166.4 755.3 166.1 754.2ZM149.4 740.5 149.7 742.0 148.1 741.7 147.0 741.3 147.8 740.6ZM158.6 749.1 160.4 748.9 160.7 749.8 161.1 750.3 160.5 751.9 159.5 750.5ZM178.4 746.3 176.1 745.0 176.3 742.7 178.5 741.5 180.1 743.8ZM123.6 744.1 122.3 743.8 120.6 743.2 121.5 741.4 122.8 741.7 124.1 741.0 125.0 742.7ZM215.6 751.9 213.6 753.0 213.4 754.2 212.4 753.6 211.8 752.9 211.0 751.4 212.4 751.6 213.1 751.9ZM65.1 746.4 64.7 744.2 67.1 743.6 69.4 744.4 67.3 745.6ZM82.8 748.7 84.9 748.4 86.4 750.2 86.0 752.6 83.2 753.0 81.5 750.8ZM78.9 740.2 79.5 740.7 80.9 741.1 79.7 741.8 78.8 741.5 77.5 740.9ZM99.0 747.9 97.4 747.5 98.1 746.3 99.3 746.9 100.4 746.6 100.6 747.6 100.4 748.5 99.2 749.1ZM104.0 748.4 102.3 748.4 103.1 747.4 102.9 745.4 104.6 746.1 105.1 747.2 106.4 747.9 104.8 748.2ZM82.7 751.8 83.9 751.5 83.4 752.6 84.0 753.4 83.4 754.0 82.8 753.1 81.6 753.1 82.1 752.4ZM66.8 744.3 66.1 745.2 65.1 744.3 65.5 743.0 66.8 743.3ZM76.8 745.0 76.2 744.3 76.9 743.7 77.5 743.7 78.2 743.8 78.7 744.3 78.8 745.2 77.5 745.5ZM102.5 747.0 103.1 747.5 103.1 748.1 102.5 748.8 101.5 747.8ZM95.6 751.5 94.5 750.8 93.6 750.2 94.6 749.4 95.9 750.1ZM97.1 752.4 97.5 753.2 96.9 753.7 96.5 753.8 95.6 754.5 95.7 753.7 95.0 752.8 96.1 752.2ZM106.4 750.2 106.3 749.4 107.2 748.9 107.7 749.7 107.0 750.1ZM90.3 749.2 90.1 749.9 89.6 750.0 89.2 750.1 88.4 750.0 88.8 749.3 89.0 749.0 89.6 749.1ZM95.5 751.9 95.3 750.4 96.4 750.2 97.1 750.3 96.8 751.2Z" fill="#000" stroke="#000" stroke-width="0.5"/>
<path d="M313.3 663.5 329.8 661.5 341.7 660.0 353.7 657.1 367.1 653.3 380.5 650.3 394.0 648.5 407.4 647.3 419.4 648.1 431.3 649.1 440.0 650.0" fill="none" stroke="#000" stroke-width="1.8" stroke-linecap="round"/>
<path d="M292.4 661.5 299.9 661.5 307.3 661.8" fill="none" stroke="#000" stroke-width="1.5" stroke-linecap="round"/>
<path d="M270.0 660.8 277.5 663.0 284.9 664.5" fill="none" stroke="#000" stroke-width="1.2" stroke-linecap="round"/>
<path d="M430.0 649.6 439.0 651.1 447.9 654.1 456.9 657.1 464.4 660.0 471.8 664.5 477.8 669.0 482.3 672.7 486.8 675.7 492.7 680.2 498.7 684.7 503.2 687.7" fill="none" stroke="#000" stroke-width="1.8" stroke-linecap="round"/>
<path d="M533.4 719.8 537.6 717.9 543.5 714.9 549.5 711.9 557.0 707.4 560.7 704.9" fill="none" stroke="#000" stroke-width="1.8" stroke-linecap="round"/>
<path d="M562.7 703.4 569.7 699.2" fill="none" stroke="#000" stroke-width="1.3" stroke-linecap="round"/>
<path d="M258.1 660.8 268.0 662.5" fill="none" stroke="#000" stroke-width="1.1" stroke-linecap="round"/>
<path d="M272.9 663.5 285.2 664.7" fill="none" stroke="#000" stroke-width="1.1" stroke-linecap="round"/>
<path d="M248.3 679.2 251.2 682.9" fill="none" stroke="#000" stroke-width="1.0" stroke-linecap="round"/>
<path d="M252.7 686.1 254.4 691.5 253.7 697.7" fill="none" stroke="#000" stroke-width="1.0" stroke-linecap="round"/>
<path d="M252.2 701.9 250.2 706.3 247.3 710.0" fill="none" stroke="#000" stroke-width="1.0" stroke-linecap="round"/>
<path d="M244.6 712.4 242.1 714.9" fill="none" stroke="#000" stroke-width="1.0" stroke-linecap="round"/>
<path d="M237.9 719.8 234.7 724.7" fill="none" stroke="#000" stroke-width="1.0" stroke-linecap="round"/>
<path d="M228.6 728.4 224.9 730.9" fill="none" stroke="#000" stroke-width="1.0" stroke-linecap="round"/>
<path d="M180.9 6.0 189.5 13.4 194.5 23.2 198.2 33.1 200.6 43.0 200.6 67.6 200.6 89.8 196.9 99.6 190.8 109.5 187.1 121.8 183.4 134.1 176.0 148.9 174.8 156.3 166.1 171.1 156.3 188.3 145.2 206.0M241.3 6.0 235.1 13.4 229.0 20.8 227.7 35.6 226.5 50.3 222.8 60.2 215.4 65.1 203.1 70.1M241.3 6.0 248.7 15.9 249.9 20.8 257.3 28.2 262.2 38.0 263.5 50.3 269.6 57.7 276.0 60.2M204.3 206.0 215.4 195.7 227.7 188.3 242.5 180.9 257.3 176.0 276.0 171.1M276.0 60.7 288.3 59.7 294.5 55.3 305.6 53.3 315.4 57.7 325.3 63.9 337.6 73.8 349.9 82.4 362.2 91.0 369.6 99.6 379.5 107.0 389.3 114.4 399.2 124.3 404.1 131.6M473.1 6.0 471.9 20.8 468.2 35.6 463.2 45.4 453.4 54.0 438.6 59.0 431.2 65.1 427.5 77.4 421.4 91.0 415.2 104.5 410.3 114.4 406.6 124.3 404.1 131.6M365.9 134.1 369.6 121.8 379.5 107.0 394.3 99.6 414.0 100.9 428.7 107.0 436.1 119.3 437.4 134.1 433.7 148.9 426.3 160.0 414.0 163.7 399.2 164.9 384.4 162.4 372.1 151.4 365.9 139.0 365.9 134.1M276.0 170.8 290.8 165.6 313.0 160.0 332.7 158.7 347.4 152.6 362.2 147.7 379.5 141.5 394.3 136.6 404.1 132.9 418.9 134.1 436.1 131.6 448.5 131.6 468.2 134.1 485.4 139.0 507.6 136.6 517.4 136.6 527.3 144.0 537.1 151.4 546.0 157.5M404.1 131.6 402.9 144.0 401.6 153.8 399.2 166.1 396.7 178.5 396.7 193.2 398.0 206.0M404.1 131.6 414.0 144.0 423.8 153.8 433.7 166.1 441.1 178.5 448.5 188.3 458.3 198.2 467.9 206.0M589.1 6.0 586.7 18.3 590.3 28.2 599.0 38.0 603.9 47.9 604.6 60.2 600.2 75.0 601.4 87.3 603.9 95.9 595.3 104.5 590.3 110.7 594.0 116.9 596.5 124.3 603.9 131.6 608.8 140.3 613.8 148.9M546.0 157.5 560.8 158.7 578.0 161.2 592.8 160.0 607.6 153.8 613.8 148.9 622.4 146.9 629.8 148.9 639.6 150.1 651.9 146.4 659.3 141.5 669.2 134.1 684.0 126.7 698.7 120.6 713.5 111.9 728.3 104.5 743.1 95.9 757.9 87.3 772.7 81.1 787.4 77.4 799.8 73.8 817.0 67.6M592.8 160.0 583.0 171.1 573.1 183.4 563.2 195.7 555.9 206.0M659.3 141.5 666.7 151.4 671.6 156.3 672.9 163.7 680.3 171.6 685.2 178.5 688.9 184.6 693.8 188.3 703.7 189.5 718.5 188.3 733.2 185.8 748.0 182.2 762.8 177.2 777.6 174.8 792.4 173.5 817.0 175.5M716.0 188.3 720.9 198.2 724.6 206.0M6.0 257.2 30.6 255.8 50.3 254.0 65.1 250.3 79.9 245.4 94.7 240.5 111.9 234.3 129.2 228.2 144.0 225.2 160.0 224.5M160.7 222.8 168.6 221.3 174.8 223.2 175.5 229.4 171.1 231.9 161.2 231.1 160.7 222.8M175.5 223.2 185.8 217.1 195.7 210.9 204.3 206.0M145.2 206.0 148.9 213.4 152.6 220.8 160.0 224.5M163.7 231.1 166.1 243.0 168.6 255.3 169.8 267.6 172.3 279.9 173.5 292.2 171.6 304.5 173.5 316.9 176.0 329.2 177.2 341.5 179.7 353.8 182.9 366.1 183.9 378.5 182.2 390.8 176.0 406.0M398.0 206.0 397.2 220.8 396.7 238.0 393.8 250.3 394.7 262.7 396.7 277.4 395.5 292.2 396.2 304.5 398.7 316.9 400.4 329.2 401.6 341.5 402.9 353.8 404.1 363.7 405.3 371.1M410.3 368.6 418.9 356.3 428.7 348.9 443.5 336.6 453.4 330.4 463.2 316.9 473.1 302.1 480.5 289.8 487.9 277.4 495.3 262.7 497.7 252.8 502.7 240.5 512.5 235.6 522.4 238.0M467.9 206.0 475.6 213.4 480.5 223.2 485.4 230.6 497.7 236.8 505.1 239.3 512.5 235.6M522.4 238.0 529.8 230.6 539.6 223.2 546.0 220.8M522.4 238.0 532.2 245.4 537.1 255.3 540.8 270.1 543.3 284.8 546.0 292.2M405.3 369.8 410.3 368.6 423.8 364.9 443.5 362.4 463.2 363.7 480.5 362.4 497.7 358.7 512.5 355.8 529.8 353.3 546.0 351.4M405.3 371.1 396.7 378.5 386.9 388.3 374.5 396.9 357.3 400.6 340.1 406.0M405.3 371.1 404.6 383.4 404.1 393.2 406.6 406.0M384.4 389.5 394.3 384.6 404.1 380.9 414.0 376.0 418.9 368.6M543.3 290.0 546.6 295.5 551.1 301.1 555.5 305.5 556.6 312.2 558.3 317.7 563.3 319.9 567.7 321.6 569.9 325.5 572.1 329.9 576.6 335.4 578.8 337.6 580.4 343.2 582.7 346.5 582.7 352.0 582.1 356.5 581.6 360.9M584.3 293.9 582.1 298.9 578.2 303.3 574.9 308.8 572.7 315.5 571.0 322.1 569.9 325.5M578.8 337.6 582.1 334.9 587.6 334.3 593.2 335.4 594.3 342.1 594.8 348.7 594.3 353.2 589.9 355.4 586.5 357.0 582.7 360.9 578.2 360.4 575.5 356.5 574.9 350.9 575.5 345.4 576.6 341.0 578.8 337.6M582.7 346.5 586.5 342.1 591.0 338.8 593.2 335.4 597.6 334.3 602.0 332.1 606.5 327.7 609.8 323.2 617.6 321.0 624.2 318.8 632.0 316.0 637.5 313.3 643.0 309.4 648.6 306.6 654.1 302.2 660.0 299.4 669.2 289.8M540.0 352.6 545.5 351.5 555.5 352.0 559.9 349.8 566.6 347.6 573.2 347.6 575.5 348.7 582.7 350.4 588.8 351.5 594.8 352.6 599.8 353.7 606.5 353.7 610.9 357.6 616.5 360.9 624.2 362.0 635.3 362.0 643.0 364.2 650.8 366.5 660.0 366.5 664.3 366.1M581.6 360.9 576.6 363.1 573.2 366.5 567.7 369.8 563.3 374.2 557.7 380.0 555.8 390.8M582.1 360.9 586.5 364.2 591.0 366.5 594.3 370.9 597.6 376.4 600.4 380.0 602.7 388.3M586.5 357.0 589.9 360.9 591.0 366.5M669.2 289.8 684.0 282.4 698.7 277.4 713.5 272.5 728.3 265.1 743.1 255.3 755.4 245.4 767.7 238.0 782.5 230.6 797.3 225.7 817.0 219.6M664.3 366.1 684.0 367.4 703.7 369.8 723.4 372.3 743.1 373.5 757.9 371.1 772.7 363.7 787.4 353.8 799.8 344.0 817.0 334.1M602.7 388.3 610.1 403.1 611.5 406.0M555.9 390.8 548.5 406.0M725.8 206.0 735.7 215.9 748.0 228.2 757.9 240.5 762.8 255.3 767.7 270.1 777.6 284.8 792.4 297.2 817.0 314.4M546.0 220.8 550.9 213.4 555.9 206.0M6.0 460.7 25.7 462.7 45.4 465.1 65.1 468.8 79.9 473.8 92.2 476.2 99.6 474.5 116.9 473.0 134.1 473.0 146.4 478.7 153.8 479.9 173.5 478.7 193.2 476.2 215.4 476.2 237.6 475.0 257.3 473.8 276.0 468.8M176.0 406.0 168.6 415.9 162.4 430.6 161.2 445.4 156.3 462.7 151.4 477.4 146.4 487.3 140.3 499.6 135.3 514.4 132.1 534.1 130.4 553.8 129.2 578.5 126.7 606.0M146.4 478.7 147.7 472.5 153.8 468.8 156.3 472.5 153.8 479.9M257.3 473.8 252.4 482.4 248.7 494.7 242.5 507.0 236.4 516.9 236.4 526.7 229.0 534.1 222.8 541.5 216.6 551.4 215.4 563.7 215.9 576.0 212.9 588.3 208.0 600.6 204.3 606.0M406.6 406.0 410.3 413.4 415.2 423.2 421.4 435.6 426.3 447.9 431.2 459.0 437.4 467.6 439.1 472.0M439.1 472.0 448.5 473.0 460.8 471.3 473.1 465.1 487.9 461.4 500.2 455.3 510.0 447.9 517.4 438.0 524.8 428.2 532.2 418.3 542.1 409.7 546.0 406.0M439.1 472.0 436.1 482.4 430.0 494.7 421.4 509.5 412.7 526.7 401.6 541.5 391.8 553.8 379.5 566.1 367.2 576.0 352.4 585.8 335.1 595.7 322.8 600.6 310.5 606.0M340.5 406.0 332.7 415.9 320.3 428.2 305.6 443.0 293.2 455.3 283.4 465.1 276.0 467.6M611.5 406.0 619.9 413.4 627.3 422.0 632.2 430.6 633.5 436.8M627.3 422.0 637.2 428.2 638.4 431.9 633.5 436.8M633.5 436.8 631.0 450.3 629.8 467.6 630.3 484.8 629.8 499.6 632.2 514.4 637.2 526.7 644.5 540.3 648.2 553.8 651.9 573.5 655.6 588.3 660.6 606.0M638.4 429.4 644.5 435.6 649.5 443.0 661.8 450.3 679.0 457.7 693.8 462.7 713.5 466.4 733.2 468.8 755.4 472.5 772.7 478.7 787.4 483.6 799.8 487.3 817.0 495.9M817.0 524.3 805.9 536.6 802.2 544.0 801.0 558.7 794.8 573.5 788.7 585.8 785.0 598.2 784.5 606.0M6.0 618.3 10.9 623.2 13.4 633.1 14.6 647.9 15.9 661.4M6.0 661.4 15.9 660.7 30.6 655.3 47.9 649.1 67.6 643.4 87.3 644.2 104.5 641.7 124.3 640.5 144.0 643.0 163.7 649.1 178.5 655.3 188.3 656.5 203.1 654.0 217.9 650.3 232.7 645.4 247.4 643.0 262.2 644.2 276.0 643.0M126.7 606.0 126.2 620.8 128.0 635.6 131.6 645.4 134.1 655.3 132.9 665.1 132.1 673.8M87.3 644.2 91.0 655.3 97.2 665.1 109.5 671.3 121.8 672.5 132.1 673.8 144.0 679.9 153.8 683.6 160.0 686.1 166.1 679.9 176.0 672.5 182.2 665.1 184.6 655.3 187.1 649.1 193.2 640.5 196.9 628.2 200.6 615.9 204.3 606.0M276.0 642.5 285.9 640.5 295.7 635.6 304.3 628.2 305.6 620.8 313.0 622.8 325.3 624.5 340.1 626.9 349.9 630.6 362.2 636.8 374.5 638.0 384.4 634.3 394.3 626.9 404.1 622.0 418.9 618.3 443.5 616.3 458.3 621.3 473.1 617.1 480.5 615.9 497.7 616.3 515.0 615.9 532.2 622.0 546.0 626.9M305.6 620.8 306.8 613.4 309.3 606.0M546.0 627.7 560.8 631.9 578.0 638.0 595.3 639.3 612.5 640.5 632.2 644.2 649.5 645.4 669.2 650.3 684.0 652.8 698.7 656.5 713.5 661.4 728.3 660.7 743.1 661.4 757.9 658.2 772.7 656.5 780.0 655.3M660.6 606.0 666.7 615.9 674.1 626.9 684.0 638.0 693.8 647.9 703.7 657.7 711.1 667.6 717.2 679.9 720.9 692.2 723.4 704.5 729.5 714.4 738.2 724.3 743.1 736.6 746.8 748.9 748.0 763.7 751.7 778.5 754.9 790.8 755.4 806.0M783.7 606.0 786.2 615.9 787.4 630.6 783.7 643.0 778.8 650.3 780.0 661.4 789.9 665.1 797.3 672.5 802.2 682.4 807.1 692.2M778.8 646.7 786.2 643.0 789.9 650.3 788.7 660.2 782.5 665.1 778.8 659.0 778.8 646.7" fill="none" stroke="#826e0c" stroke-width="1" shape-rendering="crispEdges"/>
<path d="M6.0 105.3 155.1 105.3 156.3 111.9 160.7 114.4 160.7 121.8 156.8 126.7 151.4 131.6 145.2 140.3 137.8 149.4 187.1 149.4M201.9 6.0 201.5 7.7 205.0 10.6 203.5 11.0 202.6 15.8 202.7 16.0 206.2 17.9 208.1 19.4 207.8 21.0 207.1 24.1 207.1 26.1 207.5 27.5 206.1 29.1 204.6 31.0 204.3 32.1 204.3 33.6 202.8 37.6 203.0 39.9 203.8 40.2 207.3 42.3 211.9 43.2 210.7 43.6 210.6 47.6 208.6 51.2 210.7 50.7 213.8 53.8 213.5 54.1 213.9 58.0 215.2 58.5 218.2 58.3 219.6 57.5 221.5 57.2 223.4 57.8 225.8 58.1 227.0 60.2 227.6 63.8 229.1 63.1 232.0 65.5 234.6 67.1 233.6 68.2 231.1 71.5 228.5 73.9 226.4 73.5 227.2 75.0 228.7 78.9 229.8 81.5 231.1 82.1 229.2 84.0 226.7 86.8 226.0 88.5 225.6 90.1 225.6 93.1 225.0 94.9 224.1 96.6 221.9 97.5 221.5 97.1 217.6 98.3 217.3 97.8 215.8 92.8 216.1 91.9 214.1 95.7 214.3 95.0 209.9 97.4 210.9 98.2 212.1 103.5 211.9 104.0 208.3 104.8 206.5 103.4 205.5 104.2 203.7 102.4 202.5 100.9 203.0 99.1 200.8 98.5 198.3 99.7 197.0 101.8 198.9 103.6 201.2 106.1 204.1 107.4 204.7 108.3 201.1 111.8 198.6 112.3 199.1 113.0 198.8 118.6 199.8 118.0 194.4 120.6 193.5 121.6 198.4 123.8 199.9 123.9 197.6 126.6 197.1 126.8 195.4 129.9 194.3 129.1 191.4 128.1 189.7 128.5 189.9 131.9 192.1 132.9 193.2 133.3 193.3 137.0 193.5 139.0 192.9 138.5 193.4 140.8 193.7 145.6 193.3 146.7 192.8 146.3 189.8 148.1 185.8 151.2 186.2 152.6 188.3 154.1 192.4 156.2 192.9 156.9 190.7 159.2 188.7 160.9 187.5 161.7 185.7 163.7 184.9 164.9 182.3 166.4 182.1 167.7 180.4 170.5 178.8 169.9 174.6 168.0 174.2 170.2 175.2 175.4 173.8 173.8 170.1 177.9 167.9 179.5 172.4 179.0 176.8 181.0 178.2 181.3 175.2 183.5 172.7 185.8 170.5 186.4 169.0 186.9 169.1 189.6 170.1 192.6 168.6 193.1 166.2 193.8 162.6 194.1 161.9 195.3 161.5 197.1 160.6 201.8 160.0 201.5 156.7 201.1 151.4 201.1 154.4 203.3 158.9 200.1 158.8 203.1 160.1 205.1 162.4 206.0 162.4 206.0M208.0 104.5 264.7 104.5 276.0 105.3M225.3 59.0 226.2 57.1 226.9 54.7 227.3 52.5 228.4 51.1 230.2 49.3 231.4 48.0 232.1 45.9 233.1 43.6 235.2 42.7 237.4 42.5 238.8 39.9 239.9 38.5 243.3 40.0 243.7 41.2 247.5 40.4 249.0 39.8 250.7 42.9 252.6 44.6 254.1 44.7 257.4 44.5 259.3 45.1 261.1 45.8 263.2 47.2 265.0 48.5 266.6 49.3 268.2 50.2 270.8 50.8 273.0 51.4 274.2 52.6 276.0 54.0 276.0 54.0M276.0 105.3 311.7 105.3 312.5 99.6 310.5 93.5 309.3 89.3 325.3 92.2 354.8 91.7 404.1 90.5 421.4 91.5 448.5 92.2 482.9 94.2 529.8 93.2 546.0 94.2M276.0 54.0 277.7 53.0 280.8 52.2 281.8 51.8 281.5 47.5 281.0 47.0 282.9 44.6 282.6 41.4 282.1 40.6 279.5 39.0 276.8 36.8 276.8 35.1 276.6 33.2 277.9 31.0 280.0 29.5 280.9 28.2 282.0 26.4 283.5 24.3 285.3 23.2 287.2 22.9 290.0 22.4 292.2 22.9 293.4 21.8 296.2 19.9 296.6 18.8 300.4 20.5 301.7 21.3 303.7 17.7 304.1 17.3 308.1 16.9 308.9 16.1 308.5 12.7 307.7 12.0 307.7 8.9 307.1 7.1 304.3 6.0 304.3 6.0M546.0 95.2 573.1 96.7 635.9 97.2 649.5 95.9 718.5 96.7 767.7 94.7 787.4 94.2 805.9 98.4 817.0 99.6M635.9 96.7 637.4 95.2 639.9 94.9 640.7 91.6 643.7 92.0 644.8 90.9 646.3 89.4 648.7 89.1 650.5 88.6 652.6 87.6 654.5 86.8 656.6 86.6 659.0 86.9 660.7 86.0 662.6 83.9 665.2 84.8 666.6 85.0 668.9 83.0 671.5 84.1 673.3 82.9 675.6 83.0 676.6 81.1 677.5 79.5 679.5 78.3 680.4 76.0 681.2 74.6 684.5 74.2 686.2 74.4 687.6 71.7 689.2 70.4 691.2 70.4 693.6 69.8 695.1 69.0 695.5 66.6 696.9 64.6 697.1 62.2 698.6 60.8 700.4 59.6 702.3 58.8 704.4 58.4 705.2 56.1 707.8 54.4 707.7 52.7 708.0 49.7 709.4 48.7 711.8 48.1 713.5 47.6 715.6 46.2 716.9 45.2 719.9 45.2 721.0 45.1 722.7 42.2 725.5 42.8 726.6 41.6 727.9 40.3 730.1 39.9 731.8 38.3 734.2 37.9 735.9 36.5 737.4 35.5 740.2 35.0 741.5 34.4 742.7 31.1 743.4 30.2 746.6 29.1 747.8 28.3 749.0 25.7 750.0 24.3 752.5 23.3 753.8 21.7 755.3 20.4 757.1 19.4 758.1 17.4 760.8 17.0 760.9 14.7 762.1 13.3 760.9 12.2 757.6 12.6 756.4 11.6 754.2 10.4 752.6 9.6 750.3 8.6 748.6 7.3 746.8 6.0 746.8 6.0M762.8 14.6 763.1 16.6 764.0 18.8 764.4 20.4 765.1 22.7 764.9 25.2 766.3 26.2 769.0 27.8 769.4 29.0 770.4 31.7 774.2 31.6 775.0 33.4 776.2 35.0 778.0 36.3 779.1 38.6 781.3 39.5 782.7 40.3 784.6 42.0 786.3 42.1 788.8 41.3 789.7 40.6 793.2 41.6 794.5 41.5 796.3 39.9 798.2 37.6 799.5 37.2 802.6 36.9 803.9 35.7 805.9 33.9 807.9 33.6 809.9 33.4 811.8 31.6 814.3 31.9 816.0 30.9 817.0 30.6M787.4 94.2 786.5 96.3 785.8 97.9 783.2 100.0 782.9 101.1 784.8 104.8 784.5 105.7 782.1 107.5 782.1 109.8 780.7 111.1 780.3 112.9 781.3 115.0 781.5 117.0 783.0 119.5 780.0 117.7 778.2 117.8 776.6 118.4 773.7 117.3 772.2 117.4 770.5 120.2 769.3 121.7 767.1 122.7 766.1 124.4 765.5 126.5 764.9 128.3 763.0 130.1 763.1 132.6 761.9 134.1 761.2 135.7 760.9 137.8 758.2 136.9 756.1 139.4 753.8 138.4 752.3 138.2 749.9 137.9 748.4 137.0 746.4 135.7 744.6 135.0 742.7 135.9 740.7 137.8 739.0 137.1 736.0 136.3 734.8 139.0 734.0 140.1 731.3 140.3 730.4 142.9 728.0 143.7 727.4 146.1 725.5 147.6 724.6 149.6 724.1 151.8 720.9 151.4 720.2 151.3 717.2 151.9 716.7 150.6 716.6 147.0 715.6 145.5 712.8 145.1 711.3 144.2 709.2 145.1 707.8 146.7 706.4 148.1 704.4 148.8 703.8 151.3 700.8 151.1 699.8 154.6 697.5 154.1 695.7 153.7 694.1 155.8 694.2 157.0 693.2 159.3 693.1 160.9 691.6 162.6 690.2 164.0 688.0 164.8 686.2 165.4 684.2 167.7 682.9 168.1 680.2 167.2 678.8 170.3 675.7 169.4 674.8 172.4 672.2 172.7 670.7 174.4 669.0 175.5 666.8 176.3 665.1 178.0 664.1 179.7 661.8 180.6 659.1 180.7 658.6 183.0 657.3 185.8 655.2 185.5 652.8 185.8 651.2 187.7 649.6 188.5 647.4 187.8 645.2 188.1 643.1 187.0 640.8 188.3 638.1 186.4 636.5 188.0 635.2 189.4 631.8 187.9 630.6 187.9 628.2 189.8 626.5 190.3 624.3 190.7 622.3 191.1 620.4 192.0 618.8 193.4 616.2 194.0 615.1 195.5 614.1 197.2 611.5 198.1 613.0 201.1 610.8 202.9 610.9 205.2 610.5 206.0M142.7 238.0 276.0 238.5M161.9 205.5 160.0 207.1 159.5 208.5 156.5 208.1 153.8 209.3 153.1 210.3 154.0 212.5 155.6 214.6 157.6 215.6 159.0 216.1 160.5 217.5 158.9 221.3 157.6 222.4 159.0 222.4 157.5 224.3 156.5 229.4 156.3 228.9 153.7 229.1 148.1 229.3 149.0 229.2 147.8 233.9 148.6 236.6 144.7 235.6 141.6 237.0 144.1 238.9 146.1 239.7 146.3 242.8 146.7 243.7 147.8 246.6 147.5 248.1 144.5 249.4 142.9 248.8 141.3 250.8 138.7 254.3 137.9 255.3 135.8 253.5 133.5 248.8 134.6 245.0 133.3 246.2 130.7 250.7 131.4 253.1 133.8 253.5 132.7 254.9 128.3 255.7 126.5 255.5 125.7 256.3 125.5 259.7 125.1 261.5 126.1 262.2 127.0 265.1 128.2 265.6 132.9 266.8 131.4 267.6 126.9 268.2 127.6 269.2 126.0 272.1 125.0 269.6 120.6 272.2 120.9 272.7 126.9 277.0 127.8 276.3 123.1 280.2 121.3 280.8 121.2 281.5 122.6 285.2 124.4 287.3 124.3 288.4 123.1 290.2 120.3 290.8 118.6 290.9 117.3 291.9 115.0 293.5 113.6 295.5 114.9 295.2 114.5 296.4 113.8 299.8 112.0 298.0 112.8 297.9 109.7 303.2 110.7 304.3 105.4 301.4 103.9 300.6 102.6 305.5 102.7 305.3 99.4 307.5 100.7 307.3 104.8 309.0 105.1 310.1 103.8 313.3 103.3 314.0 101.8 315.7 100.6 316.2 100.9 317.4 99.4 319.8 98.4 320.7 97.6 320.9 96.8 326.3 95.5 328.8 95.1 328.3 92.6 328.2 86.9 326.3 84.0 326.2 83.2 327.4 86.0 330.5 90.6 331.9 91.6 332.0 89.0 334.6 86.7 337.4 87.0 338.4 89.2 341.0 90.5 342.0 90.3 345.2 90.7 345.9 91.5 349.0 90.3 348.8 85.8 345.5 85.2 345.8 84.4 351.2 82.8 349.2 80.5 354.2 81.5 354.0 86.4 354.2 90.9 353.6 92.6 353.8 87.8 355.7 84.7 355.8 84.5 355.0 83.0 355.2 80.1 355.3 78.3 354.6 77.5 355.6 75.5 356.1 75.6 358.3 76.4 360.0 77.4 360.5 77.5 363.1 78.3 365.9 77.0 365.3 74.3 369.2 72.4 370.6 76.1 372.8 79.8 371.0 79.4 376.4 79.0 379.2 84.6 375.2 85.8 373.1 84.7 378.4 83.8 377.7 85.1 381.6 83.8 382.4 81.3 382.9 79.1 384.5 79.8 386.2 80.5 388.7 82.4 390.5 84.2 390.2 85.3 391.5 87.1 394.2 83.3 396.1 82.7 395.5 85.1 399.2 85.9 404.3 87.5 405.4 82.3 404.2 78.8 404.7 77.4 406.0 77.4 406.0M276.0 238.5 299.4 237.5 399.2 238.0 446.0 238.8 470.6 238.0 546.0 238.8M299.4 237.5 301.9 243.0 307.5 247.9 306.8 255.3 303.1 304.5 299.4 344.0 295.2 378.5 291.3 406.0M492.8 238.8 496.5 255.3 499.0 270.1 502.7 292.2 506.4 311.9 510.0 334.1 513.0 353.8 516.2 373.5 518.7 390.8 521.1 406.0M546.0 238.8 587.9 239.3 679.0 240.0M610.5 206.0 610.1 208.2 609.5 210.1 608.6 211.9 607.2 213.4 605.0 214.0 603.4 215.7 601.5 215.6 599.8 215.1 598.0 216.0 594.8 214.5 593.6 215.7 592.1 217.7 591.7 219.1 590.4 221.2 590.4 222.9 590.5 225.3 590.3 227.1 589.5 229.3 589.0 230.8 589.9 233.7 588.8 235.3 588.4 237.0 588.4 239.3 588.4 239.3M679.0 240.0 686.4 233.1 698.7 230.6 713.5 228.2 723.4 225.7 730.8 220.8 740.6 219.6 743.1 220.3 817.0 223.2M679.0 240.0 677.6 241.4 676.6 243.9 674.5 244.7 672.9 245.7 671.9 248.2 669.9 249.2 668.8 251.1 666.9 252.3 665.7 253.8 664.7 255.2 662.0 256.2 661.7 259.4 661.3 260.3 659.1 262.9 659.9 264.4 662.3 266.3 663.6 267.4 665.1 269.2 666.5 270.6 668.7 271.8 670.0 273.0 670.9 275.0 674.0 275.0 674.5 278.2 677.4 278.1 678.2 280.9 680.2 281.1 681.7 281.8 683.8 283.5 685.6 283.3 687.9 283.3 689.7 283.5 691.9 284.4 693.2 284.9 695.4 286.1 696.7 287.2 696.5 290.9 697.1 291.9 699.9 293.2 699.8 296.0 701.3 297.2 702.1 299.0 703.0 300.8 704.2 302.4 704.6 304.7 706.2 306.7 706.7 308.2 706.2 311.8 707.3 312.7 710.6 314.2 710.9 315.3 712.1 318.2 713.0 319.4 715.0 321.2 716.0 322.9 716.9 325.0 718.9 326.6 719.4 328.9 721.2 330.0 722.3 331.5 723.6 333.0 725.8 333.5 727.0 336.7 729.6 337.0 731.2 337.9 732.9 339.9 734.6 341.0 736.5 342.4 738.1 343.8 739.2 346.1 739.8 347.8 742.7 349.5 742.8 351.5 743.2 353.3 745.5 354.5 745.6 357.3 747.8 358.6 748.8 360.9 750.8 362.3 752.3 363.3 753.8 364.9 756.1 365.2 758.6 365.3 759.0 368.0 759.6 370.6 761.2 371.6 763.5 373.2 764.1 375.0 764.9 376.9 766.7 378.5 766.2 380.5 765.6 382.5 765.8 384.4 765.3 386.6 768.5 386.8 769.5 389.6 771.0 389.8 773.4 390.2 774.5 393.0 775.4 394.4 777.7 395.8 779.1 397.3 780.0 399.4 780.9 401.5 782.6 403.1 784.2 404.9 785.0 406.0M6.0 415.4 79.9 415.4M77.4 406.0 78.7 408.2 80.6 409.1 84.8 410.6 82.2 412.5 77.7 415.0 78.4 414.2 79.3 420.0 80.1 421.6 78.8 420.1 78.0 423.9 78.7 428.6 79.8 426.6 82.1 424.5 85.5 423.1 86.4 424.8 86.2 427.0 85.9 429.5 84.7 431.7 83.0 432.3 82.7 434.2 81.7 437.5 82.3 438.2 80.0 440.0 78.5 443.4 79.1 444.0 85.0 445.8 84.1 446.1 82.5 452.6 85.5 451.8 88.3 449.6 89.5 452.0 88.4 451.2 90.2 452.7 90.5 455.4 88.2 455.8 85.3 457.2 83.6 457.8 83.7 459.7 85.6 462.2 86.4 463.4 87.2 463.9 89.3 466.1 91.2 468.3 91.7 467.6 92.3 468.9 96.9 470.1 98.4 469.6 98.0 469.3 100.3 471.1 97.6 474.5 98.0 472.4 98.6 477.1 99.2 479.9 95.4 478.5 92.1 478.4 92.1 480.9 92.1 483.5 90.9 484.8 88.7 485.1 87.0 487.4 85.7 488.3 82.4 487.8 80.0 486.6 79.4 488.8 81.6 492.7 80.5 491.1 80.7 494.3 83.8 498.0 84.3 500.0 86.0 495.0 89.2 491.1 90.1 488.8 91.9 489.9 89.9 494.1 88.5 496.2 88.0 496.8 86.9 498.2 86.0 500.7 85.7 502.3 86.4 503.7 85.8 505.9 83.1 506.2 82.5 506.8 81.0 510.8 80.8 510.6 75.1 511.0 76.2 512.5 76.0 518.1 71.5 515.7 68.6 514.1 69.1 520.5 69.7 521.5 66.4 522.1 62.8 524.2 62.7 525.2 65.6 526.9 67.8 525.9 68.5 527.1 71.2 527.8 71.6 525.7 70.8 523.1 69.7 523.4 67.8 526.0 67.7 528.9 67.4 529.5 64.6 530.9 61.7 533.8 60.5 532.7 61.9 535.7 59.5 540.4 60.7 540.2 53.8 539.2 54.0 541.1 56.8 542.3 61.2 543.3 60.2 545.7 59.1 548.0 61.5 550.5 60.8 551.7 57.9 553.3 56.5 553.8 55.2 556.8 54.2 558.2 51.3 557.8 47.4 558.7 47.3 559.7 49.3 562.9 52.7 560.6 53.1 559.0 53.3 557.7 55.0 561.4 50.7 564.3 51.7 563.5 52.6 565.9 51.7 570.3 50.8 571.8 48.7 570.5 45.1 571.3 44.5 573.1 45.7 574.8 46.8 577.8 47.3 579.3 44.7 581.7 42.6 583.3 47.2 585.3 49.0 585.0 46.7 589.8 46.5 588.8 48.7 593.3 46.4 593.5 45.4 594.5M45.4 594.5 185.8 594.5 184.6 600.6 182.9 606.0M291.3 406.0 288.3 430.6 285.4 455.3 282.9 479.9 280.9 504.5 279.7 529.2 280.9 553.8 282.2 578.5 283.9 606.0M521.1 406.0 521.1 408.2 522.0 410.1 523.6 411.9 522.7 414.1 522.6 416.7 523.1 418.1 524.4 420.4 524.9 422.2 525.1 424.1 525.4 426.4 525.8 428.1 527.0 430.3 527.4 431.7 526.7 434.6 527.8 436.4 528.6 437.9 527.3 440.4 529.8 442.7 528.7 445.2 529.4 446.8 530.6 448.5 531.0 450.7 531.8 452.4 532.9 454.2 534.1 455.8 534.7 457.6 535.4 459.9 535.7 461.5 537.5 463.1 539.2 464.9 539.8 466.1 538.8 469.1 538.0 470.0 538.9 473.0 538.3 474.3 537.0 476.5 538.4 477.9 539.8 478.9 541.4 479.9 543.6 480.5 545.0 482.2 545.1 482.7 544.0 484.7 542.3 485.5 539.6 486.2 538.7 487.4 537.9 490.9 536.8 491.7 534.5 493.6 533.9 495.3 534.1 497.4 534.2 499.7 533.9 501.4 533.3 503.7 533.2 505.4 533.8 507.7 532.3 510.0 532.7 511.7 533.3 513.4 531.4 515.6 533.0 518.4 532.0 519.8 530.8 521.8 531.6 524.2 531.8 526.1 531.0 528.1 531.0 530.3 531.5 532.1 532.5 534.2 533.2 535.9 533.5 537.8 532.8 540.6 533.2 542.0 535.3 544.8 534.7 546.5 533.8 548.6 534.7 551.3 533.5 552.9 533.0 554.6 533.0 556.8 532.0 558.8 531.9 560.9 531.8 562.9 530.7 565.3 530.5 566.8 530.9 569.8 531.1 571.1 529.6 573.7 529.5 575.9 530.8 577.2 532.5 579.6 533.2 581.0 533.3 583.6 533.8 585.4 535.0 587.5 535.6 589.3 535.8 591.5 537.4 593.5 537.5 595.7 538.2 597.2 540.0 598.5 539.5 601.9 540.8 603.1 542.6 604.9 543.3 606.0M537.1 594.5 345.0 594.5 342.5 600.6 341.3 606.0M785.0 406.0 787.0 406.8 788.6 409.2 790.3 409.7 792.8 410.5 794.0 412.6 795.4 414.4 797.3 415.8 798.1 417.9 798.1 419.9 797.6 422.5 799.5 424.3 800.7 425.2 800.5 428.1 803.9 429.2 802.8 432.0 804.3 433.9 803.9 436.3 804.6 438.4 804.9 440.3 805.4 442.7 806.6 444.4 807.1 445.4M182.9 606.0 181.9 607.9 180.4 609.7 179.4 611.3 178.6 613.6 179.0 615.4 178.1 618.1 178.0 619.6 179.8 622.0 178.3 624.9 180.0 626.2 180.8 627.6 180.3 630.1 182.5 632.0 182.8 634.1 183.7 635.9 185.4 637.8 186.7 639.3 187.3 641.8 187.3 643.8 189.0 645.7 190.5 647.9 190.6 649.4 189.5 652.8 189.6 654.0 192.1 656.3 192.5 657.5 192.6 660.3 194.0 661.8 195.0 663.5 195.8 665.6 196.9 667.6 196.9 667.6M283.9 606.0 284.6 630.6 285.4 651.6M341.3 606.0 342.8 607.6 344.1 609.1 345.0 611.0 346.8 612.2 347.6 614.5 349.6 616.1 350.5 618.1 351.4 620.0 353.5 621.2 355.3 621.8 356.8 623.4 357.8 625.2 358.2 626.4 360.1 629.0 359.6 630.5 357.3 632.3 357.1 634.8 356.1 636.7 356.7 638.8 356.9 640.9 357.2 643.0 358.9 644.2 360.1 646.0 361.0 646.7M546.0 620.3 595.3 623.2 644.5 626.2 693.8 629.4 743.1 632.4 744.3 638.0 746.8 647.9 751.7 651.6 757.9 650.3 759.1 638.0 757.9 625.7 757.4 615.9 764.0 609.7 770.2 610.9 777.6 614.6 786.2 617.1 794.8 615.9 802.2 618.3 807.1 619.6M539.5 600.1 542.5 606.0 546.4 617.8 547.4 620.2" fill="none" stroke="#000" stroke-width="1" stroke-linejoin="round" shape-rendering="crispEdges"/>
<path d="M299.4 59.0 303.1 56.5 308.0 55.3 313.0 59.0 315.4 65.1 319.1 71.3 323.3 72.0 321.6 76.2 319.1 79.9 320.3 84.8 324.0 91.0 322.8 95.9 320.3 91.0 316.7 87.3 315.4 79.9 314.9 73.8 311.7 68.8 309.3 62.7 305.6 61.4 301.9 63.9 299.4 61.4Z" fill="#2b4a6a"/>
<path d="M368.4 261.4 372.1 258.2 377.0 259.7 381.9 263.9 388.1 266.4 393.0 270.1 395.5 273.8 396.2 277.0 391.8 275.0 386.9 271.3 380.7 267.6 374.5 264.6 370.9 263.2Z" fill="#2b4a6a"/>
<path d="M439.1 376.0 440.6 371.6 443.5 368.6 446.0 365.6 448.0 363.2 451.4 364.9 449.7 368.6 446.5 371.1 444.8 374.8 441.6 377.2Z" fill="#2b4a6a"/>
<path d="M612.6 293.3 614.2 290.0 617.6 290.0 616.5 292.2 619.8 291.7 621.4 290.0 624.2 290.6 623.1 293.3 627.5 293.9 625.3 296.1 622.5 297.8 622.0 300.5 619.8 303.3 617.6 304.4 616.5 306.6 615.3 309.9 612.0 310.5 610.4 313.3 607.6 313.3 606.5 310.5 604.8 308.8 604.3 306.6 606.5 306.6 608.1 308.3 609.8 306.6 609.3 304.4 612.0 303.9 613.1 301.1 612.6 297.8Z" fill="#2b4a6a"/>
<path d="M423.8 413.4 426.3 415.9 427.5 422.0 430.0 426.9 431.7 429.4 431.2 434.3 428.7 431.9 427.5 428.2 425.1 424.5 423.8 419.6Z" fill="#2b4a6a"/>
<path d="M526.7 502.6 528.7 505.6 530.7 507.6 533.6 500.7 534.6 503.6 532.6 509.5 529.7 515.4 528.7 519.4 529.7 524.3 532.6 527.3 536.6 525.3 533.6 529.2 531.7 532.2 534.6 534.2 533.6 538.1 530.7 537.1 528.7 533.2 525.8 531.2 527.7 528.2 526.7 524.3 525.8 519.4 527.7 513.5 529.7 509.5 527.7 506.6Z" fill="#2b4a6a"/>
<path d="M124.3 655.3 129.2 652.3 134.1 654.0 136.6 659.0 134.1 663.9 130.4 667.6 125.5 668.1 121.8 665.1 122.3 659.7Z" fill="#2b4a6a"/>
<path d="M145.2 697.2 148.9 694.7 153.3 697.2 153.8 703.3 151.4 707.0 147.7 708.2 145.2 713.2 141.5 711.9 140.3 707.0 144.0 704.5 146.4 700.9Z" fill="#2b4a6a"/>
<path d="M42.5 681.1 45.4 679.9 48.4 682.4 51.6 686.1 50.3 689.3 46.7 688.5 44.2 685.3Z" fill="#2b4a6a"/>
<path d="M57.2 691.0 59.0 684.8 61.4 688.5 63.2 694.7 66.4 699.6 70.5 702.6 76.2 703.3 79.9 704.5 84.3 705.8 84.3 710.0 79.9 709.5 75.0 707.5 68.8 707.0 63.9 704.5 60.7 699.6 58.2 695.2Z" fill="#2b4a6a"/>
<path d="M541.5 602.1 543.5 606.0 544.5 611.0 548.4 613.9 552.3 611.9 555.3 608.0 556.3 603.1 557.7 603.7 557.3 609.0 558.2 611.0 563.2 610.0 563.6 612.9 558.2 613.9 554.3 615.9 549.4 617.8 546.4 620.2 542.5 617.8 541.1 613.9 541.1 608.0Z" fill="#2b4a6a"/>
<path d="M784.5 729.2 788.7 734.1 792.4 740.3 796.1 746.4 794.8 753.8 789.9 753.8 786.9 746.4 785.0 739.0Z" fill="#2b4a6a"/>
<circle cx="407" cy="407.5" r="160" fill="none" stroke="#ececec" stroke-width="0.8" shape-rendering="crispEdges"/>
<circle cx="407" cy="407.5" r="280" fill="none" stroke="#ececec" stroke-width="0.8" shape-rendering="crispEdges"/>
<circle cx="407" cy="407.5" r="400" fill="none" stroke="#ececec" stroke-width="0.8" shape-rendering="crispEdges"/>
<circle cx="407" cy="407.5" r="520" fill="none" stroke="#ececec" stroke-width="0.8" shape-rendering="crispEdges"/>
<circle cx="407" cy="407.5" r="40" fill="none" stroke="#ff0000" stroke-width="1.1"/>
<rect x="395.0" y="3.3" width="22" height="9" fill="#5d4f4b"/>
<text x="406" y="11.3" text-anchor="middle" font-family="'Liberation Mono',monospace" font-weight="bold" font-size="9.8" letter-spacing="0.5" fill="#ffff96">313</text>
<rect x="395.0" y="123.2" width="22" height="9" fill="#5d4f4b"/>
<text x="406" y="131.2" text-anchor="middle" font-family="'Liberation Mono',monospace" font-weight="bold" font-size="9.8" letter-spacing="0.5" fill="#ffff96">219</text>
<rect x="395.0" y="243.2" width="22" height="9" fill="#5d4f4b"/>
<text x="406" y="251.2" text-anchor="middle" font-family="'Liberation Mono',monospace" font-weight="bold" font-size="9.8" letter-spacing="0.5" fill="#ffff96">125</text>
<rect x="398.5" y="363.2" width="15" height="9" fill="#5d4f4b"/>
<text x="406" y="371.2" text-anchor="middle" font-family="'Liberation Mono',monospace" font-weight="bold" font-size="9.8" letter-spacing="0.5" fill="#ffff96">31</text>
<g shape-rendering="crispEdges">
<path transform="translate(676 168)" d="M3 0h3v1h-3zM1 1h2v1h-1v1h-1zM6 1h2v2h-1v-1h-1zM0 3h1v3h-1zM8 3h1v3h-1zM1 6h1v1h1v1h-2zM7 6h1v2h-2v-1h1zM3 8h3v1h-3zM2 4h5v1h-5z" fill="#f57f0a"/>
<path transform="translate(655 181)" d="M3 0h3v1h-3zM1 1h2v1h-1v1h-1zM6 1h2v2h-1v-1h-1zM0 3h1v3h-1zM8 3h1v3h-1zM1 6h1v1h1v1h-2zM7 6h1v2h-2v-1h1zM3 8h3v1h-3zM2 4h5v1h-5z" fill="#fabc0a"/>
<path transform="translate(671 186)" d="M3 0h3v1h-3zM1 1h2v1h-1v1h-1zM6 1h2v2h-1v-1h-1zM0 3h1v3h-1zM8 3h1v3h-1zM1 6h1v1h1v1h-2zM7 6h1v2h-2v-1h1zM3 8h3v1h-3zM2 4h5v1h-5z" fill="#fabc0a"/>
<path transform="translate(679 183)" d="M3 0h3v1h-3zM1 1h2v1h-1v1h-1zM6 1h2v2h-1v-1h-1zM0 3h1v3h-1zM8 3h1v3h-1zM1 6h1v1h1v1h-2zM7 6h1v2h-2v-1h1zM3 8h3v1h-3zM2 4h5v1h-5zM4 2h1v5h-1z" fill="#fabc0a"/>
<path transform="translate(686 181)" d="M3 0h3v1h-3zM1 1h2v1h-1v1h-1zM6 1h2v2h-1v-1h-1zM0 3h1v3h-1zM8 3h1v3h-1zM1 6h1v1h1v1h-2zM7 6h1v2h-2v-1h1zM3 8h3v1h-3zM2 4h5v1h-5zM4 2h1v5h-1z" fill="#fabc0a"/>
<path transform="translate(634 205)" d="M3 0h3v1h-3zM1 1h2v1h-1v1h-1zM6 1h2v2h-1v-1h-1zM0 3h1v3h-1zM8 3h1v3h-1zM1 6h1v1h1v1h-2zM7 6h1v2h-2v-1h1zM3 8h3v1h-3zM2 4h5v1h-5z" fill="#fa960a"/>
<path transform="translate(672 202)" d="M3 0h3v1h-3zM1 1h2v1h-1v1h-1zM6 1h2v2h-1v-1h-1zM0 3h1v3h-1zM8 3h1v3h-1zM1 6h1v1h1v1h-2zM7 6h1v2h-2v-1h1zM3 8h3v1h-3zM2 4h5v1h-5z" fill="#fabc0a"/>
<path transform="translate(679 210)" d="M3 0h3v1h-3zM1 1h2v1h-1v1h-1zM6 1h2v2h-1v-1h-1zM0 3h1v3h-1zM8 3h1v3h-1zM1 6h1v1h1v1h-2zM7 6h1v2h-2v-1h1zM3 8h3v1h-3zM2 4h5v1h-5z" fill="#fabc0a"/>
<path transform="translate(690 210)" d="M3 0h3v1h-3zM1 1h2v1h-1v1h-1zM6 1h2v2h-1v-1h-1zM0 3h1v3h-1zM8 3h1v3h-1zM1 6h1v1h1v1h-2zM7 6h1v2h-2v-1h1zM3 8h3v1h-3zM2 4h5v1h-5z" fill="#fabc0a"/>
<path transform="translate(633 220)" d="M3 0h3v1h-3zM1 1h2v1h-1v1h-1zM6 1h2v2h-1v-1h-1zM0 3h1v3h-1zM8 3h1v3h-1zM1 6h1v1h1v1h-2zM7 6h1v2h-2v-1h1zM3 8h3v1h-3zM2 4h5v1h-5z" fill="#fa960a"/>
<path transform="translate(640 217)" d="M3 0h3v1h-3zM1 1h2v1h-1v1h-1zM6 1h2v2h-1v-1h-1zM0 3h1v3h-1zM8 3h1v3h-1zM1 6h1v1h1v1h-2zM7 6h1v2h-2v-1h1zM3 8h3v1h-3zM2 4h5v1h-5z" fill="#fabc0a"/>
<path transform="translate(648 218)" d="M3 0h3v1h-3zM1 1h2v1h-1v1h-1zM6 1h2v2h-1v-1h-1zM0 3h1v3h-1zM8 3h1v3h-1zM1 6h1v1h1v1h-2zM7 6h1v2h-2v-1h1zM3 8h3v1h-3zM2 4h5v1h-5z" fill="#fabc0a"/>
<path transform="translate(653 219)" d="M3 0h3v1h-3zM1 1h2v1h-1v1h-1zM6 1h2v2h-1v-1h-1zM0 3h1v3h-1zM8 3h1v3h-1zM1 6h1v1h1v1h-2zM7 6h1v2h-2v-1h1zM3 8h3v1h-3zM2 4h5v1h-5z" fill="#fabc0a"/>
<path transform="translate(659 215)" d="M3 0h3v1h-3zM1 1h2v1h-1v1h-1zM6 1h2v2h-1v-1h-1zM0 3h1v3h-1zM8 3h1v3h-1zM1 6h1v1h1v1h-2zM7 6h1v2h-2v-1h1zM3 8h3v1h-3zM2 4h5v1h-5z" fill="#f5620a"/>
<path transform="translate(662 221)" d="M3 0h3v1h-3zM1 1h2v1h-1v1h-1zM6 1h2v2h-1v-1h-1zM0 3h1v3h-1zM8 3h1v3h-1zM1 6h1v1h1v1h-2zM7 6h1v2h-2v-1h1zM3 8h3v1h-3zM2 4h5v1h-5z" fill="#f5620a"/>
<path transform="translate(675 225)" d="M3 0h3v1h-3zM1 1h2v1h-1v1h-1zM6 1h2v2h-1v-1h-1zM0 3h1v3h-1zM8 3h1v3h-1zM1 6h1v1h1v1h-2zM7 6h1v2h-2v-1h1zM3 8h3v1h-3zM2 4h5v1h-5z" fill="#fabc0a"/>
<path transform="translate(682 223)" d="M3 0h3v1h-3zM1 1h2v1h-1v1h-1zM6 1h2v2h-1v-1h-1zM0 3h1v3h-1zM8 3h1v3h-1zM1 6h1v1h1v1h-2zM7 6h1v2h-2v-1h1zM3 8h3v1h-3zM2 4h5v1h-5z" fill="#fabc0a"/>
<path transform="translate(677 229)" d="M3 0h3v1h-3zM1 1h2v1h-1v1h-1zM6 1h2v2h-1v-1h-1zM0 3h1v3h-1zM8 3h1v3h-1zM1 6h1v1h1v1h-2zM7 6h1v2h-2v-1h1zM3 8h3v1h-3zM2 4h5v1h-5z" fill="#fabc0a"/>
<path transform="translate(677 233)" d="M3 0h3v1h-3zM1 1h2v1h-1v1h-1zM6 1h2v2h-1v-1h-1zM0 3h1v3h-1zM8 3h1v3h-1zM1 6h1v1h1v1h-2zM7 6h1v2h-2v-1h1zM3 8h3v1h-3zM2 4h5v1h-5z" fill="#fabc0a"/>
<path transform="translate(688 232)" d="M3 0h3v1h-3zM1 1h2v1h-1v1h-1zM6 1h2v2h-1v-1h-1zM0 3h1v3h-1zM8 3h1v3h-1zM1 6h1v1h1v1h-2zM7 6h1v2h-2v-1h1zM3 8h3v1h-3zM2 4h5v1h-5z" fill="#fabc0a"/>
<path transform="translate(699 221)" d="M3 0h3v1h-3zM1 1h2v1h-1v1h-1zM6 1h2v2h-1v-1h-1zM0 3h1v3h-1zM8 3h1v3h-1zM1 6h1v1h1v1h-2zM7 6h1v2h-2v-1h1zM3 8h3v1h-3zM2 4h5v1h-5z" fill="#f5620a"/>
<path transform="translate(708 225)" d="M3 0h3v1h-3zM1 1h2v1h-1v1h-1zM6 1h2v2h-1v-1h-1zM0 3h1v3h-1zM8 3h1v3h-1zM1 6h1v1h1v1h-2zM7 6h1v2h-2v-1h1zM3 8h3v1h-3zM2 4h5v1h-5z" fill="#fad514"/>
<path transform="translate(715 222)" d="M3 0h3v1h-3zM1 1h2v1h-1v1h-1zM6 1h2v2h-1v-1h-1zM0 3h1v3h-1zM8 3h1v3h-1zM1 6h1v1h1v1h-2zM7 6h1v2h-2v-1h1zM3 8h3v1h-3zM2 4h5v1h-5z" fill="#fad514"/>
<path transform="translate(712 229)" d="M3 0h3v1h-3zM1 1h2v1h-1v1h-1zM6 1h2v2h-1v-1h-1zM0 3h1v3h-1zM8 3h1v3h-1zM1 6h1v1h1v1h-2zM7 6h1v2h-2v-1h1zM3 8h3v1h-3zM2 4h5v1h-5z" fill="#fabc0a"/>
<path transform="translate(711 230)" d="M3 0h3v1h-3zM1 1h2v1h-1v1h-1zM6 1h2v2h-1v-1h-1zM0 3h1v3h-1zM8 3h1v3h-1zM1 6h1v1h1v1h-2zM7 6h1v2h-2v-1h1zM3 8h3v1h-3zM2 4h5v1h-5z" fill="#fabc0a"/>
<path transform="translate(724 230)" d="M3 0h3v1h-3zM1 1h2v1h-1v1h-1zM6 1h2v2h-1v-1h-1zM0 3h1v3h-1zM8 3h1v3h-1zM1 6h1v1h1v1h-2zM7 6h1v2h-2v-1h1zM3 8h3v1h-3zM2 4h5v1h-5z" fill="#fabc0a"/>
<path transform="translate(726 233)" d="M3 0h3v1h-3zM1 1h2v1h-1v1h-1zM6 1h2v2h-1v-1h-1zM0 3h1v3h-1zM8 3h1v3h-1zM1 6h1v1h1v1h-2zM7 6h1v2h-2v-1h1zM3 8h3v1h-3zM2 4h5v1h-5z" fill="#fabc0a"/>
<path transform="translate(645 235)" d="M3 0h3v1h-3zM1 1h2v1h-1v1h-1zM6 1h2v2h-1v-1h-1zM0 3h1v3h-1zM8 3h1v3h-1zM1 6h1v1h1v1h-2zM7 6h1v2h-2v-1h1zM3 8h3v1h-3zM2 4h5v1h-5z" fill="#fa960a"/>
<path transform="translate(700 238)" d="M3 0h3v1h-3zM1 1h2v1h-1v1h-1zM6 1h2v2h-1v-1h-1zM0 3h1v3h-1zM8 3h1v3h-1zM1 6h1v1h1v1h-2zM7 6h1v2h-2v-1h1zM3 8h3v1h-3zM2 4h5v1h-5z" fill="#fabc0a"/>
<path transform="translate(707 241)" d="M3 0h3v1h-3zM1 1h2v1h-1v1h-1zM6 1h2v2h-1v-1h-1zM0 3h1v3h-1zM8 3h1v3h-1zM1 6h1v1h1v1h-2zM7 6h1v2h-2v-1h1zM3 8h3v1h-3zM2 4h5v1h-5z" fill="#fabc0a"/>
<path transform="translate(694 242)" d="M3 0h3v1h-3zM1 1h2v1h-1v1h-1zM6 1h2v2h-1v-1h-1zM0 3h1v3h-1zM8 3h1v3h-1zM1 6h1v1h1v1h-2zM7 6h1v2h-2v-1h1zM3 8h3v1h-3zM2 4h5v1h-5z" fill="#f5620a"/>
<path transform="translate(678 244)" d="M3 0h3v1h-3zM1 1h2v1h-1v1h-1zM6 1h2v2h-1v-1h-1zM0 3h1v3h-1zM8 3h1v3h-1zM1 6h1v1h1v1h-2zM7 6h1v2h-2v-1h1zM3 8h3v1h-3zM2 4h5v1h-5z" fill="#fabc0a"/>
<path transform="translate(685 250)" d="M3 0h3v1h-3zM1 1h2v1h-1v1h-1zM6 1h2v2h-1v-1h-1zM0 3h1v3h-1zM8 3h1v3h-1zM1 6h1v1h1v1h-2zM7 6h1v2h-2v-1h1zM3 8h3v1h-3zM2 4h5v1h-5z" fill="#f5620a"/>
<path transform="translate(720 247)" d="M3 0h3v1h-3zM1 1h2v1h-1v1h-1zM6 1h2v2h-1v-1h-1zM0 3h1v3h-1zM8 3h1v3h-1zM1 6h1v1h1v1h-2zM7 6h1v2h-2v-1h1zM3 8h3v1h-3zM2 4h5v1h-5z" fill="#fad514"/>
<path transform="translate(735 252)" d="M3 0h3v1h-3zM1 1h2v1h-1v1h-1zM6 1h2v2h-1v-1h-1zM0 3h1v3h-1zM8 3h1v3h-1zM1 6h1v1h1v1h-2zM7 6h1v2h-2v-1h1zM3 8h3v1h-3zM2 4h5v1h-5z" fill="#fabc0a"/>
<path transform="translate(666 243)" d="M3 0h3v1h-3zM1 1h2v1h-1v1h-1zM6 1h2v2h-1v-1h-1zM0 3h1v3h-1zM8 3h1v3h-1zM1 6h1v1h1v1h-2zM7 6h1v2h-2v-1h1zM3 8h3v1h-3zM2 4h5v1h-5z" fill="#fabc0a"/>
<path transform="translate(664 243)" d="M3 0h3v1h-3zM1 1h2v1h-1v1h-1zM6 1h2v2h-1v-1h-1zM0 3h1v3h-1zM8 3h1v3h-1zM1 6h1v1h1v1h-2zM7 6h1v2h-2v-1h1zM3 8h3v1h-3zM2 4h5v1h-5z" fill="#fa960a"/>
<path transform="translate(653 243)" d="M3 0h3v1h-3zM1 1h2v1h-1v1h-1zM6 1h2v2h-1v-1h-1zM0 3h1v3h-1zM8 3h1v3h-1zM1 6h1v1h1v1h-2zM7 6h1v2h-2v-1h1zM3 8h3v1h-3zM2 4h5v1h-5z" fill="#fa960a"/>
<path transform="translate(658 245)" d="M3 0h3v1h-3zM1 1h2v1h-1v1h-1zM6 1h2v2h-1v-1h-1zM0 3h1v3h-1zM8 3h1v3h-1zM1 6h1v1h1v1h-2zM7 6h1v2h-2v-1h1zM3 8h3v1h-3zM2 4h5v1h-5z" fill="#fabc0a"/>
<path transform="translate(650 249)" d="M3 0h3v1h-3zM1 1h2v1h-1v1h-1zM6 1h2v2h-1v-1h-1zM0 3h1v3h-1zM8 3h1v3h-1zM1 6h1v1h1v1h-2zM7 6h1v2h-2v-1h1zM3 8h3v1h-3zM2 4h5v1h-5z" fill="#fa960a"/>
<path transform="translate(652 247)" d="M3 0h3v1h-3zM1 1h2v1h-1v1h-1zM6 1h2v2h-1v-1h-1zM0 3h1v3h-1zM8 3h1v3h-1zM1 6h1v1h1v1h-2zM7 6h1v2h-2v-1h1zM3 8h3v1h-3zM2 4h5v1h-5z" fill="#fa960a"/>
<path transform="translate(655 253)" d="M3 0h3v1h-3zM1 1h2v1h-1v1h-1zM6 1h2v2h-1v-1h-1zM0 3h1v3h-1zM8 3h1v3h-1zM1 6h1v1h1v1h-2zM7 6h1v2h-2v-1h1zM3 8h3v1h-3zM2 4h5v1h-5z" fill="#fabc0a"/>
<path transform="translate(651 251)" d="M3 0h3v1h-3zM1 1h2v1h-1v1h-1zM6 1h2v2h-1v-1h-1zM0 3h1v3h-1zM8 3h1v3h-1zM1 6h1v1h1v1h-2zM7 6h1v2h-2v-1h1zM3 8h3v1h-3zM2 4h5v1h-5z" fill="#fa960a"/>
<path transform="translate(598 253)" d="M3 0h3v1h-3zM1 1h2v1h-1v1h-1zM6 1h2v2h-1v-1h-1zM0 3h1v3h-1zM8 3h1v3h-1zM1 6h1v1h1v1h-2zM7 6h1v2h-2v-1h1zM3 8h3v1h-3zM2 4h5v1h-5z" fill="#fa960a"/>
<path transform="translate(630 256)" d="M3 0h3v1h-3zM1 1h2v1h-1v1h-1zM6 1h2v2h-1v-1h-1zM0 3h1v3h-1zM8 3h1v3h-1zM1 6h1v1h1v1h-2zM7 6h1v2h-2v-1h1zM3 8h3v1h-3zM2 4h5v1h-5z" fill="#f57f0a"/>
<path transform="translate(637 258)" d="M3 0h3v1h-3zM1 1h2v1h-1v1h-1zM6 1h2v2h-1v-1h-1zM0 3h1v3h-1zM8 3h1v3h-1zM1 6h1v1h1v1h-2zM7 6h1v2h-2v-1h1zM3 8h3v1h-3zM2 4h5v1h-5zM4 2h1v5h-1z" fill="#fa960a"/>
<path transform="translate(646 261)" d="M3 0h3v1h-3zM1 1h2v1h-1v1h-1zM6 1h2v2h-1v-1h-1zM0 3h1v3h-1zM8 3h1v3h-1zM1 6h1v1h1v1h-2zM7 6h1v2h-2v-1h1zM3 8h3v1h-3zM2 4h5v1h-5z" fill="#fa960a"/>
<path transform="translate(613 266)" d="M3 0h3v1h-3zM1 1h2v1h-1v1h-1zM6 1h2v2h-1v-1h-1zM0 3h1v3h-1zM8 3h1v3h-1zM1 6h1v1h1v1h-2zM7 6h1v2h-2v-1h1zM3 8h3v1h-3zM2 4h5v1h-5z" fill="#fa960a"/>
<path transform="translate(604 272)" d="M3 0h3v1h-3zM1 1h2v1h-1v1h-1zM6 1h2v2h-1v-1h-1zM0 3h1v3h-1zM8 3h1v3h-1zM1 6h1v1h1v1h-2zM7 6h1v2h-2v-1h1zM3 8h3v1h-3zM2 4h5v1h-5z" fill="#fa960a"/>
<path transform="translate(637 272)" d="M3 0h3v1h-3zM1 1h2v1h-1v1h-1zM6 1h2v2h-1v-1h-1zM0 3h1v3h-1zM8 3h1v3h-1zM1 6h1v1h1v1h-2zM7 6h1v2h-2v-1h1zM3 8h3v1h-3zM2 4h5v1h-5z" fill="#fa960a"/>
<path transform="translate(668 266)" d="M3 0h3v1h-3zM1 1h2v1h-1v1h-1zM6 1h2v2h-1v-1h-1zM0 3h1v3h-1zM8 3h1v3h-1zM1 6h1v1h1v1h-2zM7 6h1v2h-2v-1h1zM3 8h3v1h-3zM2 4h5v1h-5z" fill="#fabc0a"/>
<path transform="translate(675 266)" d="M3 0h3v1h-3zM1 1h2v1h-1v1h-1zM6 1h2v2h-1v-1h-1zM0 3h1v3h-1zM8 3h1v3h-1zM1 6h1v1h1v1h-2zM7 6h1v2h-2v-1h1zM3 8h3v1h-3zM2 4h5v1h-5z" fill="#fad514"/>
<path transform="translate(685 267)" d="M3 0h3v1h-3zM1 1h2v1h-1v1h-1zM6 1h2v2h-1v-1h-1zM0 3h1v3h-1zM8 3h1v3h-1zM1 6h1v1h1v1h-2zM7 6h1v2h-2v-1h1zM3 8h3v1h-3zM2 4h5v1h-5z" fill="#fad514"/>
<path transform="translate(675 273)" d="M3 0h3v1h-3zM1 1h2v1h-1v1h-1zM6 1h2v2h-1v-1h-1zM0 3h1v3h-1zM8 3h1v3h-1zM1 6h1v1h1v1h-2zM7 6h1v2h-2v-1h1zM3 8h3v1h-3zM2 4h5v1h-5z" fill="#fad514"/>
<path transform="translate(707 266)" d="M3 0h3v1h-3zM1 1h2v1h-1v1h-1zM6 1h2v2h-1v-1h-1zM0 3h1v3h-1zM8 3h1v3h-1zM1 6h1v1h1v1h-2zM7 6h1v2h-2v-1h1zM3 8h3v1h-3zM2 4h5v1h-5z" fill="#fabc0a"/>
<path transform="translate(717 261)" d="M3 0h3v1h-3zM1 1h2v1h-1v1h-1zM6 1h2v2h-1v-1h-1zM0 3h1v3h-1zM8 3h1v3h-1zM1 6h1v1h1v1h-2zM7 6h1v2h-2v-1h1zM3 8h3v1h-3zM2 4h5v1h-5z" fill="#fabc0a"/>
<path transform="translate(716 263)" d="M3 0h3v1h-3zM1 1h2v1h-1v1h-1zM6 1h2v2h-1v-1h-1zM0 3h1v3h-1zM8 3h1v3h-1zM1 6h1v1h1v1h-2zM7 6h1v2h-2v-1h1zM3 8h3v1h-3zM2 4h5v1h-5z" fill="#fabc0a"/>
<path transform="translate(717 259)" d="M3 0h3v1h-3zM1 1h2v1h-1v1h-1zM6 1h2v2h-1v-1h-1zM0 3h1v3h-1zM8 3h1v3h-1zM1 6h1v1h1v1h-2zM7 6h1v2h-2v-1h1zM3 8h3v1h-3zM2 4h5v1h-5z" fill="#fabc0a"/>
<path transform="translate(724 264)" d="M3 0h3v1h-3zM1 1h2v1h-1v1h-1zM6 1h2v2h-1v-1h-1zM0 3h1v3h-1zM8 3h1v3h-1zM1 6h1v1h1v1h-2zM7 6h1v2h-2v-1h1zM3 8h3v1h-3zM2 4h5v1h-5z" fill="#fabc0a"/>
<path transform="translate(678 226)" d="M1 4h7v1h-7zM4 1h1v7h-1z" fill="#fa960a"/>
<path transform="translate(703 219)" d="M1 4h7v1h-7zM4 1h1v7h-1z" fill="#fa960a"/>
<path transform="translate(588 299)" d="M3 0h3v1h-3zM1 1h2v1h-1v1h-1zM6 1h2v2h-1v-1h-1zM0 3h1v3h-1zM8 3h1v3h-1zM1 6h1v1h1v1h-2zM7 6h1v2h-2v-1h1zM3 8h3v1h-3zM2 4h5v1h-5z" fill="#fa960a"/>
<path transform="translate(545 309)" d="M3 0h3v1h-3zM1 1h2v1h-1v1h-1zM6 1h2v2h-1v-1h-1zM0 3h1v3h-1zM8 3h1v3h-1zM1 6h1v1h1v1h-2zM7 6h1v2h-2v-1h1zM3 8h3v1h-3zM2 4h5v1h-5z" fill="#fa960a"/>
<path transform="translate(726 282)" d="M3 0h3v1h-3zM1 1h2v1h-1v1h-1zM6 1h2v2h-1v-1h-1zM0 3h1v3h-1zM8 3h1v3h-1zM1 6h1v1h1v1h-2zM7 6h1v2h-2v-1h1zM3 8h3v1h-3zM2 4h5v1h-5zM4 2h1v5h-1z" fill="#fabc0a"/>
<path transform="translate(504 32)" d="M1 4h7v1h-7zM4 1h1v7h-1z" fill="#f57f0a"/>
<path transform="translate(443 72)" d="M1 4h7v1h-7zM4 1h1v7h-1z" fill="#fa960a"/>
<path transform="translate(460 705)" d="M3 0h3v1h-3zM1 1h2v1h-1v1h-1zM6 1h2v2h-1v-1h-1zM0 3h1v3h-1zM8 3h1v3h-1zM1 6h1v1h1v1h-2zM7 6h1v2h-2v-1h1zM3 8h3v1h-3zM2 4h5v1h-5zM4 2h1v5h-1z" fill="#faaa0a"/>
<path transform="translate(512 762)" d="M3 0h3v1h-3zM1 1h2v1h-1v1h-1zM6 1h2v2h-1v-1h-1zM0 3h1v3h-1zM8 3h1v3h-1zM1 6h1v1h1v1h-2zM7 6h1v2h-2v-1h1zM3 8h3v1h-3zM2 4h5v1h-5zM4 2h1v5h-1z" fill="#faaa0a"/>
<path transform="translate(481 776)" d="M3 0h3v1h-3zM1 1h2v1h-1v1h-1zM6 1h2v2h-1v-1h-1zM0 3h1v3h-1zM8 3h1v3h-1zM1 6h1v1h1v1h-2zM7 6h1v2h-2v-1h1zM3 8h3v1h-3zM2 4h5v1h-5z" fill="#faaa0a"/>
<path transform="translate(546 778)" d="M3 0h3v1h-3zM1 1h2v1h-1v1h-1zM6 1h2v2h-1v-1h-1zM0 3h1v3h-1zM8 3h1v3h-1zM1 6h1v1h1v1h-2zM7 6h1v2h-2v-1h1zM3 8h3v1h-3zM2 4h5v1h-5zM4 2h1v5h-1z" fill="#faaa0a"/>
</g>
<rect x="8" y="758" width="245" height="46" fill="#000"/>
<rect x="9.5" y="759.5" width="242" height="43" fill="none" stroke="#a4a4a4" stroke-width="1"/>
<text x="13.1" y="770.8" font-family="'DejaVu Sans Condensed','DejaVu Sans','Liberation Sans',sans-serif" font-size="9.2" fill="#fff" textLength="35.5" lengthAdjust="spacingAndGlyphs">Symbols</text>
<text x="53.1" y="770.8" font-family="'DejaVu Sans Condensed','DejaVu Sans','Liberation Sans',sans-serif" font-size="9.2" fill="#fff" textLength="16.9" lengthAdjust="spacingAndGlyphs">-CG</text>
<text x="78.0" y="770.8" font-family="'DejaVu Sans Condensed','DejaVu Sans','Liberation Sans',sans-serif" font-size="9.2" fill="#fff" textLength="14.5" lengthAdjust="spacingAndGlyphs">-IC</text>
<text x="99.0" y="770.8" font-family="'DejaVu Sans Condensed','DejaVu Sans','Liberation Sans',sans-serif" font-size="9.2" fill="#fff" textLength="19.8" lengthAdjust="spacingAndGlyphs">+CG</text>
<text x="123.8" y="770.8" font-family="'DejaVu Sans Condensed','DejaVu Sans','Liberation Sans',sans-serif" font-size="9.2" fill="#fff" textLength="17.8" lengthAdjust="spacingAndGlyphs">+IC</text>
<text x="153.1" y="770.8" font-family="'DejaVu Sans Condensed','DejaVu Sans','Liberation Sans',sans-serif" font-size="9.2" fill="#fff" textLength="89.8" lengthAdjust="spacingAndGlyphs">Strike age color codes</text>
<text x="13.1" y="783.8" font-family="'DejaVu Sans Condensed','DejaVu Sans','Liberation Sans',sans-serif" font-size="9.2" fill="#fff" textLength="28.5" lengthAdjust="spacingAndGlyphs">Recent</text>
<text x="13.1" y="796.8" font-family="'DejaVu Sans Condensed','DejaVu Sans','Liberation Sans',sans-serif" font-size="9.2" fill="#fff" textLength="14.5" lengthAdjust="spacingAndGlyphs">Old</text>
<path transform="translate(56 776)" d="M3 0h3v1h-3zM1 1h2v1h-1v1h-1zM6 1h2v2h-1v-1h-1zM0 3h1v3h-1zM8 3h1v3h-1zM1 6h1v1h1v1h-2zM7 6h1v2h-2v-1h1zM3 8h3v1h-3zM2 4h5v1h-5z" fill="#00e6e6" shape-rendering="crispEdges"/>
<path transform="translate(81 776)" d="M1 4h7v1h-7z" fill="#00e6e6" shape-rendering="crispEdges"/>
<path transform="translate(106 776)" d="M3 0h3v1h-3zM1 1h2v1h-1v1h-1zM6 1h2v2h-1v-1h-1zM0 3h1v3h-1zM8 3h1v3h-1zM1 6h1v1h1v1h-2zM7 6h1v2h-2v-1h1zM3 8h3v1h-3zM2 4h5v1h-5zM4 2h1v5h-1z" fill="#00e6e6" shape-rendering="crispEdges"/>
<path transform="translate(131 776)" d="M1 4h7v1h-7zM4 1h1v7h-1z" fill="#00e6e6" shape-rendering="crispEdges"/>
<path transform="translate(56 789)" d="M3 0h3v1h-3zM1 1h2v1h-1v1h-1zM6 1h2v2h-1v-1h-1zM0 3h1v3h-1zM8 3h1v3h-1zM1 6h1v1h1v1h-2zM7 6h1v2h-2v-1h1zM3 8h3v1h-3zM2 4h5v1h-5z" fill="#f2f200" shape-rendering="crispEdges"/>
<path transform="translate(81 789)" d="M1 4h7v1h-7z" fill="#f2f200" shape-rendering="crispEdges"/>
<path transform="translate(106 789)" d="M3 0h3v1h-3zM1 1h2v1h-1v1h-1zM6 1h2v2h-1v-1h-1zM0 3h1v3h-1zM8 3h1v3h-1zM1 6h1v1h1v1h-2zM7 6h1v2h-2v-1h1zM3 8h3v1h-3zM2 4h5v1h-5zM4 2h1v5h-1z" fill="#f2f200" shape-rendering="crispEdges"/>
<path transform="translate(131 789)" d="M1 4h7v1h-7zM4 1h1v7h-1z" fill="#f2f200" shape-rendering="crispEdges"/>
<text x="153.5" y="783.8" font-family="'DejaVu Sans Condensed','DejaVu Sans','Liberation Sans',sans-serif" font-size="9.2" fill="#f2da1c" textLength="16.7" lengthAdjust="spacingAndGlyphs">15+</text>
<text x="187.8" y="783.8" font-family="'DejaVu Sans Condensed','DejaVu Sans','Liberation Sans',sans-serif" font-size="9.2" fill="#f0aa1a" textLength="16.4" lengthAdjust="spacingAndGlyphs">30+</text>
<text x="222.8" y="783.8" font-family="'DejaVu Sans Condensed','DejaVu Sans','Liberation Sans',sans-serif" font-size="9.2" fill="#ee921a" textLength="16.4" lengthAdjust="spacingAndGlyphs">45+</text>
<text x="153.5" y="796.8" font-family="'DejaVu Sans Condensed','DejaVu Sans','Liberation Sans',sans-serif" font-size="9.2" fill="#ea801a" textLength="16.7" lengthAdjust="spacingAndGlyphs">60+</text>
<text x="187.8" y="796.8" font-family="'DejaVu Sans Condensed','DejaVu Sans','Liberation Sans',sans-serif" font-size="9.2" fill="#e85e14" textLength="16.4" lengthAdjust="spacingAndGlyphs">75+</text>
<text x="222.8" y="796.8" font-family="'DejaVu Sans Condensed','DejaVu Sans','Liberation Sans',sans-serif" font-size="9.2" fill="#e84010" textLength="16.4" lengthAdjust="spacingAndGlyphs">90+</text>
<rect x="685" y="792" width="121" height="14" fill="#000"/>
<text x="689.2" y="802.0" font-family="'DejaVu Sans Condensed','DejaVu Sans','Liberation Sans',sans-serif" font-size="9.2" fill="#fff" textLength="112.6" lengthAdjust="spacingAndGlyphs">©2005 Astrogenic Systems</text>
</svg>
</div>
<div id="side">
<div class="box" style="top:8px;height:320px;"></div>
<div class="box" style="top:333px;height:115px;"></div>
<div class="box" style="top:453px;height:350px;"></div>
<div class="btn" style="left:819px;top:16px;width:58px;height:18px;background:#5c0000;"></div>
<div class="btn" style="left:883px;top:16px;width:58px;height:18px;background:#333;"></div>
<div class="btn" style="left:994px;top:16px;width:128px;height:18px;background:#333;"></div>
<div class="btn" style="left:821px;top:64px;width:82px;height:16px;background:#585858;"></div>
<div class="btn" style="left:931px;top:64px;width:82px;height:16px;background:#585858;"></div>
<div class="btn" style="left:1041px;top:64px;width:82px;height:16px;background:#585858;"></div>
<div class="hl" style="left:821px;top:217px;width:303px;"></div>
<div class="bar" style="left:925px;top:227px;"><i style="width:11px;background:#ff0000;"></i></div>
<div class="bar" style="left:1028px;top:227px;"><i style="width:35px;background:#8cd2ff;"></i></div>
<div class="bar" style="left:925px;top:281px;"><i style="width:2px;background:#ff69b4;"></i></div>
<div class="bar" style="left:1028px;top:281px;"><i style="width:1px;background:#00e000;"></i></div>
<div class="hl" style="left:821px;top:358px;width:302px;"></div>

<svg width="1138" height="812" viewBox="0 0 1138 812" style="position:absolute;left:0;top:0" shape-rendering="crispEdges">
<polyline fill="none" stroke="#8cd2ff" stroke-width="1" stroke-linejoin="miter" points="839.4,769.3 841.7,764.6 843.3,761.7"/>
<polyline fill="none" stroke="#8cd2ff" stroke-width="1" stroke-linejoin="miter" points="848.5,769.3 849.2,758.2 850.0,753.9 852.8,753.9 853.6,759.8 854.0,766.1 854.8,769.5"/>
<polyline fill="none" stroke="#8cd2ff" stroke-width="1" stroke-linejoin="miter" points="865.5,769.3 865.9,766.1 866.7,762.2 867.8,764.6"/>
<polyline fill="none" stroke="#8cd2ff" stroke-width="1" stroke-linejoin="miter" points="880.9,770.9 882.1,776.4"/>
<polyline fill="none" stroke="#8cd2ff" stroke-width="1" stroke-linejoin="miter" points="883.3,769.5 885.2,765.3 886.0,764.6 887.6,767.7 888.8,769.5 890.0,772.5 891.2,776.4 892.4,775.6 892.8,769.3 893.6,763.0 894.3,753.9 897.1,753.9 897.9,758.2 898.7,764.6 900.3,767.7 903.0,769.5 903.8,763.0 904.6,756.6 905.4,744.0 906.0,734.5 907.4,736.1"/>
<polyline fill="none" stroke="#8cd2ff" stroke-width="1" stroke-linejoin="miter" points="901.6,763.8 903.6,769.3 904.0,763.0 904.7,748.7 905.7,736.9 906.7,734.5 907.5,736.9"/>
<polyline fill="none" stroke="#8cd2ff" stroke-width="1" stroke-linejoin="miter" points="942.7,776.8 943.1,769.3 943.7,763.0 944.5,753.5 945.1,751.9"/>
<polyline fill="none" stroke="#ff0000" stroke-width="1.2" stroke-linejoin="miter" points="849.2,776.8 849.6,772.5 850.4,770.9"/>
<polyline fill="none" stroke="#ff0000" stroke-width="1.2" stroke-linejoin="miter" points="860.7,772.5 862.3,775.6"/>
<polyline fill="none" stroke="#ff0000" stroke-width="1.2" stroke-linejoin="miter" points="863.5,769.5 865.5,772.5 866.4,775.6"/>
<polyline fill="none" stroke="#ff0000" stroke-width="1.2" stroke-linejoin="miter" points="880.5,776.4 881.3,772.5 882.5,770.5"/>
<polyline fill="none" stroke="#ff0000" stroke-width="1.2" stroke-linejoin="miter" points="885.2,770.1 886.0,774.1 886.8,776.4"/>
<polyline fill="none" stroke="#ff0000" stroke-width="1.2" stroke-linejoin="miter" points="888.4,776.4 889.2,772.5 890.4,771.7"/>
<polyline fill="none" stroke="#ff0000" stroke-width="1.2" stroke-linejoin="miter" points="890.4,769.5 892.4,770.9"/>
<polyline fill="none" stroke="#ff0000" stroke-width="1.2" stroke-linejoin="miter" points="893.9,769.5 897.1,769.5 898.3,772.5 899.1,776.4 900.7,775.6 902.3,771.7 903.4,769.5 905.8,769.5 906.4,774.1 907.0,776.4"/>
<polyline fill="none" stroke="#ff0000" stroke-width="1.2" stroke-linejoin="miter" points="900.0,776.4 901.2,771.7 902.4,769.5 905.1,769.5 905.9,774.1 906.7,776.4"/>
<polyline fill="none" stroke="#ff0000" stroke-width="1.2" stroke-linejoin="miter" points="944.3,769.5 944.7,772.5 945.5,776.4"/>
<polyline fill="none" stroke="#ff69b4" stroke-width="1.2" stroke-linejoin="miter" points="848.5,775.6 848.9,771.7 849.6,769.5 853.2,769.5 854.0,772.5 854.6,775.6"/>
<polyline fill="none" stroke="#ff69b4" stroke-width="1.2" stroke-linejoin="miter" points="858.3,776.8 858.7,772.5 859.5,769.5 862.3,769.5 863.5,772.5 864.3,775.6"/>
<polyline fill="none" stroke="#ff69b4" stroke-width="1.2" stroke-linejoin="miter" points="872.6,774.1 873.4,769.5 876.5,769.5 877.3,773.3 877.7,776.4"/>
<polyline fill="none" stroke="#00e800" stroke-width="1.2" stroke-linejoin="miter" points="838.2,776.8 838.7,773.3 839.8,769.5 843.3,769.5 843.9,773.3 844.7,776.8"/>
<polyline fill="none" stroke="#ffffff" stroke-width="1" stroke-linejoin="miter" points="822.4,777.4 822.4,753.9 823.4,775.6 825.1,769.5 826.3,761.7 829.9,761.7 831.1,776.8 832.2,761.7 832.6,746.0 835.8,746.0 836.8,753.9 837.1,769.5 837.8,769.5 839.4,763.8 843.3,753.5 843.7,758.2 846.1,761.7 846.9,763.0 847.4,776.8 848.5,753.9 849.6,742.0 850.4,738.2 852.8,738.2 853.8,743.2 854.6,753.9 855.0,769.5 855.8,771.7 856.8,769.5 858.3,769.5 859.5,761.7 860.7,764.6 861.4,767.7 862.3,761.7 863.5,764.6 864.7,766.9 865.5,761.7 868.6,761.7 869.8,766.1 871.2,772.5 871.8,775.6 873.4,761.7 876.5,761.7 877.5,766.1 878.5,769.5 882.1,769.5 883.3,761.7 886.8,761.7 888.0,766.1 889.6,761.7 891.2,769.3 892.8,764.6 893.3,753.9 894.3,751.9 894.7,746.0 897.5,746.0 898.3,751.9 899.1,753.9 899.9,767.7 901.1,764.6 903.8,761.7 905.0,753.9 905.4,744.0 906.4,730.4 906.5,730.4 907.5,736.9 908.5,737.7 909.3,746.4 910.3,756.6 911.7,760.6 912.7,770.5 913.1,776.8 917.2,776.8 917.6,773.3 918.6,769.5 923.3,769.5 924.5,774.1 924.9,776.8 927.3,776.8 927.5,773.3 928.5,765.3 929.4,761.7 932.6,761.7 933.2,770.1 933.9,772.5 934.0,776.8 939.3,776.8 940.7,771.7 942.7,764.6 943.5,752.3 944.3,746.4 945.1,751.9 945.9,753.5 947.6,753.5 948.1,766.1 948.8,766.9 949.1,776.8 950.2,776.8 950.6,773.3 951.8,769.5 954.4,769.5 955.4,773.3 956.3,776.8 965.3,776.8 965.7,773.3 966.9,769.5 969.6,769.5 970.8,774.1 971.6,776.8 972.8,775.6 974.4,769.5 977.9,769.5 978.7,774.1 979.1,775.6 980.7,769.5 983.5,769.5 984.3,774.1 984.7,776.8 1005.2,776.8 1005.7,774.8 1006.5,770.9 1007.5,769.5 1010.5,769.5 1010.7,774.1 1011.5,774.8 1011.7,776.8 1016.2,776.8 1016.6,773.3 1017.4,772.5 1017.6,765.3 1018.6,761.7 1022.6,761.7 1023.4,767.7 1025.5,770.5 1026.5,774.8 1027.7,776.8"/>
<path d="M822 777.5H1088.5M1088.5 542V778" stroke="#c0c0c0" stroke-width="1" fill="none"/>
<path d="M822.5 775V779M866.5 775V779M911.5 775V779M955.5 775V779M1000.5 775V779M1044.5 775V779M1089.5 775V779M1084 699.5H1089M1084 620.5H1089M1084 542.5H1089M1086 738.5H1091M1086 660.5H1091M1086 581.5H1091" stroke="#c0c0c0" stroke-width="1" fill="none"/>
</svg>
<span id="t0" class="t" style="top:20.09px;font-size:11px;color:#d8cccc;font-weight:bold;transform:scaleX(1.1212);transform-origin:left center;left:823.82px;">STRIKE</span>
<span id="t1" class="t" style="top:20.09px;font-size:11px;color:#c0c0c0;font-weight:bold;transform:scaleX(1.1675);transform-origin:left center;left:889.27px;">NOISE</span>
<span id="t2" class="t" style="top:19.25px;font-size:12px;color:#ffffff;font-weight:bold;letter-spacing:0.237px;left:997.73px;">Bng 213°</span>
<span id="t3" class="t" style="top:19.25px;font-size:12px;color:#00e400;font-weight:bold;letter-spacing:0.365px;left:1075.39px;">348mi</span>
<span id="t4" class="t" style="top:66.59px;font-size:11px;color:#ffffff;letter-spacing:0.484px;left:828.78px;">Strikes/min</span>
<span id="t5" class="t" style="top:66.59px;font-size:11px;color:#ffffff;letter-spacing:0.317px;left:943.65px;">Close/min</span>
<span id="t6" class="t" style="top:66.59px;font-size:11px;color:#ffffff;letter-spacing:0.358px;left:1049.46px;">Noises/min</span>
<span id="t7" class="t" style="top:88.12px;font-size:27.4px;color:#ffffff;font-weight:bold;right:234.70px;">0</span>
<span id="t8" class="t" style="top:88.12px;font-size:27.4px;color:#ffffff;font-weight:bold;right:124.66px;">0</span>
<span id="t9" class="t" style="top:88.12px;font-size:27.4px;color:#b8b8b8;font-weight:bold;right:15.36px;">0</span>
<span id="t10" class="t" style="top:132.75px;font-size:12px;color:#ffffff;letter-spacing:0.321px;left:826.69px;">Total Strikes</span>
<span id="t11" class="t" style="top:132.75px;font-size:12px;color:#ffffff;letter-spacing:0.378px;left:944.78px;">Total Close</span>
<span id="t12" class="t" style="top:132.75px;font-size:12px;color:#c4c4c4;letter-spacing:0.382px;left:1047.35px;">Total Noises</span>
<span id="t13" class="t" style="top:150.65px;font-size:12px;color:#ffffff;right:234.80px;">131</span>
<span id="t14" class="t" style="top:150.65px;font-size:12px;color:#ffffff;right:124.85px;">0</span>
<span id="t15" class="t" style="top:150.65px;font-size:12px;color:#ffffff;right:15.44px;">29</span>
<span id="t16" class="t" style="top:205.05px;font-size:12px;color:#b4b4b4;letter-spacing:0.268px;left:820.25px;">Lightning type distribution</span>
<span id="t17" class="t" style="top:227.87px;font-size:11.5px;color:#ffffff;font-weight:bold;letter-spacing:-0.193px;left:820.66px;">Cloud-ground</span>
<span id="t18" class="t" style="top:227.45px;font-size:12px;color:#d0d0d0;left:911.75px;">+</span>
<span id="t19" class="t" style="top:227.87px;font-size:11.5px;color:#ffffff;font-weight:bold;transform:scaleX(1.0905);transform-origin:left center;left:978.68px;">23%</span>
<span id="t20" class="t" style="top:227.45px;font-size:12px;color:#d0d0d0;font-weight:bold;transform:scaleX(1.6152);transform-origin:left center;left:1015.48px;">-</span>
<span id="t21" class="t" style="top:227.87px;font-size:11.5px;color:#ffffff;font-weight:bold;transform:scaleX(1.0972);transform-origin:left center;left:1081.45px;">71%</span>
<span id="t22" class="t" style="top:251.77px;font-size:11.5px;color:#c4c4c4;font-weight:bold;letter-spacing:0.006px;left:820.66px;">Count</span>
<span id="t23" class="t" style="top:251.77px;font-size:11.5px;color:#ffffff;font-weight:bold;left:924.72px;">30</span>
<span id="t24" class="t" style="top:251.77px;font-size:11.5px;color:#ffffff;font-weight:bold;left:1028.01px;">93</span>
<span id="t25" class="t" style="top:281.87px;font-size:11.5px;color:#ffffff;font-weight:bold;letter-spacing:-0.146px;left:820.17px;">Intracloud</span>
<span id="t26" class="t" style="top:281.45px;font-size:12px;color:#d0d0d0;left:911.75px;">+</span>
<span id="t27" class="t" style="top:281.87px;font-size:11.5px;color:#ffffff;font-weight:bold;transform:scaleX(1.1398);transform-origin:left center;left:979.15px;">5%</span>
<span id="t28" class="t" style="top:281.45px;font-size:12px;color:#d0d0d0;font-weight:bold;transform:scaleX(1.6152);transform-origin:left center;left:1015.48px;">-</span>
<span id="t29" class="t" style="top:281.87px;font-size:11.5px;color:#ffffff;font-weight:bold;transform:scaleX(1.1362);transform-origin:left center;left:1081.81px;">2%</span>
<span id="t30" class="t" style="top:305.77px;font-size:11.5px;color:#c4c4c4;font-weight:bold;letter-spacing:0.006px;left:820.66px;">Count</span>
<span id="t31" class="t" style="top:305.77px;font-size:11.5px;color:#ffffff;font-weight:bold;left:924.64px;">6</span>
<span id="t32" class="t" style="top:305.77px;font-size:11.5px;color:#ffffff;font-weight:bold;left:1027.61px;">2</span>
<span id="t33" class="t" style="top:339.06px;font-size:16px;color:#00e800;font-weight:bold;letter-spacing:0.313px;left:821.11px;">2/22/2026 5:05:02 AM</span>
<span id="t34" class="t" style="top:377.65px;font-size:12px;color:#ffffff;letter-spacing:0.279px;left:820.79px;">Squelch</span>
<span id="t35" class="t" style="top:377.65px;font-size:12px;color:#ffffff;left:909.12px;">0</span>
<span id="t36" class="t" style="top:377.65px;font-size:12px;color:#ffffff;letter-spacing:0.631px;left:980.54px;">Upload</span>
<span id="t37" class="t" style="top:377.65px;font-size:12px;color:#c4c4c4;letter-spacing:0.523px;left:1060.25px;">Disabled</span>
<span id="t38" class="t" style="top:397.75px;font-size:12px;color:#ffffff;letter-spacing:0.541px;left:820.25px;">Persistence</span>
<span id="t39" class="t" style="top:397.75px;font-size:12px;color:#ffffff;letter-spacing:0.144px;left:909.12px;">90 min</span>
<span id="t40" class="t" style="top:397.75px;font-size:12px;color:#ffffff;letter-spacing:0.637px;left:980.84px;">Capture</span>
<span id="t41" class="t" style="top:397.75px;font-size:12px;color:#00e400;letter-spacing:-0.091px;left:1061.37px;">Active</span>
<span id="t42" class="t" style="top:417.65px;font-size:12px;color:#ffffff;letter-spacing:0.634px;left:820.25px;">Range</span>
<span id="t43" class="t" style="top:417.65px;font-size:12px;color:#ffffff;letter-spacing:0.288px;left:908.87px;">313 mi</span>
<span id="t44" class="t" style="top:417.65px;font-size:12px;color:#ffffff;letter-spacing:0.176px;left:980.25px;">Receiver</span>
<span id="t45" class="t" style="top:417.65px;font-size:12px;color:#00e400;letter-spacing:0.568px;left:1060.25px;">Enabled</span>
<span id="t46" class="t" style="top:464.75px;font-size:12px;color:#c4c4c4;letter-spacing:0.239px;left:820.54px;">Uptime</span>
<span id="t47" class="t" style="top:464.75px;font-size:12px;color:#ffffff;letter-spacing:0.469px;left:909.12px;">976:50</span>
<span id="t48" class="t" style="top:464.75px;font-size:12px;color:#c4c4c4;letter-spacing:0.427px;left:980.25px;">Peak time</span>
<span id="t49" class="t" style="top:464.75px;font-size:12px;color:#c4c4c4;letter-spacing:0.796px;left:1060.25px;">Plot</span>
<span id="t50" class="t" style="top:487.55px;font-size:12px;color:#c4c4c4;letter-spacing:0.645px;left:820.25px;">Peak rate</span>
<span id="t51" class="t" style="top:487.55px;font-size:12px;color:#ffffff;letter-spacing:0.243px;left:909.04px;">6/min</span>
<span id="t52" class="t" style="top:487.55px;font-size:12px;color:#ffffff;letter-spacing:0.415px;left:981.06px;">4:24 AM</span>
<span id="t53" class="t" style="top:487.55px;font-size:12px;color:#ffffff;letter-spacing:0.388px;left:1060.79px;">Strike</span>
<span id="t54" class="t" style="top:517.35px;font-size:12px;color:#c4c4c4;letter-spacing:0.453px;left:822.78px;">Trend graph</span>
<span id="t55" class="t" style="top:517.35px;font-size:12px;color:#ffffff;letter-spacing:0.129px;left:907.92px;">60 min</span>
<span id="t56" class="t" style="top:536.87px;font-size:11.5px;color:#c4c4c4;letter-spacing:-0.066px;left:1091.19px;">30</span>
<span id="t57" class="t" style="top:614.87px;font-size:11.5px;color:#c4c4c4;letter-spacing:-0.551px;left:1092.03px;">20</span>
<span id="t58" class="t" style="top:693.87px;font-size:11.5px;color:#c4c4c4;letter-spacing:-0.078px;left:1091.89px;">10</span>
<span id="t59" class="t" style="top:783.17px;font-size:11.5px;color:#c4c4c4;letter-spacing:-0.261px;left:819.50px;">60</span>
<span id="t60" class="t" style="top:783.17px;font-size:11.5px;color:#c4c4c4;letter-spacing:-0.188px;left:863.69px;">50</span>
<span id="t61" class="t" style="top:783.17px;font-size:11.5px;color:#c4c4c4;letter-spacing:-0.659px;left:908.76px;">40</span>
<span id="t62" class="t" style="top:783.17px;font-size:11.5px;color:#c4c4c4;letter-spacing:-0.188px;left:952.69px;">30</span>
<span id="t63" class="t" style="top:783.17px;font-size:11.5px;color:#c4c4c4;letter-spacing:-0.268px;left:997.37px;">20</span>
<span id="t64" class="t" style="top:783.17px;font-size:11.5px;color:#c4c4c4;letter-spacing:-0.409px;left:1041.95px;">10</span>
<span id="t65" class="t" style="top:783.17px;font-size:11.5px;color:#c4c4c4;left:1087.42px;">0</span>
<span id="t66" class="t" style="top:783.17px;font-size:11.5px;color:#c4c4c4;letter-spacing:-1.233px;left:1100.14px;">min</span>
</div>
</body></html>
